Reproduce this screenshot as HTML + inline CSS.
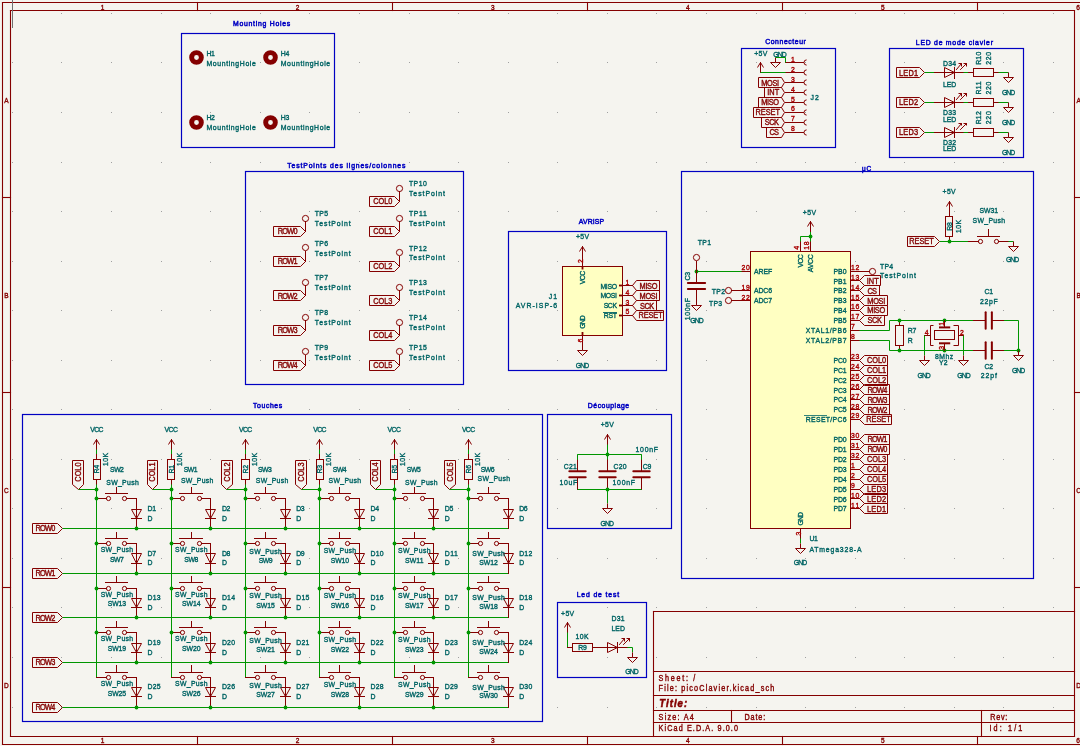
<!DOCTYPE html>
<html><head><meta charset="utf-8"><style>
html,body{margin:0;padding:0;background:#f5f4ef;overflow:hidden;}
svg{display:block;will-change:transform;}
text{font-family:"Liberation Sans", sans-serif;}
</style></head><body>
<svg width="1080" height="746" viewBox="0 0 1080 746">
<rect x="0" y="0" width="1080" height="746" fill="#f5f4ef"/>
<rect x="12" y="13" width="1" height="1" fill="#a0a0a0"/>
<rect x="12" y="62" width="1" height="1" fill="#a0a0a0"/>
<rect x="12" y="112" width="1" height="1" fill="#a0a0a0"/>
<rect x="12" y="162" width="1" height="1" fill="#a0a0a0"/>
<rect x="12" y="211" width="1" height="1" fill="#a0a0a0"/>
<rect x="12" y="261" width="1" height="1" fill="#a0a0a0"/>
<rect x="12" y="310" width="1" height="1" fill="#a0a0a0"/>
<rect x="12" y="360" width="1" height="1" fill="#a0a0a0"/>
<rect x="12" y="409" width="1" height="1" fill="#a0a0a0"/>
<rect x="12" y="459" width="1" height="1" fill="#a0a0a0"/>
<rect x="12" y="508" width="1" height="1" fill="#a0a0a0"/>
<rect x="12" y="558" width="1" height="1" fill="#a0a0a0"/>
<rect x="12" y="607" width="1" height="1" fill="#a0a0a0"/>
<rect x="12" y="657" width="1" height="1" fill="#a0a0a0"/>
<rect x="12" y="707" width="1" height="1" fill="#a0a0a0"/>
<rect x="61" y="13" width="1" height="1" fill="#a0a0a0"/>
<rect x="61" y="62" width="1" height="1" fill="#a0a0a0"/>
<rect x="61" y="112" width="1" height="1" fill="#a0a0a0"/>
<rect x="61" y="162" width="1" height="1" fill="#a0a0a0"/>
<rect x="61" y="211" width="1" height="1" fill="#a0a0a0"/>
<rect x="61" y="261" width="1" height="1" fill="#a0a0a0"/>
<rect x="61" y="310" width="1" height="1" fill="#a0a0a0"/>
<rect x="61" y="360" width="1" height="1" fill="#a0a0a0"/>
<rect x="61" y="409" width="1" height="1" fill="#a0a0a0"/>
<rect x="61" y="459" width="1" height="1" fill="#a0a0a0"/>
<rect x="61" y="508" width="1" height="1" fill="#a0a0a0"/>
<rect x="61" y="558" width="1" height="1" fill="#a0a0a0"/>
<rect x="61" y="607" width="1" height="1" fill="#a0a0a0"/>
<rect x="61" y="657" width="1" height="1" fill="#a0a0a0"/>
<rect x="61" y="707" width="1" height="1" fill="#a0a0a0"/>
<rect x="111" y="13" width="1" height="1" fill="#a0a0a0"/>
<rect x="111" y="62" width="1" height="1" fill="#a0a0a0"/>
<rect x="111" y="112" width="1" height="1" fill="#a0a0a0"/>
<rect x="111" y="162" width="1" height="1" fill="#a0a0a0"/>
<rect x="111" y="211" width="1" height="1" fill="#a0a0a0"/>
<rect x="111" y="261" width="1" height="1" fill="#a0a0a0"/>
<rect x="111" y="310" width="1" height="1" fill="#a0a0a0"/>
<rect x="111" y="360" width="1" height="1" fill="#a0a0a0"/>
<rect x="111" y="409" width="1" height="1" fill="#a0a0a0"/>
<rect x="111" y="459" width="1" height="1" fill="#a0a0a0"/>
<rect x="111" y="508" width="1" height="1" fill="#a0a0a0"/>
<rect x="111" y="558" width="1" height="1" fill="#a0a0a0"/>
<rect x="111" y="607" width="1" height="1" fill="#a0a0a0"/>
<rect x="111" y="657" width="1" height="1" fill="#a0a0a0"/>
<rect x="111" y="707" width="1" height="1" fill="#a0a0a0"/>
<rect x="161" y="13" width="1" height="1" fill="#a0a0a0"/>
<rect x="161" y="62" width="1" height="1" fill="#a0a0a0"/>
<rect x="161" y="112" width="1" height="1" fill="#a0a0a0"/>
<rect x="161" y="162" width="1" height="1" fill="#a0a0a0"/>
<rect x="161" y="211" width="1" height="1" fill="#a0a0a0"/>
<rect x="161" y="261" width="1" height="1" fill="#a0a0a0"/>
<rect x="161" y="310" width="1" height="1" fill="#a0a0a0"/>
<rect x="161" y="360" width="1" height="1" fill="#a0a0a0"/>
<rect x="161" y="409" width="1" height="1" fill="#a0a0a0"/>
<rect x="161" y="459" width="1" height="1" fill="#a0a0a0"/>
<rect x="161" y="508" width="1" height="1" fill="#a0a0a0"/>
<rect x="161" y="558" width="1" height="1" fill="#a0a0a0"/>
<rect x="161" y="607" width="1" height="1" fill="#a0a0a0"/>
<rect x="161" y="657" width="1" height="1" fill="#a0a0a0"/>
<rect x="161" y="707" width="1" height="1" fill="#a0a0a0"/>
<rect x="210" y="13" width="1" height="1" fill="#a0a0a0"/>
<rect x="210" y="62" width="1" height="1" fill="#a0a0a0"/>
<rect x="210" y="112" width="1" height="1" fill="#a0a0a0"/>
<rect x="210" y="162" width="1" height="1" fill="#a0a0a0"/>
<rect x="210" y="211" width="1" height="1" fill="#a0a0a0"/>
<rect x="210" y="261" width="1" height="1" fill="#a0a0a0"/>
<rect x="210" y="310" width="1" height="1" fill="#a0a0a0"/>
<rect x="210" y="360" width="1" height="1" fill="#a0a0a0"/>
<rect x="210" y="409" width="1" height="1" fill="#a0a0a0"/>
<rect x="210" y="459" width="1" height="1" fill="#a0a0a0"/>
<rect x="210" y="508" width="1" height="1" fill="#a0a0a0"/>
<rect x="210" y="558" width="1" height="1" fill="#a0a0a0"/>
<rect x="210" y="607" width="1" height="1" fill="#a0a0a0"/>
<rect x="210" y="657" width="1" height="1" fill="#a0a0a0"/>
<rect x="210" y="707" width="1" height="1" fill="#a0a0a0"/>
<rect x="260" y="13" width="1" height="1" fill="#a0a0a0"/>
<rect x="260" y="62" width="1" height="1" fill="#a0a0a0"/>
<rect x="260" y="112" width="1" height="1" fill="#a0a0a0"/>
<rect x="260" y="162" width="1" height="1" fill="#a0a0a0"/>
<rect x="260" y="211" width="1" height="1" fill="#a0a0a0"/>
<rect x="260" y="261" width="1" height="1" fill="#a0a0a0"/>
<rect x="260" y="310" width="1" height="1" fill="#a0a0a0"/>
<rect x="260" y="360" width="1" height="1" fill="#a0a0a0"/>
<rect x="260" y="409" width="1" height="1" fill="#a0a0a0"/>
<rect x="260" y="459" width="1" height="1" fill="#a0a0a0"/>
<rect x="260" y="508" width="1" height="1" fill="#a0a0a0"/>
<rect x="260" y="558" width="1" height="1" fill="#a0a0a0"/>
<rect x="260" y="607" width="1" height="1" fill="#a0a0a0"/>
<rect x="260" y="657" width="1" height="1" fill="#a0a0a0"/>
<rect x="260" y="707" width="1" height="1" fill="#a0a0a0"/>
<rect x="309" y="13" width="1" height="1" fill="#a0a0a0"/>
<rect x="309" y="62" width="1" height="1" fill="#a0a0a0"/>
<rect x="309" y="112" width="1" height="1" fill="#a0a0a0"/>
<rect x="309" y="162" width="1" height="1" fill="#a0a0a0"/>
<rect x="309" y="211" width="1" height="1" fill="#a0a0a0"/>
<rect x="309" y="261" width="1" height="1" fill="#a0a0a0"/>
<rect x="309" y="310" width="1" height="1" fill="#a0a0a0"/>
<rect x="309" y="360" width="1" height="1" fill="#a0a0a0"/>
<rect x="309" y="409" width="1" height="1" fill="#a0a0a0"/>
<rect x="309" y="459" width="1" height="1" fill="#a0a0a0"/>
<rect x="309" y="508" width="1" height="1" fill="#a0a0a0"/>
<rect x="309" y="558" width="1" height="1" fill="#a0a0a0"/>
<rect x="309" y="607" width="1" height="1" fill="#a0a0a0"/>
<rect x="309" y="657" width="1" height="1" fill="#a0a0a0"/>
<rect x="309" y="707" width="1" height="1" fill="#a0a0a0"/>
<rect x="359" y="13" width="1" height="1" fill="#a0a0a0"/>
<rect x="359" y="62" width="1" height="1" fill="#a0a0a0"/>
<rect x="359" y="112" width="1" height="1" fill="#a0a0a0"/>
<rect x="359" y="162" width="1" height="1" fill="#a0a0a0"/>
<rect x="359" y="211" width="1" height="1" fill="#a0a0a0"/>
<rect x="359" y="261" width="1" height="1" fill="#a0a0a0"/>
<rect x="359" y="310" width="1" height="1" fill="#a0a0a0"/>
<rect x="359" y="360" width="1" height="1" fill="#a0a0a0"/>
<rect x="359" y="409" width="1" height="1" fill="#a0a0a0"/>
<rect x="359" y="459" width="1" height="1" fill="#a0a0a0"/>
<rect x="359" y="508" width="1" height="1" fill="#a0a0a0"/>
<rect x="359" y="558" width="1" height="1" fill="#a0a0a0"/>
<rect x="359" y="607" width="1" height="1" fill="#a0a0a0"/>
<rect x="359" y="657" width="1" height="1" fill="#a0a0a0"/>
<rect x="359" y="707" width="1" height="1" fill="#a0a0a0"/>
<rect x="409" y="13" width="1" height="1" fill="#a0a0a0"/>
<rect x="409" y="62" width="1" height="1" fill="#a0a0a0"/>
<rect x="409" y="112" width="1" height="1" fill="#a0a0a0"/>
<rect x="409" y="162" width="1" height="1" fill="#a0a0a0"/>
<rect x="409" y="211" width="1" height="1" fill="#a0a0a0"/>
<rect x="409" y="261" width="1" height="1" fill="#a0a0a0"/>
<rect x="409" y="310" width="1" height="1" fill="#a0a0a0"/>
<rect x="409" y="360" width="1" height="1" fill="#a0a0a0"/>
<rect x="409" y="409" width="1" height="1" fill="#a0a0a0"/>
<rect x="409" y="459" width="1" height="1" fill="#a0a0a0"/>
<rect x="409" y="508" width="1" height="1" fill="#a0a0a0"/>
<rect x="409" y="558" width="1" height="1" fill="#a0a0a0"/>
<rect x="409" y="607" width="1" height="1" fill="#a0a0a0"/>
<rect x="409" y="657" width="1" height="1" fill="#a0a0a0"/>
<rect x="409" y="707" width="1" height="1" fill="#a0a0a0"/>
<rect x="458" y="13" width="1" height="1" fill="#a0a0a0"/>
<rect x="458" y="62" width="1" height="1" fill="#a0a0a0"/>
<rect x="458" y="112" width="1" height="1" fill="#a0a0a0"/>
<rect x="458" y="162" width="1" height="1" fill="#a0a0a0"/>
<rect x="458" y="211" width="1" height="1" fill="#a0a0a0"/>
<rect x="458" y="261" width="1" height="1" fill="#a0a0a0"/>
<rect x="458" y="310" width="1" height="1" fill="#a0a0a0"/>
<rect x="458" y="360" width="1" height="1" fill="#a0a0a0"/>
<rect x="458" y="409" width="1" height="1" fill="#a0a0a0"/>
<rect x="458" y="459" width="1" height="1" fill="#a0a0a0"/>
<rect x="458" y="508" width="1" height="1" fill="#a0a0a0"/>
<rect x="458" y="558" width="1" height="1" fill="#a0a0a0"/>
<rect x="458" y="607" width="1" height="1" fill="#a0a0a0"/>
<rect x="458" y="657" width="1" height="1" fill="#a0a0a0"/>
<rect x="458" y="707" width="1" height="1" fill="#a0a0a0"/>
<rect x="508" y="13" width="1" height="1" fill="#a0a0a0"/>
<rect x="508" y="62" width="1" height="1" fill="#a0a0a0"/>
<rect x="508" y="112" width="1" height="1" fill="#a0a0a0"/>
<rect x="508" y="162" width="1" height="1" fill="#a0a0a0"/>
<rect x="508" y="211" width="1" height="1" fill="#a0a0a0"/>
<rect x="508" y="261" width="1" height="1" fill="#a0a0a0"/>
<rect x="508" y="310" width="1" height="1" fill="#a0a0a0"/>
<rect x="508" y="360" width="1" height="1" fill="#a0a0a0"/>
<rect x="508" y="409" width="1" height="1" fill="#a0a0a0"/>
<rect x="508" y="459" width="1" height="1" fill="#a0a0a0"/>
<rect x="508" y="508" width="1" height="1" fill="#a0a0a0"/>
<rect x="508" y="558" width="1" height="1" fill="#a0a0a0"/>
<rect x="508" y="607" width="1" height="1" fill="#a0a0a0"/>
<rect x="508" y="657" width="1" height="1" fill="#a0a0a0"/>
<rect x="508" y="707" width="1" height="1" fill="#a0a0a0"/>
<rect x="557" y="13" width="1" height="1" fill="#a0a0a0"/>
<rect x="557" y="62" width="1" height="1" fill="#a0a0a0"/>
<rect x="557" y="112" width="1" height="1" fill="#a0a0a0"/>
<rect x="557" y="162" width="1" height="1" fill="#a0a0a0"/>
<rect x="557" y="211" width="1" height="1" fill="#a0a0a0"/>
<rect x="557" y="261" width="1" height="1" fill="#a0a0a0"/>
<rect x="557" y="310" width="1" height="1" fill="#a0a0a0"/>
<rect x="557" y="360" width="1" height="1" fill="#a0a0a0"/>
<rect x="557" y="409" width="1" height="1" fill="#a0a0a0"/>
<rect x="557" y="459" width="1" height="1" fill="#a0a0a0"/>
<rect x="557" y="508" width="1" height="1" fill="#a0a0a0"/>
<rect x="557" y="558" width="1" height="1" fill="#a0a0a0"/>
<rect x="557" y="607" width="1" height="1" fill="#a0a0a0"/>
<rect x="557" y="657" width="1" height="1" fill="#a0a0a0"/>
<rect x="557" y="707" width="1" height="1" fill="#a0a0a0"/>
<rect x="607" y="13" width="1" height="1" fill="#a0a0a0"/>
<rect x="607" y="62" width="1" height="1" fill="#a0a0a0"/>
<rect x="607" y="112" width="1" height="1" fill="#a0a0a0"/>
<rect x="607" y="162" width="1" height="1" fill="#a0a0a0"/>
<rect x="607" y="211" width="1" height="1" fill="#a0a0a0"/>
<rect x="607" y="261" width="1" height="1" fill="#a0a0a0"/>
<rect x="607" y="310" width="1" height="1" fill="#a0a0a0"/>
<rect x="607" y="360" width="1" height="1" fill="#a0a0a0"/>
<rect x="607" y="409" width="1" height="1" fill="#a0a0a0"/>
<rect x="607" y="459" width="1" height="1" fill="#a0a0a0"/>
<rect x="607" y="508" width="1" height="1" fill="#a0a0a0"/>
<rect x="607" y="558" width="1" height="1" fill="#a0a0a0"/>
<rect x="607" y="607" width="1" height="1" fill="#a0a0a0"/>
<rect x="607" y="657" width="1" height="1" fill="#a0a0a0"/>
<rect x="607" y="707" width="1" height="1" fill="#a0a0a0"/>
<rect x="656" y="13" width="1" height="1" fill="#a0a0a0"/>
<rect x="656" y="62" width="1" height="1" fill="#a0a0a0"/>
<rect x="656" y="112" width="1" height="1" fill="#a0a0a0"/>
<rect x="656" y="162" width="1" height="1" fill="#a0a0a0"/>
<rect x="656" y="211" width="1" height="1" fill="#a0a0a0"/>
<rect x="656" y="261" width="1" height="1" fill="#a0a0a0"/>
<rect x="656" y="310" width="1" height="1" fill="#a0a0a0"/>
<rect x="656" y="360" width="1" height="1" fill="#a0a0a0"/>
<rect x="656" y="409" width="1" height="1" fill="#a0a0a0"/>
<rect x="656" y="459" width="1" height="1" fill="#a0a0a0"/>
<rect x="656" y="508" width="1" height="1" fill="#a0a0a0"/>
<rect x="656" y="558" width="1" height="1" fill="#a0a0a0"/>
<rect x="656" y="607" width="1" height="1" fill="#a0a0a0"/>
<rect x="656" y="657" width="1" height="1" fill="#a0a0a0"/>
<rect x="656" y="707" width="1" height="1" fill="#a0a0a0"/>
<rect x="706" y="13" width="1" height="1" fill="#a0a0a0"/>
<rect x="706" y="62" width="1" height="1" fill="#a0a0a0"/>
<rect x="706" y="112" width="1" height="1" fill="#a0a0a0"/>
<rect x="706" y="162" width="1" height="1" fill="#a0a0a0"/>
<rect x="706" y="211" width="1" height="1" fill="#a0a0a0"/>
<rect x="706" y="261" width="1" height="1" fill="#a0a0a0"/>
<rect x="706" y="310" width="1" height="1" fill="#a0a0a0"/>
<rect x="706" y="360" width="1" height="1" fill="#a0a0a0"/>
<rect x="706" y="409" width="1" height="1" fill="#a0a0a0"/>
<rect x="706" y="459" width="1" height="1" fill="#a0a0a0"/>
<rect x="706" y="508" width="1" height="1" fill="#a0a0a0"/>
<rect x="706" y="558" width="1" height="1" fill="#a0a0a0"/>
<rect x="706" y="607" width="1" height="1" fill="#a0a0a0"/>
<rect x="706" y="657" width="1" height="1" fill="#a0a0a0"/>
<rect x="706" y="707" width="1" height="1" fill="#a0a0a0"/>
<rect x="756" y="13" width="1" height="1" fill="#a0a0a0"/>
<rect x="756" y="62" width="1" height="1" fill="#a0a0a0"/>
<rect x="756" y="112" width="1" height="1" fill="#a0a0a0"/>
<rect x="756" y="162" width="1" height="1" fill="#a0a0a0"/>
<rect x="756" y="211" width="1" height="1" fill="#a0a0a0"/>
<rect x="756" y="261" width="1" height="1" fill="#a0a0a0"/>
<rect x="756" y="310" width="1" height="1" fill="#a0a0a0"/>
<rect x="756" y="360" width="1" height="1" fill="#a0a0a0"/>
<rect x="756" y="409" width="1" height="1" fill="#a0a0a0"/>
<rect x="756" y="459" width="1" height="1" fill="#a0a0a0"/>
<rect x="756" y="508" width="1" height="1" fill="#a0a0a0"/>
<rect x="756" y="558" width="1" height="1" fill="#a0a0a0"/>
<rect x="756" y="607" width="1" height="1" fill="#a0a0a0"/>
<rect x="756" y="657" width="1" height="1" fill="#a0a0a0"/>
<rect x="756" y="707" width="1" height="1" fill="#a0a0a0"/>
<rect x="805" y="13" width="1" height="1" fill="#a0a0a0"/>
<rect x="805" y="62" width="1" height="1" fill="#a0a0a0"/>
<rect x="805" y="112" width="1" height="1" fill="#a0a0a0"/>
<rect x="805" y="162" width="1" height="1" fill="#a0a0a0"/>
<rect x="805" y="211" width="1" height="1" fill="#a0a0a0"/>
<rect x="805" y="261" width="1" height="1" fill="#a0a0a0"/>
<rect x="805" y="310" width="1" height="1" fill="#a0a0a0"/>
<rect x="805" y="360" width="1" height="1" fill="#a0a0a0"/>
<rect x="805" y="409" width="1" height="1" fill="#a0a0a0"/>
<rect x="805" y="459" width="1" height="1" fill="#a0a0a0"/>
<rect x="805" y="508" width="1" height="1" fill="#a0a0a0"/>
<rect x="805" y="558" width="1" height="1" fill="#a0a0a0"/>
<rect x="805" y="607" width="1" height="1" fill="#a0a0a0"/>
<rect x="805" y="657" width="1" height="1" fill="#a0a0a0"/>
<rect x="805" y="707" width="1" height="1" fill="#a0a0a0"/>
<rect x="855" y="13" width="1" height="1" fill="#a0a0a0"/>
<rect x="855" y="62" width="1" height="1" fill="#a0a0a0"/>
<rect x="855" y="112" width="1" height="1" fill="#a0a0a0"/>
<rect x="855" y="162" width="1" height="1" fill="#a0a0a0"/>
<rect x="855" y="211" width="1" height="1" fill="#a0a0a0"/>
<rect x="855" y="261" width="1" height="1" fill="#a0a0a0"/>
<rect x="855" y="310" width="1" height="1" fill="#a0a0a0"/>
<rect x="855" y="360" width="1" height="1" fill="#a0a0a0"/>
<rect x="855" y="409" width="1" height="1" fill="#a0a0a0"/>
<rect x="855" y="459" width="1" height="1" fill="#a0a0a0"/>
<rect x="855" y="508" width="1" height="1" fill="#a0a0a0"/>
<rect x="855" y="558" width="1" height="1" fill="#a0a0a0"/>
<rect x="855" y="607" width="1" height="1" fill="#a0a0a0"/>
<rect x="855" y="657" width="1" height="1" fill="#a0a0a0"/>
<rect x="855" y="707" width="1" height="1" fill="#a0a0a0"/>
<rect x="904" y="13" width="1" height="1" fill="#a0a0a0"/>
<rect x="904" y="62" width="1" height="1" fill="#a0a0a0"/>
<rect x="904" y="112" width="1" height="1" fill="#a0a0a0"/>
<rect x="904" y="162" width="1" height="1" fill="#a0a0a0"/>
<rect x="904" y="211" width="1" height="1" fill="#a0a0a0"/>
<rect x="904" y="261" width="1" height="1" fill="#a0a0a0"/>
<rect x="904" y="310" width="1" height="1" fill="#a0a0a0"/>
<rect x="904" y="360" width="1" height="1" fill="#a0a0a0"/>
<rect x="904" y="409" width="1" height="1" fill="#a0a0a0"/>
<rect x="904" y="459" width="1" height="1" fill="#a0a0a0"/>
<rect x="904" y="508" width="1" height="1" fill="#a0a0a0"/>
<rect x="904" y="558" width="1" height="1" fill="#a0a0a0"/>
<rect x="904" y="607" width="1" height="1" fill="#a0a0a0"/>
<rect x="904" y="657" width="1" height="1" fill="#a0a0a0"/>
<rect x="904" y="707" width="1" height="1" fill="#a0a0a0"/>
<rect x="954" y="13" width="1" height="1" fill="#a0a0a0"/>
<rect x="954" y="62" width="1" height="1" fill="#a0a0a0"/>
<rect x="954" y="112" width="1" height="1" fill="#a0a0a0"/>
<rect x="954" y="162" width="1" height="1" fill="#a0a0a0"/>
<rect x="954" y="211" width="1" height="1" fill="#a0a0a0"/>
<rect x="954" y="261" width="1" height="1" fill="#a0a0a0"/>
<rect x="954" y="310" width="1" height="1" fill="#a0a0a0"/>
<rect x="954" y="360" width="1" height="1" fill="#a0a0a0"/>
<rect x="954" y="409" width="1" height="1" fill="#a0a0a0"/>
<rect x="954" y="459" width="1" height="1" fill="#a0a0a0"/>
<rect x="954" y="508" width="1" height="1" fill="#a0a0a0"/>
<rect x="954" y="558" width="1" height="1" fill="#a0a0a0"/>
<rect x="954" y="607" width="1" height="1" fill="#a0a0a0"/>
<rect x="954" y="657" width="1" height="1" fill="#a0a0a0"/>
<rect x="954" y="707" width="1" height="1" fill="#a0a0a0"/>
<rect x="1003" y="13" width="1" height="1" fill="#a0a0a0"/>
<rect x="1003" y="62" width="1" height="1" fill="#a0a0a0"/>
<rect x="1003" y="112" width="1" height="1" fill="#a0a0a0"/>
<rect x="1003" y="162" width="1" height="1" fill="#a0a0a0"/>
<rect x="1003" y="211" width="1" height="1" fill="#a0a0a0"/>
<rect x="1003" y="261" width="1" height="1" fill="#a0a0a0"/>
<rect x="1003" y="310" width="1" height="1" fill="#a0a0a0"/>
<rect x="1003" y="360" width="1" height="1" fill="#a0a0a0"/>
<rect x="1003" y="409" width="1" height="1" fill="#a0a0a0"/>
<rect x="1003" y="459" width="1" height="1" fill="#a0a0a0"/>
<rect x="1003" y="508" width="1" height="1" fill="#a0a0a0"/>
<rect x="1003" y="558" width="1" height="1" fill="#a0a0a0"/>
<rect x="1003" y="607" width="1" height="1" fill="#a0a0a0"/>
<rect x="1003" y="657" width="1" height="1" fill="#a0a0a0"/>
<rect x="1003" y="707" width="1" height="1" fill="#a0a0a0"/>
<rect x="1053" y="13" width="1" height="1" fill="#a0a0a0"/>
<rect x="1053" y="62" width="1" height="1" fill="#a0a0a0"/>
<rect x="1053" y="112" width="1" height="1" fill="#a0a0a0"/>
<rect x="1053" y="162" width="1" height="1" fill="#a0a0a0"/>
<rect x="1053" y="211" width="1" height="1" fill="#a0a0a0"/>
<rect x="1053" y="261" width="1" height="1" fill="#a0a0a0"/>
<rect x="1053" y="310" width="1" height="1" fill="#a0a0a0"/>
<rect x="1053" y="360" width="1" height="1" fill="#a0a0a0"/>
<rect x="1053" y="409" width="1" height="1" fill="#a0a0a0"/>
<rect x="1053" y="459" width="1" height="1" fill="#a0a0a0"/>
<rect x="1053" y="508" width="1" height="1" fill="#a0a0a0"/>
<rect x="1053" y="558" width="1" height="1" fill="#a0a0a0"/>
<rect x="1053" y="607" width="1" height="1" fill="#a0a0a0"/>
<rect x="1053" y="657" width="1" height="1" fill="#a0a0a0"/>
<rect x="1053" y="707" width="1" height="1" fill="#a0a0a0"/>
<line x1="2.5" y1="2.5" x2="1090.5" y2="2.5" stroke="#840000" stroke-width="1.1" stroke-linecap="square"/>
<line x1="2.5" y1="2.5" x2="2.5" y2="744.5" stroke="#840000" stroke-width="1.1" stroke-linecap="square"/>
<line x1="2.5" y1="744.5" x2="1090.5" y2="744.5" stroke="#840000" stroke-width="1.1" stroke-linecap="square"/>
<line x1="10.5" y1="10.5" x2="1074.5" y2="10.5" stroke="#840000" stroke-width="1.1" stroke-linecap="square"/>
<line x1="10.5" y1="10.5" x2="10.5" y2="736.5" stroke="#840000" stroke-width="1.1" stroke-linecap="square"/>
<line x1="10.5" y1="736.5" x2="1074.5" y2="736.5" stroke="#840000" stroke-width="1.1" stroke-linecap="square"/>
<line x1="1074.5" y1="10.5" x2="1074.5" y2="736.5" stroke="#840000" stroke-width="1.1" stroke-linecap="square"/>
<line x1="197.5" y1="2.5" x2="197.5" y2="10.5" stroke="#840000" stroke-width="1.1" stroke-linecap="square"/>
<line x1="197.5" y1="736.5" x2="197.5" y2="744.5" stroke="#840000" stroke-width="1.1" stroke-linecap="square"/>
<line x1="392.5" y1="2.5" x2="392.5" y2="10.5" stroke="#840000" stroke-width="1.1" stroke-linecap="square"/>
<line x1="392.5" y1="736.5" x2="392.5" y2="744.5" stroke="#840000" stroke-width="1.1" stroke-linecap="square"/>
<line x1="587.5" y1="2.5" x2="587.5" y2="10.5" stroke="#840000" stroke-width="1.1" stroke-linecap="square"/>
<line x1="587.5" y1="736.5" x2="587.5" y2="744.5" stroke="#840000" stroke-width="1.1" stroke-linecap="square"/>
<line x1="782.5" y1="2.5" x2="782.5" y2="10.5" stroke="#840000" stroke-width="1.1" stroke-linecap="square"/>
<line x1="782.5" y1="736.5" x2="782.5" y2="744.5" stroke="#840000" stroke-width="1.1" stroke-linecap="square"/>
<line x1="977.5" y1="2.5" x2="977.5" y2="10.5" stroke="#840000" stroke-width="1.1" stroke-linecap="square"/>
<line x1="977.5" y1="736.5" x2="977.5" y2="744.5" stroke="#840000" stroke-width="1.1" stroke-linecap="square"/>
<line x1="2.5" y1="197.5" x2="10.5" y2="197.5" stroke="#840000" stroke-width="1.1" stroke-linecap="square"/>
<line x1="2.5" y1="392.5" x2="10.5" y2="392.5" stroke="#840000" stroke-width="1.1" stroke-linecap="square"/>
<line x1="2.5" y1="587.5" x2="10.5" y2="587.5" stroke="#840000" stroke-width="1.1" stroke-linecap="square"/>
<line x1="1074.5" y1="197.5" x2="1082.5" y2="197.5" stroke="#840000" stroke-width="1.1" stroke-linecap="square"/>
<line x1="1074.5" y1="392.5" x2="1082.5" y2="392.5" stroke="#840000" stroke-width="1.1" stroke-linecap="square"/>
<line x1="1074.5" y1="587.5" x2="1082.5" y2="587.5" stroke="#840000" stroke-width="1.1" stroke-linecap="square"/>
<text x="0" y="0" transform="translate(102.5 10.2) scale(0.86 1)" fill="#840000" stroke="#840000" stroke-width="0.4" font-size="7.6" text-anchor="middle">1</text>
<text x="0" y="0" transform="translate(102.5 742.6) scale(0.86 1)" fill="#840000" stroke="#840000" stroke-width="0.4" font-size="7.6" text-anchor="middle">1</text>
<text x="0" y="0" transform="translate(297.6 10.2) scale(0.86 1)" fill="#840000" stroke="#840000" stroke-width="0.4" font-size="7.6" text-anchor="middle">2</text>
<text x="0" y="0" transform="translate(297.6 742.6) scale(0.86 1)" fill="#840000" stroke="#840000" stroke-width="0.4" font-size="7.6" text-anchor="middle">2</text>
<text x="0" y="0" transform="translate(492.7 10.2) scale(0.86 1)" fill="#840000" stroke="#840000" stroke-width="0.4" font-size="7.6" text-anchor="middle">3</text>
<text x="0" y="0" transform="translate(492.7 742.6) scale(0.86 1)" fill="#840000" stroke="#840000" stroke-width="0.4" font-size="7.6" text-anchor="middle">3</text>
<text x="0" y="0" transform="translate(687.8 10.2) scale(0.86 1)" fill="#840000" stroke="#840000" stroke-width="0.4" font-size="7.6" text-anchor="middle">4</text>
<text x="0" y="0" transform="translate(687.8 742.6) scale(0.86 1)" fill="#840000" stroke="#840000" stroke-width="0.4" font-size="7.6" text-anchor="middle">4</text>
<text x="0" y="0" transform="translate(882.9 10.2) scale(0.86 1)" fill="#840000" stroke="#840000" stroke-width="0.4" font-size="7.6" text-anchor="middle">5</text>
<text x="0" y="0" transform="translate(882.9 742.6) scale(0.86 1)" fill="#840000" stroke="#840000" stroke-width="0.4" font-size="7.6" text-anchor="middle">5</text>
<text x="0" y="0" transform="translate(1078 10.2) scale(0.86 1)" fill="#840000" stroke="#840000" stroke-width="0.4" font-size="7.6" text-anchor="middle">6</text>
<text x="0" y="0" transform="translate(1078 742.6) scale(0.86 1)" fill="#840000" stroke="#840000" stroke-width="0.4" font-size="7.6" text-anchor="middle">6</text>
<text x="0" y="0" transform="translate(6.4 102.7) scale(0.86 1)" fill="#840000" stroke="#840000" stroke-width="0.4" font-size="7.6" text-anchor="middle">A</text>
<text x="0" y="0" transform="translate(1078.6 102.7) scale(0.86 1)" fill="#840000" stroke="#840000" stroke-width="0.4" font-size="7.6" text-anchor="middle">A</text>
<text x="0" y="0" transform="translate(6.4 297.8) scale(0.86 1)" fill="#840000" stroke="#840000" stroke-width="0.4" font-size="7.6" text-anchor="middle">B</text>
<text x="0" y="0" transform="translate(1078.6 297.8) scale(0.86 1)" fill="#840000" stroke="#840000" stroke-width="0.4" font-size="7.6" text-anchor="middle">B</text>
<text x="0" y="0" transform="translate(6.4 492.9) scale(0.86 1)" fill="#840000" stroke="#840000" stroke-width="0.4" font-size="7.6" text-anchor="middle">C</text>
<text x="0" y="0" transform="translate(1078.6 492.9) scale(0.86 1)" fill="#840000" stroke="#840000" stroke-width="0.4" font-size="7.6" text-anchor="middle">C</text>
<text x="0" y="0" transform="translate(6.4 688) scale(0.86 1)" fill="#840000" stroke="#840000" stroke-width="0.4" font-size="7.6" text-anchor="middle">D</text>
<text x="0" y="0" transform="translate(1078.6 688) scale(0.86 1)" fill="#840000" stroke="#840000" stroke-width="0.4" font-size="7.6" text-anchor="middle">D</text>
<line x1="653.5" y1="611.5" x2="1074.5" y2="611.5" stroke="#840000" stroke-width="1.1" stroke-linecap="square"/>
<line x1="653.5" y1="611.5" x2="653.5" y2="736.5" stroke="#840000" stroke-width="1.1" stroke-linecap="square"/>
<line x1="653.5" y1="671.5" x2="1074.5" y2="671.5" stroke="#840000" stroke-width="1.1" stroke-linecap="square"/>
<line x1="653.5" y1="695.5" x2="1074.5" y2="695.5" stroke="#840000" stroke-width="1.1" stroke-linecap="square"/>
<line x1="653.5" y1="710.5" x2="1074.5" y2="710.5" stroke="#840000" stroke-width="1.1" stroke-linecap="square"/>
<line x1="653.5" y1="722.5" x2="1074.5" y2="722.5" stroke="#840000" stroke-width="1.1" stroke-linecap="square"/>
<line x1="731.5" y1="710.5" x2="731.5" y2="722.5" stroke="#840000" stroke-width="1.1" stroke-linecap="square"/>
<line x1="981.5" y1="710.5" x2="981.5" y2="736.5" stroke="#840000" stroke-width="1.1" stroke-linecap="square"/>
<text x="0" y="0" transform="translate(658.6 681) scale(0.86 1)" fill="#840000" stroke="#840000" stroke-width="0.4" font-size="8.4" text-anchor="start" textLength="42.67" lengthAdjust="spacing">Sheet: /</text>
<text x="0" y="0" transform="translate(658.6 691.2) scale(0.86 1)" fill="#840000" stroke="#840000" stroke-width="0.4" font-size="8.4" text-anchor="start" textLength="134.53" lengthAdjust="spacing">File: picoClavier.kicad_sch</text>
<text x="0" y="0" transform="translate(659.2 706.6) scale(0.86 1)" fill="#840000" stroke="#840000" font-size="11.2" text-anchor="start" textLength="32.56" lengthAdjust="spacing" font-weight="bold" font-style="italic" stroke-width="0.6">Title:</text>
<text x="0" y="0" transform="translate(658.6 720.4) scale(0.86 1)" fill="#840000" stroke="#840000" stroke-width="0.4" font-size="8.4" text-anchor="start" textLength="40.93" lengthAdjust="spacing">Size: A4</text>
<text x="0" y="0" transform="translate(744.4 720.4) scale(0.86 1)" fill="#840000" stroke="#840000" stroke-width="0.4" font-size="8.4" text-anchor="start" textLength="24.19" lengthAdjust="spacing">Date:</text>
<text x="0" y="0" transform="translate(658.6 731.2) scale(0.86 1)" fill="#840000" stroke="#840000" stroke-width="0.4" font-size="8.4" text-anchor="start" textLength="92.33" lengthAdjust="spacing">KiCad E.D.A. 9.0.0</text>
<text x="0" y="0" transform="translate(990.2 720.4) scale(0.86 1)" fill="#840000" stroke="#840000" stroke-width="0.4" font-size="8.4" text-anchor="start" textLength="19.88" lengthAdjust="spacing">Rev:</text>
<text x="0" y="0" transform="translate(989.4 731.2) scale(0.86 1)" fill="#840000" stroke="#840000" stroke-width="0.4" font-size="8.4" text-anchor="start" textLength="38.37" lengthAdjust="spacing">Id: 1/1</text>
<line x1="12.5" y1="0.5" x2="12.5" y2="27.5" stroke="#707070" stroke-width="1" stroke-linecap="square"/>
<rect x="181.5" y="33.5" width="153" height="114" stroke="#0000c2" stroke-width="1.2" fill="none"/>
<text x="0" y="0" transform="translate(261.6 26.1) scale(0.86 1)" fill="#0000c2" stroke="#0000c2" font-size="8.0" text-anchor="middle" textLength="66.63" lengthAdjust="spacing" stroke-width="0.55">Mounting Holes</text>
<circle cx="196.5" cy="57.5" r="4.85" stroke="#840000" stroke-width="4.9" fill="none"/>
<text x="0" y="0" transform="translate(206.44 55.56) scale(0.86 1)" fill="#006464" stroke="#006464" stroke-width="0.4" font-size="8.0" text-anchor="start" textLength="9.88" lengthAdjust="spacing">H1</text>
<text x="0" y="0" transform="translate(206.44 65.66) scale(0.86 1)" fill="#006464" stroke="#006464" stroke-width="0.4" font-size="8.0" text-anchor="start" textLength="57.44" lengthAdjust="spacing">MountingHole</text>
<circle cx="270.5" cy="57.5" r="4.85" stroke="#840000" stroke-width="4.9" fill="none"/>
<text x="0" y="0" transform="translate(280.75 55.56) scale(0.86 1)" fill="#006464" stroke="#006464" stroke-width="0.4" font-size="8.0" text-anchor="start" textLength="9.88" lengthAdjust="spacing">H4</text>
<text x="0" y="0" transform="translate(280.75 65.66) scale(0.86 1)" fill="#006464" stroke="#006464" stroke-width="0.4" font-size="8.0" text-anchor="start" textLength="57.44" lengthAdjust="spacing">MountingHole</text>
<circle cx="196.5" cy="122.5" r="4.85" stroke="#840000" stroke-width="4.9" fill="none"/>
<text x="0" y="0" transform="translate(206.44 119.98) scale(0.86 1)" fill="#006464" stroke="#006464" stroke-width="0.4" font-size="8.0" text-anchor="start" textLength="9.88" lengthAdjust="spacing">H2</text>
<text x="0" y="0" transform="translate(206.44 130.08) scale(0.86 1)" fill="#006464" stroke="#006464" stroke-width="0.4" font-size="8.0" text-anchor="start" textLength="57.44" lengthAdjust="spacing">MountingHole</text>
<circle cx="270.5" cy="122.5" r="4.85" stroke="#840000" stroke-width="4.9" fill="none"/>
<text x="0" y="0" transform="translate(280.75 119.98) scale(0.86 1)" fill="#006464" stroke="#006464" stroke-width="0.4" font-size="8.0" text-anchor="start" textLength="9.88" lengthAdjust="spacing">H3</text>
<text x="0" y="0" transform="translate(280.75 130.08) scale(0.86 1)" fill="#006464" stroke="#006464" stroke-width="0.4" font-size="8.0" text-anchor="start" textLength="57.44" lengthAdjust="spacing">MountingHole</text>
<rect x="245.5" y="171.5" width="218" height="213" stroke="#0000c2" stroke-width="1.2" fill="none"/>
<text x="0" y="0" transform="translate(346.4 167.6) scale(0.86 1)" fill="#0000c2" stroke="#0000c2" font-size="8.0" text-anchor="middle" textLength="137.33" lengthAdjust="spacing" stroke-width="0.55">TestPoints des lignes/colonnes</text>
<line x1="305.5" y1="231.5" x2="305.5" y2="221.5" stroke="#840000" stroke-width="1.0" stroke-linecap="square"/>
<circle cx="305.5" cy="218.5" r="3.1" stroke="#840000" stroke-width="1.0" fill="none"/>
<polygon points="305.5,231.5 300.5,226.5 273.5,226.5 273.5,236.5 300.5,236.5" stroke="#840000" stroke-width="1.0" fill="none" stroke-linejoin="miter"/>
<text x="0" y="0" transform="translate(287.69 234.19) scale(0.86 1)" fill="#840000" stroke="#840000" stroke-width="0.4" font-size="8.6" text-anchor="middle" textLength="23.25" lengthAdjust="spacing">ROW0</text>
<text x="0" y="0" transform="translate(314.84 215.89) scale(0.86 1)" fill="#006464" stroke="#006464" stroke-width="0.4" font-size="8.0" text-anchor="start" textLength="15.35" lengthAdjust="spacing">TP5</text>
<text x="0" y="0" transform="translate(314.84 225.79) scale(0.86 1)" fill="#006464" stroke="#006464" stroke-width="0.4" font-size="8.0" text-anchor="start" textLength="41.74" lengthAdjust="spacing">TestPoint</text>
<line x1="305.5" y1="261.5" x2="305.5" y2="251.5" stroke="#840000" stroke-width="1.0" stroke-linecap="square"/>
<circle cx="305.5" cy="247.5" r="3.1" stroke="#840000" stroke-width="1.0" fill="none"/>
<polygon points="305.5,261.5 300.5,256.5 273.5,256.5 273.5,266.5 300.5,266.5" stroke="#840000" stroke-width="1.0" fill="none" stroke-linejoin="miter"/>
<text x="0" y="0" transform="translate(287.69 263.92) scale(0.86 1)" fill="#840000" stroke="#840000" stroke-width="0.4" font-size="8.6" text-anchor="middle" textLength="23.25" lengthAdjust="spacing">ROW1</text>
<text x="0" y="0" transform="translate(314.84 245.62) scale(0.86 1)" fill="#006464" stroke="#006464" stroke-width="0.4" font-size="8.0" text-anchor="start" textLength="15.35" lengthAdjust="spacing">TP6</text>
<text x="0" y="0" transform="translate(314.84 255.52) scale(0.86 1)" fill="#006464" stroke="#006464" stroke-width="0.4" font-size="8.0" text-anchor="start" textLength="41.74" lengthAdjust="spacing">TestPoint</text>
<line x1="305.5" y1="295.5" x2="305.5" y2="285.5" stroke="#840000" stroke-width="1.0" stroke-linecap="square"/>
<circle cx="305.5" cy="282.5" r="3.1" stroke="#840000" stroke-width="1.0" fill="none"/>
<polygon points="305.5,295.5 300.5,290.5 273.5,290.5 273.5,300.5 300.5,300.5" stroke="#840000" stroke-width="1.0" fill="none" stroke-linejoin="miter"/>
<text x="0" y="0" transform="translate(287.69 298.61) scale(0.86 1)" fill="#840000" stroke="#840000" stroke-width="0.4" font-size="8.6" text-anchor="middle" textLength="23.25" lengthAdjust="spacing">ROW2</text>
<text x="0" y="0" transform="translate(314.84 280.31) scale(0.86 1)" fill="#006464" stroke="#006464" stroke-width="0.4" font-size="8.0" text-anchor="start" textLength="15.35" lengthAdjust="spacing">TP7</text>
<text x="0" y="0" transform="translate(314.84 290.2) scale(0.86 1)" fill="#006464" stroke="#006464" stroke-width="0.4" font-size="8.0" text-anchor="start" textLength="41.74" lengthAdjust="spacing">TestPoint</text>
<line x1="305.5" y1="330.5" x2="305.5" y2="320.5" stroke="#840000" stroke-width="1.0" stroke-linecap="square"/>
<circle cx="305.5" cy="317.5" r="3.1" stroke="#840000" stroke-width="1.0" fill="none"/>
<polygon points="305.5,330.5 300.5,325.5 273.5,325.5 273.5,335.5 300.5,335.5" stroke="#840000" stroke-width="1.0" fill="none" stroke-linejoin="miter"/>
<text x="0" y="0" transform="translate(287.69 333.29) scale(0.86 1)" fill="#840000" stroke="#840000" stroke-width="0.4" font-size="8.6" text-anchor="middle" textLength="23.25" lengthAdjust="spacing">ROW3</text>
<text x="0" y="0" transform="translate(314.84 314.99) scale(0.86 1)" fill="#006464" stroke="#006464" stroke-width="0.4" font-size="8.0" text-anchor="start" textLength="15.35" lengthAdjust="spacing">TP8</text>
<text x="0" y="0" transform="translate(314.84 324.89) scale(0.86 1)" fill="#006464" stroke="#006464" stroke-width="0.4" font-size="8.0" text-anchor="start" textLength="41.74" lengthAdjust="spacing">TestPoint</text>
<line x1="305.5" y1="365.5" x2="305.5" y2="355.5" stroke="#840000" stroke-width="1.0" stroke-linecap="square"/>
<circle cx="305.5" cy="351.5" r="3.1" stroke="#840000" stroke-width="1.0" fill="none"/>
<polygon points="305.5,365.5 300.5,360.5 273.5,360.5 273.5,370.5 300.5,370.5" stroke="#840000" stroke-width="1.0" fill="none" stroke-linejoin="miter"/>
<text x="0" y="0" transform="translate(287.69 367.98) scale(0.86 1)" fill="#840000" stroke="#840000" stroke-width="0.4" font-size="8.6" text-anchor="middle" textLength="23.25" lengthAdjust="spacing">ROW4</text>
<text x="0" y="0" transform="translate(314.84 349.68) scale(0.86 1)" fill="#006464" stroke="#006464" stroke-width="0.4" font-size="8.0" text-anchor="start" textLength="15.35" lengthAdjust="spacing">TP9</text>
<text x="0" y="0" transform="translate(314.84 359.57) scale(0.86 1)" fill="#006464" stroke="#006464" stroke-width="0.4" font-size="8.0" text-anchor="start" textLength="41.74" lengthAdjust="spacing">TestPoint</text>
<line x1="399.5" y1="201.5" x2="399.5" y2="191.5" stroke="#840000" stroke-width="1.0" stroke-linecap="square"/>
<circle cx="399.5" cy="188.5" r="3.1" stroke="#840000" stroke-width="1.0" fill="none"/>
<polygon points="399.5,201.5 394.5,196.5 369.5,196.5 369.5,206.5 394.5,206.5" stroke="#840000" stroke-width="1.0" fill="none" stroke-linejoin="miter"/>
<text x="0" y="0" transform="translate(382.77 204.46) scale(0.86 1)" fill="#840000" stroke="#840000" stroke-width="0.4" font-size="8.6" text-anchor="middle" textLength="22.38" lengthAdjust="spacing">COL0</text>
<text x="0" y="0" transform="translate(408.97 186.16) scale(0.86 1)" fill="#006464" stroke="#006464" stroke-width="0.4" font-size="8.0" text-anchor="start" textLength="20.7" lengthAdjust="spacing">TP10</text>
<text x="0" y="0" transform="translate(408.97 196.06) scale(0.86 1)" fill="#006464" stroke="#006464" stroke-width="0.4" font-size="8.0" text-anchor="start" textLength="41.74" lengthAdjust="spacing">TestPoint</text>
<line x1="399.5" y1="231.5" x2="399.5" y2="221.5" stroke="#840000" stroke-width="1.0" stroke-linecap="square"/>
<circle cx="399.5" cy="218.5" r="3.1" stroke="#840000" stroke-width="1.0" fill="none"/>
<polygon points="399.5,231.5 394.5,226.5 369.5,226.5 369.5,236.5 394.5,236.5" stroke="#840000" stroke-width="1.0" fill="none" stroke-linejoin="miter"/>
<text x="0" y="0" transform="translate(382.77 234.19) scale(0.86 1)" fill="#840000" stroke="#840000" stroke-width="0.4" font-size="8.6" text-anchor="middle" textLength="22.38" lengthAdjust="spacing">COL1</text>
<text x="0" y="0" transform="translate(408.97 215.89) scale(0.86 1)" fill="#006464" stroke="#006464" stroke-width="0.4" font-size="8.0" text-anchor="start" textLength="20.7" lengthAdjust="spacing">TP11</text>
<text x="0" y="0" transform="translate(408.97 225.79) scale(0.86 1)" fill="#006464" stroke="#006464" stroke-width="0.4" font-size="8.0" text-anchor="start" textLength="41.74" lengthAdjust="spacing">TestPoint</text>
<line x1="399.5" y1="266.5" x2="399.5" y2="256.5" stroke="#840000" stroke-width="1.0" stroke-linecap="square"/>
<circle cx="399.5" cy="252.5" r="3.1" stroke="#840000" stroke-width="1.0" fill="none"/>
<polygon points="399.5,266.5 394.5,261.5 369.5,261.5 369.5,271.5 394.5,271.5" stroke="#840000" stroke-width="1.0" fill="none" stroke-linejoin="miter"/>
<text x="0" y="0" transform="translate(382.77 268.88) scale(0.86 1)" fill="#840000" stroke="#840000" stroke-width="0.4" font-size="8.6" text-anchor="middle" textLength="22.38" lengthAdjust="spacing">COL2</text>
<text x="0" y="0" transform="translate(408.97 250.57) scale(0.86 1)" fill="#006464" stroke="#006464" stroke-width="0.4" font-size="8.0" text-anchor="start" textLength="20.7" lengthAdjust="spacing">TP12</text>
<text x="0" y="0" transform="translate(408.97 260.47) scale(0.86 1)" fill="#006464" stroke="#006464" stroke-width="0.4" font-size="8.0" text-anchor="start" textLength="41.74" lengthAdjust="spacing">TestPoint</text>
<line x1="399.5" y1="300.5" x2="399.5" y2="290.5" stroke="#840000" stroke-width="1.0" stroke-linecap="square"/>
<circle cx="399.5" cy="287.5" r="3.1" stroke="#840000" stroke-width="1.0" fill="none"/>
<polygon points="399.5,300.5 394.5,295.5 369.5,295.5 369.5,305.5 394.5,305.5" stroke="#840000" stroke-width="1.0" fill="none" stroke-linejoin="miter"/>
<text x="0" y="0" transform="translate(382.77 303.56) scale(0.86 1)" fill="#840000" stroke="#840000" stroke-width="0.4" font-size="8.6" text-anchor="middle" textLength="22.38" lengthAdjust="spacing">COL3</text>
<text x="0" y="0" transform="translate(408.97 285.26) scale(0.86 1)" fill="#006464" stroke="#006464" stroke-width="0.4" font-size="8.0" text-anchor="start" textLength="20.7" lengthAdjust="spacing">TP13</text>
<text x="0" y="0" transform="translate(408.97 295.16) scale(0.86 1)" fill="#006464" stroke="#006464" stroke-width="0.4" font-size="8.0" text-anchor="start" textLength="41.74" lengthAdjust="spacing">TestPoint</text>
<line x1="399.5" y1="335.5" x2="399.5" y2="325.5" stroke="#840000" stroke-width="1.0" stroke-linecap="square"/>
<circle cx="399.5" cy="322.5" r="3.1" stroke="#840000" stroke-width="1.0" fill="none"/>
<polygon points="399.5,335.5 394.5,330.5 369.5,330.5 369.5,340.5 394.5,340.5" stroke="#840000" stroke-width="1.0" fill="none" stroke-linejoin="miter"/>
<text x="0" y="0" transform="translate(382.77 338.25) scale(0.86 1)" fill="#840000" stroke="#840000" stroke-width="0.4" font-size="8.6" text-anchor="middle" textLength="22.38" lengthAdjust="spacing">COL4</text>
<text x="0" y="0" transform="translate(408.97 319.94) scale(0.86 1)" fill="#006464" stroke="#006464" stroke-width="0.4" font-size="8.0" text-anchor="start" textLength="20.7" lengthAdjust="spacing">TP14</text>
<text x="0" y="0" transform="translate(408.97 329.84) scale(0.86 1)" fill="#006464" stroke="#006464" stroke-width="0.4" font-size="8.0" text-anchor="start" textLength="41.74" lengthAdjust="spacing">TestPoint</text>
<line x1="399.5" y1="365.5" x2="399.5" y2="355.5" stroke="#840000" stroke-width="1.0" stroke-linecap="square"/>
<circle cx="399.5" cy="351.5" r="3.1" stroke="#840000" stroke-width="1.0" fill="none"/>
<polygon points="399.5,365.5 394.5,360.5 369.5,360.5 369.5,370.5 394.5,370.5" stroke="#840000" stroke-width="1.0" fill="none" stroke-linejoin="miter"/>
<text x="0" y="0" transform="translate(382.77 367.98) scale(0.86 1)" fill="#840000" stroke="#840000" stroke-width="0.4" font-size="8.6" text-anchor="middle" textLength="22.38" lengthAdjust="spacing">COL5</text>
<text x="0" y="0" transform="translate(408.97 349.68) scale(0.86 1)" fill="#006464" stroke="#006464" stroke-width="0.4" font-size="8.0" text-anchor="start" textLength="20.7" lengthAdjust="spacing">TP15</text>
<text x="0" y="0" transform="translate(408.97 359.57) scale(0.86 1)" fill="#006464" stroke="#006464" stroke-width="0.4" font-size="8.0" text-anchor="start" textLength="41.74" lengthAdjust="spacing">TestPoint</text>
<rect x="22.5" y="414.5" width="520" height="307" stroke="#0000c2" stroke-width="1.2" fill="none"/>
<text x="0" y="0" transform="translate(267.6 407.8) scale(0.86 1)" fill="#0000c2" stroke="#0000c2" font-size="8.0" text-anchor="middle" textLength="33.84" lengthAdjust="spacing" stroke-width="0.55">Touches</text>
<polygon points="62.5,528.5 57.5,523.5 32.5,523.5 32.5,533.5 57.5,533.5" stroke="#840000" stroke-width="1.0" fill="none" stroke-linejoin="miter"/>
<text x="0" y="0" transform="translate(45.47 531.49) scale(0.86 1)" fill="#840000" stroke="#840000" stroke-width="0.4" font-size="8.6" text-anchor="middle" textLength="23.25" lengthAdjust="spacing">ROW0</text>
<polyline points="62.5,528.5 508.5,528.5" stroke="#009600" stroke-width="1.0" fill="none" stroke-linejoin="miter"/>
<polygon points="62.5,573.5 57.5,568.5 32.5,568.5 32.5,578.5 57.5,578.5" stroke="#840000" stroke-width="1.0" fill="none" stroke-linejoin="miter"/>
<text x="0" y="0" transform="translate(45.47 576.08) scale(0.86 1)" fill="#840000" stroke="#840000" stroke-width="0.4" font-size="8.6" text-anchor="middle" textLength="23.25" lengthAdjust="spacing">ROW1</text>
<polyline points="62.5,573.5 508.5,573.5" stroke="#009600" stroke-width="1.0" fill="none" stroke-linejoin="miter"/>
<polygon points="62.5,617.5 57.5,612.5 32.5,612.5 32.5,622.5 57.5,622.5" stroke="#840000" stroke-width="1.0" fill="none" stroke-linejoin="miter"/>
<text x="0" y="0" transform="translate(45.47 620.68) scale(0.86 1)" fill="#840000" stroke="#840000" stroke-width="0.4" font-size="8.6" text-anchor="middle" textLength="23.25" lengthAdjust="spacing">ROW2</text>
<polyline points="62.5,617.5 508.5,617.5" stroke="#009600" stroke-width="1.0" fill="none" stroke-linejoin="miter"/>
<polygon points="62.5,662.5 57.5,657.5 32.5,657.5 32.5,667.5 57.5,667.5" stroke="#840000" stroke-width="1.0" fill="none" stroke-linejoin="miter"/>
<text x="0" y="0" transform="translate(45.47 665.27) scale(0.86 1)" fill="#840000" stroke="#840000" stroke-width="0.4" font-size="8.6" text-anchor="middle" textLength="23.25" lengthAdjust="spacing">ROW3</text>
<polyline points="62.5,662.5 508.5,662.5" stroke="#009600" stroke-width="1.0" fill="none" stroke-linejoin="miter"/>
<polygon points="62.5,707.5 57.5,702.5 32.5,702.5 32.5,712.5 57.5,712.5" stroke="#840000" stroke-width="1.0" fill="none" stroke-linejoin="miter"/>
<text x="0" y="0" transform="translate(45.47 709.87) scale(0.86 1)" fill="#840000" stroke="#840000" stroke-width="0.4" font-size="8.6" text-anchor="middle" textLength="23.25" lengthAdjust="spacing">ROW4</text>
<polyline points="62.5,707.5 508.5,707.5" stroke="#009600" stroke-width="1.0" fill="none" stroke-linejoin="miter"/>
<line x1="96.5" y1="449.5" x2="96.5" y2="439.5" stroke="#840000" stroke-width="1.0" stroke-linecap="square"/>
<polyline points="93.5,444.5 96.5,439.5 99.5,444.5" stroke="#840000" stroke-width="1.0" fill="none" stroke-linejoin="miter"/>
<text x="0" y="0" transform="translate(96.95 431.61) scale(0.86 1)" fill="#006464" stroke="#006464" stroke-width="0.4" font-size="8.0" text-anchor="middle" textLength="15.47" lengthAdjust="spacing">VCC</text>
<polyline points="96.5,449.5 96.5,454.5" stroke="#009600" stroke-width="1.0" fill="none" stroke-linejoin="miter"/>
<rect x="93.5" y="459.5" width="7" height="20" stroke="#840000" stroke-width="1.0" fill="none"/>
<line x1="96.5" y1="454.5" x2="96.5" y2="459.5" stroke="#840000" stroke-width="1.0" stroke-linecap="square"/>
<line x1="96.5" y1="479.5" x2="96.5" y2="484.5" stroke="#840000" stroke-width="1.0" stroke-linecap="square"/>
<text x="0" y="0" transform="translate(99.45 469.23) rotate(-90) scale(0.86 1)" fill="#006464" stroke="#006464" stroke-width="0.4" font-size="8.0" text-anchor="middle" textLength="9.88" lengthAdjust="spacing">R4</text>
<text x="0" y="0" transform="translate(108.15 459.43) rotate(-90) scale(0.86 1)" fill="#006464" stroke="#006464" stroke-width="0.4" font-size="8.0" text-anchor="middle" textLength="15.23" lengthAdjust="spacing">10K</text>
<polyline points="96.5,484.5 96.5,489.5" stroke="#009600" stroke-width="1.0" fill="none" stroke-linejoin="miter"/>
<polygon points="78.5,489.5 72.5,484.5 72.5,460.5 83.5,460.5 83.5,484.5" stroke="#840000" stroke-width="1.0" fill="none" stroke-linejoin="miter"/>
<text x="0" y="0" transform="translate(80.93 472.05) rotate(-90) scale(0.86 1)" fill="#840000" stroke="#840000" stroke-width="0.4" font-size="8.6" text-anchor="middle" textLength="22.38" lengthAdjust="spacing">COL0</text>
<polyline points="78.5,489.5 96.5,489.5" stroke="#009600" stroke-width="1.0" fill="none" stroke-linejoin="miter"/>
<circle cx="96.5" cy="489.5" r="1.9" fill="#009600"/>
<polyline points="96.5,489.5 96.5,677.5 96.5,677.5" stroke="#009600" stroke-width="1.0" fill="none" stroke-linejoin="miter"/>
<circle cx="108.5" cy="498.5" r="2.1" stroke="#840000" stroke-width="1.0" fill="none"/>
<circle cx="124.5" cy="498.5" r="2.1" stroke="#840000" stroke-width="1.0" fill="none"/>
<line x1="96.5" y1="498.5" x2="106.5" y2="498.5" stroke="#840000" stroke-width="1.0" stroke-linecap="square"/>
<line x1="126.5" y1="498.5" x2="136.5" y2="498.5" stroke="#840000" stroke-width="1.0" stroke-linecap="square"/>
<line x1="105.5" y1="493.5" x2="127.5" y2="493.5" stroke="#840000" stroke-width="1.0" stroke-linecap="square"/>
<line x1="116.5" y1="493.5" x2="116.5" y2="487.5" stroke="#840000" stroke-width="1.0" stroke-linecap="square"/>
<polygon points="131.5,509.5 141.5,509.5 136.5,518.5" stroke="#840000" stroke-width="1.0" fill="none" stroke-linejoin="miter"/>
<line x1="131.5" y1="518.5" x2="141.5" y2="518.5" stroke="#840000" stroke-width="1.0" stroke-linecap="square"/>
<line x1="136.5" y1="498.5" x2="136.5" y2="528.5" stroke="#840000" stroke-width="1.0" stroke-linecap="square"/>
<circle cx="96.5" cy="498.5" r="1.9" fill="#009600"/>
<circle cx="136.5" cy="528.5" r="1.9" fill="#009600"/>
<text x="0" y="0" transform="translate(110.05 471.76) scale(0.86 1)" fill="#006464" stroke="#006464" stroke-width="0.4" font-size="8.0" text-anchor="start" textLength="16.16" lengthAdjust="spacing">SW2</text>
<text x="0" y="0" transform="translate(106.25 485.26) scale(0.86 1)" fill="#006464" stroke="#006464" stroke-width="0.4" font-size="8.0" text-anchor="start" textLength="37.79" lengthAdjust="spacing">SW_Push</text>
<text x="0" y="0" transform="translate(147.58 511.02) scale(0.86 1)" fill="#006464" stroke="#006464" stroke-width="0.4" font-size="8.0" text-anchor="start" textLength="9.88" lengthAdjust="spacing">D1</text>
<text x="0" y="0" transform="translate(147.58 520.82) scale(0.86 1)" fill="#006464" stroke="#006464" stroke-width="0.4" font-size="8.0" text-anchor="start">D</text>
<circle cx="108.5" cy="543.5" r="2.1" stroke="#840000" stroke-width="1.0" fill="none"/>
<circle cx="124.5" cy="543.5" r="2.1" stroke="#840000" stroke-width="1.0" fill="none"/>
<line x1="96.5" y1="543.5" x2="106.5" y2="543.5" stroke="#840000" stroke-width="1.0" stroke-linecap="square"/>
<line x1="126.5" y1="543.5" x2="136.5" y2="543.5" stroke="#840000" stroke-width="1.0" stroke-linecap="square"/>
<line x1="105.5" y1="538.5" x2="127.5" y2="538.5" stroke="#840000" stroke-width="1.0" stroke-linecap="square"/>
<line x1="116.5" y1="538.5" x2="116.5" y2="532.5" stroke="#840000" stroke-width="1.0" stroke-linecap="square"/>
<polygon points="131.5,553.5 141.5,553.5 136.5,563.5" stroke="#840000" stroke-width="1.0" fill="none" stroke-linejoin="miter"/>
<line x1="131.5" y1="563.5" x2="141.5" y2="563.5" stroke="#840000" stroke-width="1.0" stroke-linecap="square"/>
<line x1="136.5" y1="543.5" x2="136.5" y2="573.5" stroke="#840000" stroke-width="1.0" stroke-linecap="square"/>
<circle cx="96.5" cy="543.5" r="1.9" fill="#009600"/>
<circle cx="136.5" cy="573.5" r="1.9" fill="#009600"/>
<text x="0" y="0" transform="translate(116.96 552.06) scale(0.86 1)" fill="#006464" stroke="#006464" stroke-width="0.4" font-size="8.0" text-anchor="middle" textLength="37.79" lengthAdjust="spacing">SW_Push</text>
<text x="0" y="0" transform="translate(116.96 561.86) scale(0.86 1)" fill="#006464" stroke="#006464" stroke-width="0.4" font-size="8.0" text-anchor="middle" textLength="16.16" lengthAdjust="spacing">SW7</text>
<text x="0" y="0" transform="translate(147.58 555.62) scale(0.86 1)" fill="#006464" stroke="#006464" stroke-width="0.4" font-size="8.0" text-anchor="start" textLength="9.88" lengthAdjust="spacing">D7</text>
<text x="0" y="0" transform="translate(147.58 565.42) scale(0.86 1)" fill="#006464" stroke="#006464" stroke-width="0.4" font-size="8.0" text-anchor="start">D</text>
<circle cx="108.5" cy="588.5" r="2.1" stroke="#840000" stroke-width="1.0" fill="none"/>
<circle cx="124.5" cy="588.5" r="2.1" stroke="#840000" stroke-width="1.0" fill="none"/>
<line x1="96.5" y1="588.5" x2="106.5" y2="588.5" stroke="#840000" stroke-width="1.0" stroke-linecap="square"/>
<line x1="126.5" y1="588.5" x2="136.5" y2="588.5" stroke="#840000" stroke-width="1.0" stroke-linecap="square"/>
<line x1="105.5" y1="582.5" x2="127.5" y2="582.5" stroke="#840000" stroke-width="1.0" stroke-linecap="square"/>
<line x1="116.5" y1="582.5" x2="116.5" y2="576.5" stroke="#840000" stroke-width="1.0" stroke-linecap="square"/>
<polygon points="131.5,598.5 141.5,598.5 136.5,607.5" stroke="#840000" stroke-width="1.0" fill="none" stroke-linejoin="miter"/>
<line x1="131.5" y1="607.5" x2="141.5" y2="607.5" stroke="#840000" stroke-width="1.0" stroke-linecap="square"/>
<line x1="136.5" y1="588.5" x2="136.5" y2="617.5" stroke="#840000" stroke-width="1.0" stroke-linecap="square"/>
<circle cx="96.5" cy="588.5" r="1.9" fill="#009600"/>
<circle cx="136.5" cy="617.5" r="1.9" fill="#009600"/>
<text x="0" y="0" transform="translate(116.96 596.65) scale(0.86 1)" fill="#006464" stroke="#006464" stroke-width="0.4" font-size="8.0" text-anchor="middle" textLength="37.79" lengthAdjust="spacing">SW_Push</text>
<text x="0" y="0" transform="translate(116.96 606.45) scale(0.86 1)" fill="#006464" stroke="#006464" stroke-width="0.4" font-size="8.0" text-anchor="middle" textLength="21.51" lengthAdjust="spacing">SW13</text>
<text x="0" y="0" transform="translate(147.58 600.22) scale(0.86 1)" fill="#006464" stroke="#006464" stroke-width="0.4" font-size="8.0" text-anchor="start" textLength="15.23" lengthAdjust="spacing">D13</text>
<text x="0" y="0" transform="translate(147.58 610.01) scale(0.86 1)" fill="#006464" stroke="#006464" stroke-width="0.4" font-size="8.0" text-anchor="start">D</text>
<circle cx="108.5" cy="632.5" r="2.1" stroke="#840000" stroke-width="1.0" fill="none"/>
<circle cx="124.5" cy="632.5" r="2.1" stroke="#840000" stroke-width="1.0" fill="none"/>
<line x1="96.5" y1="632.5" x2="106.5" y2="632.5" stroke="#840000" stroke-width="1.0" stroke-linecap="square"/>
<line x1="126.5" y1="632.5" x2="136.5" y2="632.5" stroke="#840000" stroke-width="1.0" stroke-linecap="square"/>
<line x1="105.5" y1="627.5" x2="127.5" y2="627.5" stroke="#840000" stroke-width="1.0" stroke-linecap="square"/>
<line x1="116.5" y1="627.5" x2="116.5" y2="621.5" stroke="#840000" stroke-width="1.0" stroke-linecap="square"/>
<polygon points="131.5,643.5 141.5,643.5 136.5,652.5" stroke="#840000" stroke-width="1.0" fill="none" stroke-linejoin="miter"/>
<line x1="131.5" y1="652.5" x2="141.5" y2="652.5" stroke="#840000" stroke-width="1.0" stroke-linecap="square"/>
<line x1="136.5" y1="632.5" x2="136.5" y2="662.5" stroke="#840000" stroke-width="1.0" stroke-linecap="square"/>
<circle cx="96.5" cy="632.5" r="1.9" fill="#009600"/>
<circle cx="136.5" cy="662.5" r="1.9" fill="#009600"/>
<text x="0" y="0" transform="translate(116.96 641.25) scale(0.86 1)" fill="#006464" stroke="#006464" stroke-width="0.4" font-size="8.0" text-anchor="middle" textLength="37.79" lengthAdjust="spacing">SW_Push</text>
<text x="0" y="0" transform="translate(116.96 651.04) scale(0.86 1)" fill="#006464" stroke="#006464" stroke-width="0.4" font-size="8.0" text-anchor="middle" textLength="21.51" lengthAdjust="spacing">SW19</text>
<text x="0" y="0" transform="translate(147.58 644.81) scale(0.86 1)" fill="#006464" stroke="#006464" stroke-width="0.4" font-size="8.0" text-anchor="start" textLength="15.23" lengthAdjust="spacing">D19</text>
<text x="0" y="0" transform="translate(147.58 654.61) scale(0.86 1)" fill="#006464" stroke="#006464" stroke-width="0.4" font-size="8.0" text-anchor="start">D</text>
<circle cx="108.5" cy="677.5" r="2.1" stroke="#840000" stroke-width="1.0" fill="none"/>
<circle cx="124.5" cy="677.5" r="2.1" stroke="#840000" stroke-width="1.0" fill="none"/>
<line x1="96.5" y1="677.5" x2="106.5" y2="677.5" stroke="#840000" stroke-width="1.0" stroke-linecap="square"/>
<line x1="126.5" y1="677.5" x2="136.5" y2="677.5" stroke="#840000" stroke-width="1.0" stroke-linecap="square"/>
<line x1="105.5" y1="672.5" x2="127.5" y2="672.5" stroke="#840000" stroke-width="1.0" stroke-linecap="square"/>
<line x1="116.5" y1="672.5" x2="116.5" y2="665.5" stroke="#840000" stroke-width="1.0" stroke-linecap="square"/>
<polygon points="131.5,687.5 141.5,687.5 136.5,696.5" stroke="#840000" stroke-width="1.0" fill="none" stroke-linejoin="miter"/>
<line x1="131.5" y1="696.5" x2="141.5" y2="696.5" stroke="#840000" stroke-width="1.0" stroke-linecap="square"/>
<line x1="136.5" y1="677.5" x2="136.5" y2="707.5" stroke="#840000" stroke-width="1.0" stroke-linecap="square"/>
<circle cx="136.5" cy="707.5" r="1.9" fill="#009600"/>
<text x="0" y="0" transform="translate(116.96 685.84) scale(0.86 1)" fill="#006464" stroke="#006464" stroke-width="0.4" font-size="8.0" text-anchor="middle" textLength="37.79" lengthAdjust="spacing">SW_Push</text>
<text x="0" y="0" transform="translate(116.96 695.64) scale(0.86 1)" fill="#006464" stroke="#006464" stroke-width="0.4" font-size="8.0" text-anchor="middle" textLength="21.51" lengthAdjust="spacing">SW25</text>
<text x="0" y="0" transform="translate(147.58 689.41) scale(0.86 1)" fill="#006464" stroke="#006464" stroke-width="0.4" font-size="8.0" text-anchor="start" textLength="15.23" lengthAdjust="spacing">D25</text>
<text x="0" y="0" transform="translate(147.58 699.21) scale(0.86 1)" fill="#006464" stroke="#006464" stroke-width="0.4" font-size="8.0" text-anchor="start">D</text>
<line x1="171.5" y1="449.5" x2="171.5" y2="439.5" stroke="#840000" stroke-width="1.0" stroke-linecap="square"/>
<polyline points="168.5,444.5 171.5,439.5 174.5,444.5" stroke="#840000" stroke-width="1.0" fill="none" stroke-linejoin="miter"/>
<text x="0" y="0" transform="translate(171.26 431.61) scale(0.86 1)" fill="#006464" stroke="#006464" stroke-width="0.4" font-size="8.0" text-anchor="middle" textLength="15.47" lengthAdjust="spacing">VCC</text>
<polyline points="171.5,449.5 171.5,454.5" stroke="#009600" stroke-width="1.0" fill="none" stroke-linejoin="miter"/>
<rect x="167.5" y="459.5" width="7" height="20" stroke="#840000" stroke-width="1.0" fill="none"/>
<line x1="171.5" y1="454.5" x2="171.5" y2="459.5" stroke="#840000" stroke-width="1.0" stroke-linecap="square"/>
<line x1="171.5" y1="479.5" x2="171.5" y2="484.5" stroke="#840000" stroke-width="1.0" stroke-linecap="square"/>
<text x="0" y="0" transform="translate(173.76 469.23) rotate(-90) scale(0.86 1)" fill="#006464" stroke="#006464" stroke-width="0.4" font-size="8.0" text-anchor="middle" textLength="9.88" lengthAdjust="spacing">R1</text>
<text x="0" y="0" transform="translate(182.46 459.43) rotate(-90) scale(0.86 1)" fill="#006464" stroke="#006464" stroke-width="0.4" font-size="8.0" text-anchor="middle" textLength="15.23" lengthAdjust="spacing">10K</text>
<polyline points="171.5,484.5 171.5,489.5" stroke="#009600" stroke-width="1.0" fill="none" stroke-linejoin="miter"/>
<polygon points="152.5,489.5 147.5,484.5 147.5,460.5 157.5,460.5 157.5,484.5" stroke="#840000" stroke-width="1.0" fill="none" stroke-linejoin="miter"/>
<text x="0" y="0" transform="translate(155.25 472.05) rotate(-90) scale(0.86 1)" fill="#840000" stroke="#840000" stroke-width="0.4" font-size="8.6" text-anchor="middle" textLength="22.38" lengthAdjust="spacing">COL1</text>
<polyline points="152.5,489.5 171.5,489.5" stroke="#009600" stroke-width="1.0" fill="none" stroke-linejoin="miter"/>
<circle cx="171.5" cy="489.5" r="1.9" fill="#009600"/>
<polyline points="171.5,489.5 171.5,677.5 171.5,677.5" stroke="#009600" stroke-width="1.0" fill="none" stroke-linejoin="miter"/>
<circle cx="182.5" cy="498.5" r="2.1" stroke="#840000" stroke-width="1.0" fill="none"/>
<circle cx="199.5" cy="498.5" r="2.1" stroke="#840000" stroke-width="1.0" fill="none"/>
<line x1="171.5" y1="498.5" x2="180.5" y2="498.5" stroke="#840000" stroke-width="1.0" stroke-linecap="square"/>
<line x1="201.5" y1="498.5" x2="210.5" y2="498.5" stroke="#840000" stroke-width="1.0" stroke-linecap="square"/>
<line x1="179.5" y1="493.5" x2="202.5" y2="493.5" stroke="#840000" stroke-width="1.0" stroke-linecap="square"/>
<line x1="191.5" y1="493.5" x2="191.5" y2="487.5" stroke="#840000" stroke-width="1.0" stroke-linecap="square"/>
<polygon points="205.5,509.5 215.5,509.5 210.5,518.5" stroke="#840000" stroke-width="1.0" fill="none" stroke-linejoin="miter"/>
<line x1="205.5" y1="518.5" x2="215.5" y2="518.5" stroke="#840000" stroke-width="1.0" stroke-linecap="square"/>
<line x1="210.5" y1="498.5" x2="210.5" y2="528.5" stroke="#840000" stroke-width="1.0" stroke-linecap="square"/>
<circle cx="171.5" cy="498.5" r="1.9" fill="#009600"/>
<circle cx="210.5" cy="528.5" r="1.9" fill="#009600"/>
<text x="0" y="0" transform="translate(183.76 471.76) scale(0.86 1)" fill="#006464" stroke="#006464" stroke-width="0.4" font-size="8.0" text-anchor="start" textLength="16.16" lengthAdjust="spacing">SW1</text>
<text x="0" y="0" transform="translate(180.96 483.16) scale(0.86 1)" fill="#006464" stroke="#006464" stroke-width="0.4" font-size="8.0" text-anchor="start" textLength="37.79" lengthAdjust="spacing">SW_Push</text>
<text x="0" y="0" transform="translate(221.9 511.02) scale(0.86 1)" fill="#006464" stroke="#006464" stroke-width="0.4" font-size="8.0" text-anchor="start" textLength="9.88" lengthAdjust="spacing">D2</text>
<text x="0" y="0" transform="translate(221.9 520.82) scale(0.86 1)" fill="#006464" stroke="#006464" stroke-width="0.4" font-size="8.0" text-anchor="start">D</text>
<circle cx="182.5" cy="543.5" r="2.1" stroke="#840000" stroke-width="1.0" fill="none"/>
<circle cx="199.5" cy="543.5" r="2.1" stroke="#840000" stroke-width="1.0" fill="none"/>
<line x1="171.5" y1="543.5" x2="180.5" y2="543.5" stroke="#840000" stroke-width="1.0" stroke-linecap="square"/>
<line x1="201.5" y1="543.5" x2="210.5" y2="543.5" stroke="#840000" stroke-width="1.0" stroke-linecap="square"/>
<line x1="179.5" y1="538.5" x2="202.5" y2="538.5" stroke="#840000" stroke-width="1.0" stroke-linecap="square"/>
<line x1="191.5" y1="538.5" x2="191.5" y2="532.5" stroke="#840000" stroke-width="1.0" stroke-linecap="square"/>
<polygon points="205.5,553.5 215.5,553.5 210.5,563.5" stroke="#840000" stroke-width="1.0" fill="none" stroke-linejoin="miter"/>
<line x1="205.5" y1="563.5" x2="215.5" y2="563.5" stroke="#840000" stroke-width="1.0" stroke-linecap="square"/>
<line x1="210.5" y1="543.5" x2="210.5" y2="573.5" stroke="#840000" stroke-width="1.0" stroke-linecap="square"/>
<circle cx="171.5" cy="543.5" r="1.9" fill="#009600"/>
<circle cx="210.5" cy="573.5" r="1.9" fill="#009600"/>
<text x="0" y="0" transform="translate(191.28 552.06) scale(0.86 1)" fill="#006464" stroke="#006464" stroke-width="0.4" font-size="8.0" text-anchor="middle" textLength="37.79" lengthAdjust="spacing">SW_Push</text>
<text x="0" y="0" transform="translate(191.28 561.86) scale(0.86 1)" fill="#006464" stroke="#006464" stroke-width="0.4" font-size="8.0" text-anchor="middle" textLength="16.16" lengthAdjust="spacing">SW8</text>
<text x="0" y="0" transform="translate(221.9 555.62) scale(0.86 1)" fill="#006464" stroke="#006464" stroke-width="0.4" font-size="8.0" text-anchor="start" textLength="9.88" lengthAdjust="spacing">D8</text>
<text x="0" y="0" transform="translate(221.9 565.42) scale(0.86 1)" fill="#006464" stroke="#006464" stroke-width="0.4" font-size="8.0" text-anchor="start">D</text>
<circle cx="182.5" cy="588.5" r="2.1" stroke="#840000" stroke-width="1.0" fill="none"/>
<circle cx="199.5" cy="588.5" r="2.1" stroke="#840000" stroke-width="1.0" fill="none"/>
<line x1="171.5" y1="588.5" x2="180.5" y2="588.5" stroke="#840000" stroke-width="1.0" stroke-linecap="square"/>
<line x1="201.5" y1="588.5" x2="210.5" y2="588.5" stroke="#840000" stroke-width="1.0" stroke-linecap="square"/>
<line x1="179.5" y1="582.5" x2="202.5" y2="582.5" stroke="#840000" stroke-width="1.0" stroke-linecap="square"/>
<line x1="191.5" y1="582.5" x2="191.5" y2="576.5" stroke="#840000" stroke-width="1.0" stroke-linecap="square"/>
<polygon points="205.5,598.5 215.5,598.5 210.5,607.5" stroke="#840000" stroke-width="1.0" fill="none" stroke-linejoin="miter"/>
<line x1="205.5" y1="607.5" x2="215.5" y2="607.5" stroke="#840000" stroke-width="1.0" stroke-linecap="square"/>
<line x1="210.5" y1="588.5" x2="210.5" y2="617.5" stroke="#840000" stroke-width="1.0" stroke-linecap="square"/>
<circle cx="171.5" cy="588.5" r="1.9" fill="#009600"/>
<circle cx="210.5" cy="617.5" r="1.9" fill="#009600"/>
<text x="0" y="0" transform="translate(191.28 596.65) scale(0.86 1)" fill="#006464" stroke="#006464" stroke-width="0.4" font-size="8.0" text-anchor="middle" textLength="37.79" lengthAdjust="spacing">SW_Push</text>
<text x="0" y="0" transform="translate(191.28 606.45) scale(0.86 1)" fill="#006464" stroke="#006464" stroke-width="0.4" font-size="8.0" text-anchor="middle" textLength="21.51" lengthAdjust="spacing">SW14</text>
<text x="0" y="0" transform="translate(221.9 600.22) scale(0.86 1)" fill="#006464" stroke="#006464" stroke-width="0.4" font-size="8.0" text-anchor="start" textLength="15.23" lengthAdjust="spacing">D14</text>
<text x="0" y="0" transform="translate(221.9 610.01) scale(0.86 1)" fill="#006464" stroke="#006464" stroke-width="0.4" font-size="8.0" text-anchor="start">D</text>
<circle cx="182.5" cy="632.5" r="2.1" stroke="#840000" stroke-width="1.0" fill="none"/>
<circle cx="199.5" cy="632.5" r="2.1" stroke="#840000" stroke-width="1.0" fill="none"/>
<line x1="171.5" y1="632.5" x2="180.5" y2="632.5" stroke="#840000" stroke-width="1.0" stroke-linecap="square"/>
<line x1="201.5" y1="632.5" x2="210.5" y2="632.5" stroke="#840000" stroke-width="1.0" stroke-linecap="square"/>
<line x1="179.5" y1="627.5" x2="202.5" y2="627.5" stroke="#840000" stroke-width="1.0" stroke-linecap="square"/>
<line x1="191.5" y1="627.5" x2="191.5" y2="621.5" stroke="#840000" stroke-width="1.0" stroke-linecap="square"/>
<polygon points="205.5,643.5 215.5,643.5 210.5,652.5" stroke="#840000" stroke-width="1.0" fill="none" stroke-linejoin="miter"/>
<line x1="205.5" y1="652.5" x2="215.5" y2="652.5" stroke="#840000" stroke-width="1.0" stroke-linecap="square"/>
<line x1="210.5" y1="632.5" x2="210.5" y2="662.5" stroke="#840000" stroke-width="1.0" stroke-linecap="square"/>
<circle cx="171.5" cy="632.5" r="1.9" fill="#009600"/>
<circle cx="210.5" cy="662.5" r="1.9" fill="#009600"/>
<text x="0" y="0" transform="translate(191.28 641.25) scale(0.86 1)" fill="#006464" stroke="#006464" stroke-width="0.4" font-size="8.0" text-anchor="middle" textLength="37.79" lengthAdjust="spacing">SW_Push</text>
<text x="0" y="0" transform="translate(191.28 651.04) scale(0.86 1)" fill="#006464" stroke="#006464" stroke-width="0.4" font-size="8.0" text-anchor="middle" textLength="21.51" lengthAdjust="spacing">SW20</text>
<text x="0" y="0" transform="translate(221.9 644.81) scale(0.86 1)" fill="#006464" stroke="#006464" stroke-width="0.4" font-size="8.0" text-anchor="start" textLength="15.23" lengthAdjust="spacing">D20</text>
<text x="0" y="0" transform="translate(221.9 654.61) scale(0.86 1)" fill="#006464" stroke="#006464" stroke-width="0.4" font-size="8.0" text-anchor="start">D</text>
<circle cx="182.5" cy="677.5" r="2.1" stroke="#840000" stroke-width="1.0" fill="none"/>
<circle cx="199.5" cy="677.5" r="2.1" stroke="#840000" stroke-width="1.0" fill="none"/>
<line x1="171.5" y1="677.5" x2="180.5" y2="677.5" stroke="#840000" stroke-width="1.0" stroke-linecap="square"/>
<line x1="201.5" y1="677.5" x2="210.5" y2="677.5" stroke="#840000" stroke-width="1.0" stroke-linecap="square"/>
<line x1="179.5" y1="672.5" x2="202.5" y2="672.5" stroke="#840000" stroke-width="1.0" stroke-linecap="square"/>
<line x1="191.5" y1="672.5" x2="191.5" y2="665.5" stroke="#840000" stroke-width="1.0" stroke-linecap="square"/>
<polygon points="205.5,687.5 215.5,687.5 210.5,696.5" stroke="#840000" stroke-width="1.0" fill="none" stroke-linejoin="miter"/>
<line x1="205.5" y1="696.5" x2="215.5" y2="696.5" stroke="#840000" stroke-width="1.0" stroke-linecap="square"/>
<line x1="210.5" y1="677.5" x2="210.5" y2="707.5" stroke="#840000" stroke-width="1.0" stroke-linecap="square"/>
<circle cx="210.5" cy="707.5" r="1.9" fill="#009600"/>
<text x="0" y="0" transform="translate(191.28 685.84) scale(0.86 1)" fill="#006464" stroke="#006464" stroke-width="0.4" font-size="8.0" text-anchor="middle" textLength="37.79" lengthAdjust="spacing">SW_Push</text>
<text x="0" y="0" transform="translate(191.28 695.64) scale(0.86 1)" fill="#006464" stroke="#006464" stroke-width="0.4" font-size="8.0" text-anchor="middle" textLength="21.51" lengthAdjust="spacing">SW26</text>
<text x="0" y="0" transform="translate(221.9 689.41) scale(0.86 1)" fill="#006464" stroke="#006464" stroke-width="0.4" font-size="8.0" text-anchor="start" textLength="15.23" lengthAdjust="spacing">D26</text>
<text x="0" y="0" transform="translate(221.9 699.21) scale(0.86 1)" fill="#006464" stroke="#006464" stroke-width="0.4" font-size="8.0" text-anchor="start">D</text>
<line x1="245.5" y1="449.5" x2="245.5" y2="439.5" stroke="#840000" stroke-width="1.0" stroke-linecap="square"/>
<polyline points="242.5,444.5 245.5,439.5 248.5,444.5" stroke="#840000" stroke-width="1.0" fill="none" stroke-linejoin="miter"/>
<text x="0" y="0" transform="translate(245.58 431.61) scale(0.86 1)" fill="#006464" stroke="#006464" stroke-width="0.4" font-size="8.0" text-anchor="middle" textLength="15.47" lengthAdjust="spacing">VCC</text>
<polyline points="245.5,449.5 245.5,454.5" stroke="#009600" stroke-width="1.0" fill="none" stroke-linejoin="miter"/>
<rect x="241.5" y="459.5" width="8" height="20" stroke="#840000" stroke-width="1.0" fill="none"/>
<line x1="245.5" y1="454.5" x2="245.5" y2="459.5" stroke="#840000" stroke-width="1.0" stroke-linecap="square"/>
<line x1="245.5" y1="479.5" x2="245.5" y2="484.5" stroke="#840000" stroke-width="1.0" stroke-linecap="square"/>
<text x="0" y="0" transform="translate(248.08 469.23) rotate(-90) scale(0.86 1)" fill="#006464" stroke="#006464" stroke-width="0.4" font-size="8.0" text-anchor="middle" textLength="9.88" lengthAdjust="spacing">R2</text>
<text x="0" y="0" transform="translate(256.78 459.43) rotate(-90) scale(0.86 1)" fill="#006464" stroke="#006464" stroke-width="0.4" font-size="8.0" text-anchor="middle" textLength="15.23" lengthAdjust="spacing">10K</text>
<polyline points="245.5,484.5 245.5,489.5" stroke="#009600" stroke-width="1.0" fill="none" stroke-linejoin="miter"/>
<polygon points="226.5,489.5 221.5,484.5 221.5,460.5 232.5,460.5 232.5,484.5" stroke="#840000" stroke-width="1.0" fill="none" stroke-linejoin="miter"/>
<text x="0" y="0" transform="translate(229.56 472.05) rotate(-90) scale(0.86 1)" fill="#840000" stroke="#840000" stroke-width="0.4" font-size="8.6" text-anchor="middle" textLength="22.38" lengthAdjust="spacing">COL2</text>
<polyline points="226.5,489.5 245.5,489.5" stroke="#009600" stroke-width="1.0" fill="none" stroke-linejoin="miter"/>
<circle cx="245.5" cy="489.5" r="1.9" fill="#009600"/>
<polyline points="245.5,489.5 245.5,677.5 245.5,677.5" stroke="#009600" stroke-width="1.0" fill="none" stroke-linejoin="miter"/>
<circle cx="257.5" cy="498.5" r="2.1" stroke="#840000" stroke-width="1.0" fill="none"/>
<circle cx="273.5" cy="498.5" r="2.1" stroke="#840000" stroke-width="1.0" fill="none"/>
<line x1="245.5" y1="498.5" x2="255.5" y2="498.5" stroke="#840000" stroke-width="1.0" stroke-linecap="square"/>
<line x1="275.5" y1="498.5" x2="285.5" y2="498.5" stroke="#840000" stroke-width="1.0" stroke-linecap="square"/>
<line x1="254.5" y1="493.5" x2="276.5" y2="493.5" stroke="#840000" stroke-width="1.0" stroke-linecap="square"/>
<line x1="265.5" y1="493.5" x2="265.5" y2="487.5" stroke="#840000" stroke-width="1.0" stroke-linecap="square"/>
<polygon points="280.5,509.5 290.5,509.5 285.5,518.5" stroke="#840000" stroke-width="1.0" fill="none" stroke-linejoin="miter"/>
<line x1="280.5" y1="518.5" x2="290.5" y2="518.5" stroke="#840000" stroke-width="1.0" stroke-linecap="square"/>
<line x1="285.5" y1="498.5" x2="285.5" y2="528.5" stroke="#840000" stroke-width="1.0" stroke-linecap="square"/>
<circle cx="245.5" cy="498.5" r="1.9" fill="#009600"/>
<circle cx="285.5" cy="528.5" r="1.9" fill="#009600"/>
<text x="0" y="0" transform="translate(257.88 471.76) scale(0.86 1)" fill="#006464" stroke="#006464" stroke-width="0.4" font-size="8.0" text-anchor="start" textLength="16.16" lengthAdjust="spacing">SW3</text>
<text x="0" y="0" transform="translate(255.78 483.16) scale(0.86 1)" fill="#006464" stroke="#006464" stroke-width="0.4" font-size="8.0" text-anchor="start" textLength="37.79" lengthAdjust="spacing">SW_Push</text>
<text x="0" y="0" transform="translate(296.22 511.02) scale(0.86 1)" fill="#006464" stroke="#006464" stroke-width="0.4" font-size="8.0" text-anchor="start" textLength="9.88" lengthAdjust="spacing">D3</text>
<text x="0" y="0" transform="translate(296.22 520.82) scale(0.86 1)" fill="#006464" stroke="#006464" stroke-width="0.4" font-size="8.0" text-anchor="start">D</text>
<circle cx="257.5" cy="543.5" r="2.1" stroke="#840000" stroke-width="1.0" fill="none"/>
<circle cx="273.5" cy="543.5" r="2.1" stroke="#840000" stroke-width="1.0" fill="none"/>
<line x1="245.5" y1="543.5" x2="255.5" y2="543.5" stroke="#840000" stroke-width="1.0" stroke-linecap="square"/>
<line x1="275.5" y1="543.5" x2="285.5" y2="543.5" stroke="#840000" stroke-width="1.0" stroke-linecap="square"/>
<line x1="254.5" y1="538.5" x2="276.5" y2="538.5" stroke="#840000" stroke-width="1.0" stroke-linecap="square"/>
<line x1="265.5" y1="538.5" x2="265.5" y2="532.5" stroke="#840000" stroke-width="1.0" stroke-linecap="square"/>
<polygon points="280.5,553.5 290.5,553.5 285.5,563.5" stroke="#840000" stroke-width="1.0" fill="none" stroke-linejoin="miter"/>
<line x1="280.5" y1="563.5" x2="290.5" y2="563.5" stroke="#840000" stroke-width="1.0" stroke-linecap="square"/>
<line x1="285.5" y1="543.5" x2="285.5" y2="573.5" stroke="#840000" stroke-width="1.0" stroke-linecap="square"/>
<circle cx="245.5" cy="543.5" r="1.9" fill="#009600"/>
<circle cx="285.5" cy="573.5" r="1.9" fill="#009600"/>
<text x="0" y="0" transform="translate(265.6 553.76) scale(0.86 1)" fill="#006464" stroke="#006464" stroke-width="0.4" font-size="8.0" text-anchor="middle" textLength="37.79" lengthAdjust="spacing">SW_Push</text>
<text x="0" y="0" transform="translate(265.6 562.96) scale(0.86 1)" fill="#006464" stroke="#006464" stroke-width="0.4" font-size="8.0" text-anchor="middle" textLength="16.16" lengthAdjust="spacing">SW9</text>
<text x="0" y="0" transform="translate(296.22 555.62) scale(0.86 1)" fill="#006464" stroke="#006464" stroke-width="0.4" font-size="8.0" text-anchor="start" textLength="9.88" lengthAdjust="spacing">D9</text>
<text x="0" y="0" transform="translate(296.22 565.42) scale(0.86 1)" fill="#006464" stroke="#006464" stroke-width="0.4" font-size="8.0" text-anchor="start">D</text>
<circle cx="257.5" cy="588.5" r="2.1" stroke="#840000" stroke-width="1.0" fill="none"/>
<circle cx="273.5" cy="588.5" r="2.1" stroke="#840000" stroke-width="1.0" fill="none"/>
<line x1="245.5" y1="588.5" x2="255.5" y2="588.5" stroke="#840000" stroke-width="1.0" stroke-linecap="square"/>
<line x1="275.5" y1="588.5" x2="285.5" y2="588.5" stroke="#840000" stroke-width="1.0" stroke-linecap="square"/>
<line x1="254.5" y1="582.5" x2="276.5" y2="582.5" stroke="#840000" stroke-width="1.0" stroke-linecap="square"/>
<line x1="265.5" y1="582.5" x2="265.5" y2="576.5" stroke="#840000" stroke-width="1.0" stroke-linecap="square"/>
<polygon points="280.5,598.5 290.5,598.5 285.5,607.5" stroke="#840000" stroke-width="1.0" fill="none" stroke-linejoin="miter"/>
<line x1="280.5" y1="607.5" x2="290.5" y2="607.5" stroke="#840000" stroke-width="1.0" stroke-linecap="square"/>
<line x1="285.5" y1="588.5" x2="285.5" y2="617.5" stroke="#840000" stroke-width="1.0" stroke-linecap="square"/>
<circle cx="245.5" cy="588.5" r="1.9" fill="#009600"/>
<circle cx="285.5" cy="617.5" r="1.9" fill="#009600"/>
<text x="0" y="0" transform="translate(265.6 598.35) scale(0.86 1)" fill="#006464" stroke="#006464" stroke-width="0.4" font-size="8.0" text-anchor="middle" textLength="37.79" lengthAdjust="spacing">SW_Push</text>
<text x="0" y="0" transform="translate(265.6 607.55) scale(0.86 1)" fill="#006464" stroke="#006464" stroke-width="0.4" font-size="8.0" text-anchor="middle" textLength="21.51" lengthAdjust="spacing">SW15</text>
<text x="0" y="0" transform="translate(296.22 600.22) scale(0.86 1)" fill="#006464" stroke="#006464" stroke-width="0.4" font-size="8.0" text-anchor="start" textLength="15.23" lengthAdjust="spacing">D15</text>
<text x="0" y="0" transform="translate(296.22 610.01) scale(0.86 1)" fill="#006464" stroke="#006464" stroke-width="0.4" font-size="8.0" text-anchor="start">D</text>
<circle cx="257.5" cy="632.5" r="2.1" stroke="#840000" stroke-width="1.0" fill="none"/>
<circle cx="273.5" cy="632.5" r="2.1" stroke="#840000" stroke-width="1.0" fill="none"/>
<line x1="245.5" y1="632.5" x2="255.5" y2="632.5" stroke="#840000" stroke-width="1.0" stroke-linecap="square"/>
<line x1="275.5" y1="632.5" x2="285.5" y2="632.5" stroke="#840000" stroke-width="1.0" stroke-linecap="square"/>
<line x1="254.5" y1="627.5" x2="276.5" y2="627.5" stroke="#840000" stroke-width="1.0" stroke-linecap="square"/>
<line x1="265.5" y1="627.5" x2="265.5" y2="621.5" stroke="#840000" stroke-width="1.0" stroke-linecap="square"/>
<polygon points="280.5,643.5 290.5,643.5 285.5,652.5" stroke="#840000" stroke-width="1.0" fill="none" stroke-linejoin="miter"/>
<line x1="280.5" y1="652.5" x2="290.5" y2="652.5" stroke="#840000" stroke-width="1.0" stroke-linecap="square"/>
<line x1="285.5" y1="632.5" x2="285.5" y2="662.5" stroke="#840000" stroke-width="1.0" stroke-linecap="square"/>
<circle cx="245.5" cy="632.5" r="1.9" fill="#009600"/>
<circle cx="285.5" cy="662.5" r="1.9" fill="#009600"/>
<text x="0" y="0" transform="translate(265.6 642.95) scale(0.86 1)" fill="#006464" stroke="#006464" stroke-width="0.4" font-size="8.0" text-anchor="middle" textLength="37.79" lengthAdjust="spacing">SW_Push</text>
<text x="0" y="0" transform="translate(265.6 652.14) scale(0.86 1)" fill="#006464" stroke="#006464" stroke-width="0.4" font-size="8.0" text-anchor="middle" textLength="21.51" lengthAdjust="spacing">SW21</text>
<text x="0" y="0" transform="translate(296.22 644.81) scale(0.86 1)" fill="#006464" stroke="#006464" stroke-width="0.4" font-size="8.0" text-anchor="start" textLength="15.23" lengthAdjust="spacing">D21</text>
<text x="0" y="0" transform="translate(296.22 654.61) scale(0.86 1)" fill="#006464" stroke="#006464" stroke-width="0.4" font-size="8.0" text-anchor="start">D</text>
<circle cx="257.5" cy="677.5" r="2.1" stroke="#840000" stroke-width="1.0" fill="none"/>
<circle cx="273.5" cy="677.5" r="2.1" stroke="#840000" stroke-width="1.0" fill="none"/>
<line x1="245.5" y1="677.5" x2="255.5" y2="677.5" stroke="#840000" stroke-width="1.0" stroke-linecap="square"/>
<line x1="275.5" y1="677.5" x2="285.5" y2="677.5" stroke="#840000" stroke-width="1.0" stroke-linecap="square"/>
<line x1="254.5" y1="672.5" x2="276.5" y2="672.5" stroke="#840000" stroke-width="1.0" stroke-linecap="square"/>
<line x1="265.5" y1="672.5" x2="265.5" y2="665.5" stroke="#840000" stroke-width="1.0" stroke-linecap="square"/>
<polygon points="280.5,687.5 290.5,687.5 285.5,696.5" stroke="#840000" stroke-width="1.0" fill="none" stroke-linejoin="miter"/>
<line x1="280.5" y1="696.5" x2="290.5" y2="696.5" stroke="#840000" stroke-width="1.0" stroke-linecap="square"/>
<line x1="285.5" y1="677.5" x2="285.5" y2="707.5" stroke="#840000" stroke-width="1.0" stroke-linecap="square"/>
<circle cx="285.5" cy="707.5" r="1.9" fill="#009600"/>
<text x="0" y="0" transform="translate(265.6 687.54) scale(0.86 1)" fill="#006464" stroke="#006464" stroke-width="0.4" font-size="8.0" text-anchor="middle" textLength="37.79" lengthAdjust="spacing">SW_Push</text>
<text x="0" y="0" transform="translate(265.6 696.74) scale(0.86 1)" fill="#006464" stroke="#006464" stroke-width="0.4" font-size="8.0" text-anchor="middle" textLength="21.51" lengthAdjust="spacing">SW27</text>
<text x="0" y="0" transform="translate(296.22 689.41) scale(0.86 1)" fill="#006464" stroke="#006464" stroke-width="0.4" font-size="8.0" text-anchor="start" textLength="15.23" lengthAdjust="spacing">D27</text>
<text x="0" y="0" transform="translate(296.22 699.21) scale(0.86 1)" fill="#006464" stroke="#006464" stroke-width="0.4" font-size="8.0" text-anchor="start">D</text>
<line x1="319.5" y1="449.5" x2="319.5" y2="439.5" stroke="#840000" stroke-width="1.0" stroke-linecap="square"/>
<polyline points="316.5,444.5 319.5,439.5 322.5,444.5" stroke="#840000" stroke-width="1.0" fill="none" stroke-linejoin="miter"/>
<text x="0" y="0" transform="translate(319.9 431.61) scale(0.86 1)" fill="#006464" stroke="#006464" stroke-width="0.4" font-size="8.0" text-anchor="middle" textLength="15.47" lengthAdjust="spacing">VCC</text>
<polyline points="319.5,449.5 319.5,454.5" stroke="#009600" stroke-width="1.0" fill="none" stroke-linejoin="miter"/>
<rect x="316.5" y="459.5" width="7" height="20" stroke="#840000" stroke-width="1.0" fill="none"/>
<line x1="319.5" y1="454.5" x2="319.5" y2="459.5" stroke="#840000" stroke-width="1.0" stroke-linecap="square"/>
<line x1="319.5" y1="479.5" x2="319.5" y2="484.5" stroke="#840000" stroke-width="1.0" stroke-linecap="square"/>
<text x="0" y="0" transform="translate(322.4 469.23) rotate(-90) scale(0.86 1)" fill="#006464" stroke="#006464" stroke-width="0.4" font-size="8.0" text-anchor="middle" textLength="9.88" lengthAdjust="spacing">R3</text>
<text x="0" y="0" transform="translate(331.1 459.43) rotate(-90) scale(0.86 1)" fill="#006464" stroke="#006464" stroke-width="0.4" font-size="8.0" text-anchor="middle" textLength="15.23" lengthAdjust="spacing">10K</text>
<polyline points="319.5,484.5 319.5,489.5" stroke="#009600" stroke-width="1.0" fill="none" stroke-linejoin="miter"/>
<polygon points="301.5,489.5 295.5,484.5 295.5,460.5 306.5,460.5 306.5,484.5" stroke="#840000" stroke-width="1.0" fill="none" stroke-linejoin="miter"/>
<text x="0" y="0" transform="translate(303.88 472.05) rotate(-90) scale(0.86 1)" fill="#840000" stroke="#840000" stroke-width="0.4" font-size="8.6" text-anchor="middle" textLength="22.38" lengthAdjust="spacing">COL3</text>
<polyline points="301.5,489.5 319.5,489.5" stroke="#009600" stroke-width="1.0" fill="none" stroke-linejoin="miter"/>
<circle cx="319.5" cy="489.5" r="1.9" fill="#009600"/>
<polyline points="319.5,489.5 319.5,677.5 319.5,677.5" stroke="#009600" stroke-width="1.0" fill="none" stroke-linejoin="miter"/>
<circle cx="331.5" cy="498.5" r="2.1" stroke="#840000" stroke-width="1.0" fill="none"/>
<circle cx="347.5" cy="498.5" r="2.1" stroke="#840000" stroke-width="1.0" fill="none"/>
<line x1="319.5" y1="498.5" x2="329.5" y2="498.5" stroke="#840000" stroke-width="1.0" stroke-linecap="square"/>
<line x1="349.5" y1="498.5" x2="359.5" y2="498.5" stroke="#840000" stroke-width="1.0" stroke-linecap="square"/>
<line x1="328.5" y1="493.5" x2="350.5" y2="493.5" stroke="#840000" stroke-width="1.0" stroke-linecap="square"/>
<line x1="339.5" y1="493.5" x2="339.5" y2="487.5" stroke="#840000" stroke-width="1.0" stroke-linecap="square"/>
<polygon points="354.5,509.5 364.5,509.5 359.5,518.5" stroke="#840000" stroke-width="1.0" fill="none" stroke-linejoin="miter"/>
<line x1="354.5" y1="518.5" x2="364.5" y2="518.5" stroke="#840000" stroke-width="1.0" stroke-linecap="square"/>
<line x1="359.5" y1="498.5" x2="359.5" y2="528.5" stroke="#840000" stroke-width="1.0" stroke-linecap="square"/>
<circle cx="319.5" cy="498.5" r="1.9" fill="#009600"/>
<circle cx="359.5" cy="528.5" r="1.9" fill="#009600"/>
<text x="0" y="0" transform="translate(332.8 471.76) scale(0.86 1)" fill="#006464" stroke="#006464" stroke-width="0.4" font-size="8.0" text-anchor="start" textLength="16.16" lengthAdjust="spacing">SW4</text>
<text x="0" y="0" transform="translate(328.6 483.16) scale(0.86 1)" fill="#006464" stroke="#006464" stroke-width="0.4" font-size="8.0" text-anchor="start" textLength="37.79" lengthAdjust="spacing">SW_Push</text>
<text x="0" y="0" transform="translate(370.54 511.02) scale(0.86 1)" fill="#006464" stroke="#006464" stroke-width="0.4" font-size="8.0" text-anchor="start" textLength="9.88" lengthAdjust="spacing">D4</text>
<text x="0" y="0" transform="translate(370.54 520.82) scale(0.86 1)" fill="#006464" stroke="#006464" stroke-width="0.4" font-size="8.0" text-anchor="start">D</text>
<circle cx="331.5" cy="543.5" r="2.1" stroke="#840000" stroke-width="1.0" fill="none"/>
<circle cx="347.5" cy="543.5" r="2.1" stroke="#840000" stroke-width="1.0" fill="none"/>
<line x1="319.5" y1="543.5" x2="329.5" y2="543.5" stroke="#840000" stroke-width="1.0" stroke-linecap="square"/>
<line x1="349.5" y1="543.5" x2="359.5" y2="543.5" stroke="#840000" stroke-width="1.0" stroke-linecap="square"/>
<line x1="328.5" y1="538.5" x2="350.5" y2="538.5" stroke="#840000" stroke-width="1.0" stroke-linecap="square"/>
<line x1="339.5" y1="538.5" x2="339.5" y2="532.5" stroke="#840000" stroke-width="1.0" stroke-linecap="square"/>
<polygon points="354.5,553.5 364.5,553.5 359.5,563.5" stroke="#840000" stroke-width="1.0" fill="none" stroke-linejoin="miter"/>
<line x1="354.5" y1="563.5" x2="364.5" y2="563.5" stroke="#840000" stroke-width="1.0" stroke-linecap="square"/>
<line x1="359.5" y1="543.5" x2="359.5" y2="573.5" stroke="#840000" stroke-width="1.0" stroke-linecap="square"/>
<circle cx="319.5" cy="543.5" r="1.9" fill="#009600"/>
<circle cx="359.5" cy="573.5" r="1.9" fill="#009600"/>
<text x="0" y="0" transform="translate(339.92 552.96) scale(0.86 1)" fill="#006464" stroke="#006464" stroke-width="0.4" font-size="8.0" text-anchor="middle" textLength="37.79" lengthAdjust="spacing">SW_Push</text>
<text x="0" y="0" transform="translate(339.92 562.96) scale(0.86 1)" fill="#006464" stroke="#006464" stroke-width="0.4" font-size="8.0" text-anchor="middle" textLength="21.51" lengthAdjust="spacing">SW10</text>
<text x="0" y="0" transform="translate(370.54 555.62) scale(0.86 1)" fill="#006464" stroke="#006464" stroke-width="0.4" font-size="8.0" text-anchor="start" textLength="15.23" lengthAdjust="spacing">D10</text>
<text x="0" y="0" transform="translate(370.54 565.42) scale(0.86 1)" fill="#006464" stroke="#006464" stroke-width="0.4" font-size="8.0" text-anchor="start">D</text>
<circle cx="331.5" cy="588.5" r="2.1" stroke="#840000" stroke-width="1.0" fill="none"/>
<circle cx="347.5" cy="588.5" r="2.1" stroke="#840000" stroke-width="1.0" fill="none"/>
<line x1="319.5" y1="588.5" x2="329.5" y2="588.5" stroke="#840000" stroke-width="1.0" stroke-linecap="square"/>
<line x1="349.5" y1="588.5" x2="359.5" y2="588.5" stroke="#840000" stroke-width="1.0" stroke-linecap="square"/>
<line x1="328.5" y1="582.5" x2="350.5" y2="582.5" stroke="#840000" stroke-width="1.0" stroke-linecap="square"/>
<line x1="339.5" y1="582.5" x2="339.5" y2="576.5" stroke="#840000" stroke-width="1.0" stroke-linecap="square"/>
<polygon points="354.5,598.5 364.5,598.5 359.5,607.5" stroke="#840000" stroke-width="1.0" fill="none" stroke-linejoin="miter"/>
<line x1="354.5" y1="607.5" x2="364.5" y2="607.5" stroke="#840000" stroke-width="1.0" stroke-linecap="square"/>
<line x1="359.5" y1="588.5" x2="359.5" y2="617.5" stroke="#840000" stroke-width="1.0" stroke-linecap="square"/>
<circle cx="319.5" cy="588.5" r="1.9" fill="#009600"/>
<circle cx="359.5" cy="617.5" r="1.9" fill="#009600"/>
<text x="0" y="0" transform="translate(339.92 597.55) scale(0.86 1)" fill="#006464" stroke="#006464" stroke-width="0.4" font-size="8.0" text-anchor="middle" textLength="37.79" lengthAdjust="spacing">SW_Push</text>
<text x="0" y="0" transform="translate(339.92 607.55) scale(0.86 1)" fill="#006464" stroke="#006464" stroke-width="0.4" font-size="8.0" text-anchor="middle" textLength="21.51" lengthAdjust="spacing">SW16</text>
<text x="0" y="0" transform="translate(370.54 600.22) scale(0.86 1)" fill="#006464" stroke="#006464" stroke-width="0.4" font-size="8.0" text-anchor="start" textLength="15.23" lengthAdjust="spacing">D16</text>
<text x="0" y="0" transform="translate(370.54 610.01) scale(0.86 1)" fill="#006464" stroke="#006464" stroke-width="0.4" font-size="8.0" text-anchor="start">D</text>
<circle cx="331.5" cy="632.5" r="2.1" stroke="#840000" stroke-width="1.0" fill="none"/>
<circle cx="347.5" cy="632.5" r="2.1" stroke="#840000" stroke-width="1.0" fill="none"/>
<line x1="319.5" y1="632.5" x2="329.5" y2="632.5" stroke="#840000" stroke-width="1.0" stroke-linecap="square"/>
<line x1="349.5" y1="632.5" x2="359.5" y2="632.5" stroke="#840000" stroke-width="1.0" stroke-linecap="square"/>
<line x1="328.5" y1="627.5" x2="350.5" y2="627.5" stroke="#840000" stroke-width="1.0" stroke-linecap="square"/>
<line x1="339.5" y1="627.5" x2="339.5" y2="621.5" stroke="#840000" stroke-width="1.0" stroke-linecap="square"/>
<polygon points="354.5,643.5 364.5,643.5 359.5,652.5" stroke="#840000" stroke-width="1.0" fill="none" stroke-linejoin="miter"/>
<line x1="354.5" y1="652.5" x2="364.5" y2="652.5" stroke="#840000" stroke-width="1.0" stroke-linecap="square"/>
<line x1="359.5" y1="632.5" x2="359.5" y2="662.5" stroke="#840000" stroke-width="1.0" stroke-linecap="square"/>
<circle cx="319.5" cy="632.5" r="1.9" fill="#009600"/>
<circle cx="359.5" cy="662.5" r="1.9" fill="#009600"/>
<text x="0" y="0" transform="translate(339.92 642.14) scale(0.86 1)" fill="#006464" stroke="#006464" stroke-width="0.4" font-size="8.0" text-anchor="middle" textLength="37.79" lengthAdjust="spacing">SW_Push</text>
<text x="0" y="0" transform="translate(339.92 652.14) scale(0.86 1)" fill="#006464" stroke="#006464" stroke-width="0.4" font-size="8.0" text-anchor="middle" textLength="21.51" lengthAdjust="spacing">SW22</text>
<text x="0" y="0" transform="translate(370.54 644.81) scale(0.86 1)" fill="#006464" stroke="#006464" stroke-width="0.4" font-size="8.0" text-anchor="start" textLength="15.23" lengthAdjust="spacing">D22</text>
<text x="0" y="0" transform="translate(370.54 654.61) scale(0.86 1)" fill="#006464" stroke="#006464" stroke-width="0.4" font-size="8.0" text-anchor="start">D</text>
<circle cx="331.5" cy="677.5" r="2.1" stroke="#840000" stroke-width="1.0" fill="none"/>
<circle cx="347.5" cy="677.5" r="2.1" stroke="#840000" stroke-width="1.0" fill="none"/>
<line x1="319.5" y1="677.5" x2="329.5" y2="677.5" stroke="#840000" stroke-width="1.0" stroke-linecap="square"/>
<line x1="349.5" y1="677.5" x2="359.5" y2="677.5" stroke="#840000" stroke-width="1.0" stroke-linecap="square"/>
<line x1="328.5" y1="672.5" x2="350.5" y2="672.5" stroke="#840000" stroke-width="1.0" stroke-linecap="square"/>
<line x1="339.5" y1="672.5" x2="339.5" y2="665.5" stroke="#840000" stroke-width="1.0" stroke-linecap="square"/>
<polygon points="354.5,687.5 364.5,687.5 359.5,696.5" stroke="#840000" stroke-width="1.0" fill="none" stroke-linejoin="miter"/>
<line x1="354.5" y1="696.5" x2="364.5" y2="696.5" stroke="#840000" stroke-width="1.0" stroke-linecap="square"/>
<line x1="359.5" y1="677.5" x2="359.5" y2="707.5" stroke="#840000" stroke-width="1.0" stroke-linecap="square"/>
<circle cx="359.5" cy="707.5" r="1.9" fill="#009600"/>
<text x="0" y="0" transform="translate(339.92 686.74) scale(0.86 1)" fill="#006464" stroke="#006464" stroke-width="0.4" font-size="8.0" text-anchor="middle" textLength="37.79" lengthAdjust="spacing">SW_Push</text>
<text x="0" y="0" transform="translate(339.92 696.74) scale(0.86 1)" fill="#006464" stroke="#006464" stroke-width="0.4" font-size="8.0" text-anchor="middle" textLength="21.51" lengthAdjust="spacing">SW28</text>
<text x="0" y="0" transform="translate(370.54 689.41) scale(0.86 1)" fill="#006464" stroke="#006464" stroke-width="0.4" font-size="8.0" text-anchor="start" textLength="15.23" lengthAdjust="spacing">D28</text>
<text x="0" y="0" transform="translate(370.54 699.21) scale(0.86 1)" fill="#006464" stroke="#006464" stroke-width="0.4" font-size="8.0" text-anchor="start">D</text>
<line x1="394.5" y1="449.5" x2="394.5" y2="439.5" stroke="#840000" stroke-width="1.0" stroke-linecap="square"/>
<polyline points="391.5,444.5 394.5,439.5 397.5,444.5" stroke="#840000" stroke-width="1.0" fill="none" stroke-linejoin="miter"/>
<text x="0" y="0" transform="translate(394.22 431.61) scale(0.86 1)" fill="#006464" stroke="#006464" stroke-width="0.4" font-size="8.0" text-anchor="middle" textLength="15.47" lengthAdjust="spacing">VCC</text>
<polyline points="394.5,449.5 394.5,454.5" stroke="#009600" stroke-width="1.0" fill="none" stroke-linejoin="miter"/>
<rect x="390.5" y="459.5" width="7" height="20" stroke="#840000" stroke-width="1.0" fill="none"/>
<line x1="394.5" y1="454.5" x2="394.5" y2="459.5" stroke="#840000" stroke-width="1.0" stroke-linecap="square"/>
<line x1="394.5" y1="479.5" x2="394.5" y2="484.5" stroke="#840000" stroke-width="1.0" stroke-linecap="square"/>
<text x="0" y="0" transform="translate(396.72 469.23) rotate(-90) scale(0.86 1)" fill="#006464" stroke="#006464" stroke-width="0.4" font-size="8.0" text-anchor="middle" textLength="9.88" lengthAdjust="spacing">R5</text>
<text x="0" y="0" transform="translate(405.42 459.43) rotate(-90) scale(0.86 1)" fill="#006464" stroke="#006464" stroke-width="0.4" font-size="8.0" text-anchor="middle" textLength="15.23" lengthAdjust="spacing">10K</text>
<polyline points="394.5,484.5 394.5,489.5" stroke="#009600" stroke-width="1.0" fill="none" stroke-linejoin="miter"/>
<polygon points="375.5,489.5 370.5,484.5 370.5,460.5 380.5,460.5 380.5,484.5" stroke="#840000" stroke-width="1.0" fill="none" stroke-linejoin="miter"/>
<text x="0" y="0" transform="translate(378.2 472.05) rotate(-90) scale(0.86 1)" fill="#840000" stroke="#840000" stroke-width="0.4" font-size="8.6" text-anchor="middle" textLength="22.38" lengthAdjust="spacing">COL4</text>
<polyline points="375.5,489.5 394.5,489.5" stroke="#009600" stroke-width="1.0" fill="none" stroke-linejoin="miter"/>
<circle cx="394.5" cy="489.5" r="1.9" fill="#009600"/>
<polyline points="394.5,489.5 394.5,677.5 394.5,677.5" stroke="#009600" stroke-width="1.0" fill="none" stroke-linejoin="miter"/>
<circle cx="405.5" cy="498.5" r="2.1" stroke="#840000" stroke-width="1.0" fill="none"/>
<circle cx="422.5" cy="498.5" r="2.1" stroke="#840000" stroke-width="1.0" fill="none"/>
<line x1="394.5" y1="498.5" x2="403.5" y2="498.5" stroke="#840000" stroke-width="1.0" stroke-linecap="square"/>
<line x1="424.5" y1="498.5" x2="433.5" y2="498.5" stroke="#840000" stroke-width="1.0" stroke-linecap="square"/>
<line x1="402.5" y1="493.5" x2="425.5" y2="493.5" stroke="#840000" stroke-width="1.0" stroke-linecap="square"/>
<line x1="414.5" y1="493.5" x2="414.5" y2="487.5" stroke="#840000" stroke-width="1.0" stroke-linecap="square"/>
<polygon points="428.5,509.5 438.5,509.5 433.5,518.5" stroke="#840000" stroke-width="1.0" fill="none" stroke-linejoin="miter"/>
<line x1="428.5" y1="518.5" x2="438.5" y2="518.5" stroke="#840000" stroke-width="1.0" stroke-linecap="square"/>
<line x1="433.5" y1="498.5" x2="433.5" y2="528.5" stroke="#840000" stroke-width="1.0" stroke-linecap="square"/>
<circle cx="394.5" cy="498.5" r="1.9" fill="#009600"/>
<circle cx="433.5" cy="528.5" r="1.9" fill="#009600"/>
<text x="0" y="0" transform="translate(406.82 471.76) scale(0.86 1)" fill="#006464" stroke="#006464" stroke-width="0.4" font-size="8.0" text-anchor="start" textLength="16.16" lengthAdjust="spacing">SW5</text>
<text x="0" y="0" transform="translate(405.12 485.26) scale(0.86 1)" fill="#006464" stroke="#006464" stroke-width="0.4" font-size="8.0" text-anchor="start" textLength="37.79" lengthAdjust="spacing">SW_Push</text>
<text x="0" y="0" transform="translate(444.85 511.02) scale(0.86 1)" fill="#006464" stroke="#006464" stroke-width="0.4" font-size="8.0" text-anchor="start" textLength="9.88" lengthAdjust="spacing">D5</text>
<text x="0" y="0" transform="translate(444.85 520.82) scale(0.86 1)" fill="#006464" stroke="#006464" stroke-width="0.4" font-size="8.0" text-anchor="start">D</text>
<circle cx="405.5" cy="543.5" r="2.1" stroke="#840000" stroke-width="1.0" fill="none"/>
<circle cx="422.5" cy="543.5" r="2.1" stroke="#840000" stroke-width="1.0" fill="none"/>
<line x1="394.5" y1="543.5" x2="403.5" y2="543.5" stroke="#840000" stroke-width="1.0" stroke-linecap="square"/>
<line x1="424.5" y1="543.5" x2="433.5" y2="543.5" stroke="#840000" stroke-width="1.0" stroke-linecap="square"/>
<line x1="402.5" y1="538.5" x2="425.5" y2="538.5" stroke="#840000" stroke-width="1.0" stroke-linecap="square"/>
<line x1="414.5" y1="538.5" x2="414.5" y2="532.5" stroke="#840000" stroke-width="1.0" stroke-linecap="square"/>
<polygon points="428.5,553.5 438.5,553.5 433.5,563.5" stroke="#840000" stroke-width="1.0" fill="none" stroke-linejoin="miter"/>
<line x1="428.5" y1="563.5" x2="438.5" y2="563.5" stroke="#840000" stroke-width="1.0" stroke-linecap="square"/>
<line x1="433.5" y1="543.5" x2="433.5" y2="573.5" stroke="#840000" stroke-width="1.0" stroke-linecap="square"/>
<circle cx="394.5" cy="543.5" r="1.9" fill="#009600"/>
<circle cx="433.5" cy="573.5" r="1.9" fill="#009600"/>
<text x="0" y="0" transform="translate(414.23 552.96) scale(0.86 1)" fill="#006464" stroke="#006464" stroke-width="0.4" font-size="8.0" text-anchor="middle" textLength="37.79" lengthAdjust="spacing">SW_Push</text>
<text x="0" y="0" transform="translate(414.23 562.96) scale(0.86 1)" fill="#006464" stroke="#006464" stroke-width="0.4" font-size="8.0" text-anchor="middle" textLength="21.51" lengthAdjust="spacing">SW11</text>
<text x="0" y="0" transform="translate(444.85 555.62) scale(0.86 1)" fill="#006464" stroke="#006464" stroke-width="0.4" font-size="8.0" text-anchor="start" textLength="15.23" lengthAdjust="spacing">D11</text>
<text x="0" y="0" transform="translate(444.85 565.42) scale(0.86 1)" fill="#006464" stroke="#006464" stroke-width="0.4" font-size="8.0" text-anchor="start">D</text>
<circle cx="405.5" cy="588.5" r="2.1" stroke="#840000" stroke-width="1.0" fill="none"/>
<circle cx="422.5" cy="588.5" r="2.1" stroke="#840000" stroke-width="1.0" fill="none"/>
<line x1="394.5" y1="588.5" x2="403.5" y2="588.5" stroke="#840000" stroke-width="1.0" stroke-linecap="square"/>
<line x1="424.5" y1="588.5" x2="433.5" y2="588.5" stroke="#840000" stroke-width="1.0" stroke-linecap="square"/>
<line x1="402.5" y1="582.5" x2="425.5" y2="582.5" stroke="#840000" stroke-width="1.0" stroke-linecap="square"/>
<line x1="414.5" y1="582.5" x2="414.5" y2="576.5" stroke="#840000" stroke-width="1.0" stroke-linecap="square"/>
<polygon points="428.5,598.5 438.5,598.5 433.5,607.5" stroke="#840000" stroke-width="1.0" fill="none" stroke-linejoin="miter"/>
<line x1="428.5" y1="607.5" x2="438.5" y2="607.5" stroke="#840000" stroke-width="1.0" stroke-linecap="square"/>
<line x1="433.5" y1="588.5" x2="433.5" y2="617.5" stroke="#840000" stroke-width="1.0" stroke-linecap="square"/>
<circle cx="394.5" cy="588.5" r="1.9" fill="#009600"/>
<circle cx="433.5" cy="617.5" r="1.9" fill="#009600"/>
<text x="0" y="0" transform="translate(414.23 597.55) scale(0.86 1)" fill="#006464" stroke="#006464" stroke-width="0.4" font-size="8.0" text-anchor="middle" textLength="37.79" lengthAdjust="spacing">SW_Push</text>
<text x="0" y="0" transform="translate(414.23 607.55) scale(0.86 1)" fill="#006464" stroke="#006464" stroke-width="0.4" font-size="8.0" text-anchor="middle" textLength="21.51" lengthAdjust="spacing">SW17</text>
<text x="0" y="0" transform="translate(444.85 600.22) scale(0.86 1)" fill="#006464" stroke="#006464" stroke-width="0.4" font-size="8.0" text-anchor="start" textLength="15.23" lengthAdjust="spacing">D17</text>
<text x="0" y="0" transform="translate(444.85 610.01) scale(0.86 1)" fill="#006464" stroke="#006464" stroke-width="0.4" font-size="8.0" text-anchor="start">D</text>
<circle cx="405.5" cy="632.5" r="2.1" stroke="#840000" stroke-width="1.0" fill="none"/>
<circle cx="422.5" cy="632.5" r="2.1" stroke="#840000" stroke-width="1.0" fill="none"/>
<line x1="394.5" y1="632.5" x2="403.5" y2="632.5" stroke="#840000" stroke-width="1.0" stroke-linecap="square"/>
<line x1="424.5" y1="632.5" x2="433.5" y2="632.5" stroke="#840000" stroke-width="1.0" stroke-linecap="square"/>
<line x1="402.5" y1="627.5" x2="425.5" y2="627.5" stroke="#840000" stroke-width="1.0" stroke-linecap="square"/>
<line x1="414.5" y1="627.5" x2="414.5" y2="621.5" stroke="#840000" stroke-width="1.0" stroke-linecap="square"/>
<polygon points="428.5,643.5 438.5,643.5 433.5,652.5" stroke="#840000" stroke-width="1.0" fill="none" stroke-linejoin="miter"/>
<line x1="428.5" y1="652.5" x2="438.5" y2="652.5" stroke="#840000" stroke-width="1.0" stroke-linecap="square"/>
<line x1="433.5" y1="632.5" x2="433.5" y2="662.5" stroke="#840000" stroke-width="1.0" stroke-linecap="square"/>
<circle cx="394.5" cy="632.5" r="1.9" fill="#009600"/>
<circle cx="433.5" cy="662.5" r="1.9" fill="#009600"/>
<text x="0" y="0" transform="translate(414.23 642.14) scale(0.86 1)" fill="#006464" stroke="#006464" stroke-width="0.4" font-size="8.0" text-anchor="middle" textLength="37.79" lengthAdjust="spacing">SW_Push</text>
<text x="0" y="0" transform="translate(414.23 652.14) scale(0.86 1)" fill="#006464" stroke="#006464" stroke-width="0.4" font-size="8.0" text-anchor="middle" textLength="21.51" lengthAdjust="spacing">SW23</text>
<text x="0" y="0" transform="translate(444.85 644.81) scale(0.86 1)" fill="#006464" stroke="#006464" stroke-width="0.4" font-size="8.0" text-anchor="start" textLength="15.23" lengthAdjust="spacing">D23</text>
<text x="0" y="0" transform="translate(444.85 654.61) scale(0.86 1)" fill="#006464" stroke="#006464" stroke-width="0.4" font-size="8.0" text-anchor="start">D</text>
<circle cx="405.5" cy="677.5" r="2.1" stroke="#840000" stroke-width="1.0" fill="none"/>
<circle cx="422.5" cy="677.5" r="2.1" stroke="#840000" stroke-width="1.0" fill="none"/>
<line x1="394.5" y1="677.5" x2="403.5" y2="677.5" stroke="#840000" stroke-width="1.0" stroke-linecap="square"/>
<line x1="424.5" y1="677.5" x2="433.5" y2="677.5" stroke="#840000" stroke-width="1.0" stroke-linecap="square"/>
<line x1="402.5" y1="672.5" x2="425.5" y2="672.5" stroke="#840000" stroke-width="1.0" stroke-linecap="square"/>
<line x1="414.5" y1="672.5" x2="414.5" y2="665.5" stroke="#840000" stroke-width="1.0" stroke-linecap="square"/>
<polygon points="428.5,687.5 438.5,687.5 433.5,696.5" stroke="#840000" stroke-width="1.0" fill="none" stroke-linejoin="miter"/>
<line x1="428.5" y1="696.5" x2="438.5" y2="696.5" stroke="#840000" stroke-width="1.0" stroke-linecap="square"/>
<line x1="433.5" y1="677.5" x2="433.5" y2="707.5" stroke="#840000" stroke-width="1.0" stroke-linecap="square"/>
<circle cx="433.5" cy="707.5" r="1.9" fill="#009600"/>
<text x="0" y="0" transform="translate(414.23 686.74) scale(0.86 1)" fill="#006464" stroke="#006464" stroke-width="0.4" font-size="8.0" text-anchor="middle" textLength="37.79" lengthAdjust="spacing">SW_Push</text>
<text x="0" y="0" transform="translate(414.23 696.74) scale(0.86 1)" fill="#006464" stroke="#006464" stroke-width="0.4" font-size="8.0" text-anchor="middle" textLength="21.51" lengthAdjust="spacing">SW29</text>
<text x="0" y="0" transform="translate(444.85 689.41) scale(0.86 1)" fill="#006464" stroke="#006464" stroke-width="0.4" font-size="8.0" text-anchor="start" textLength="15.23" lengthAdjust="spacing">D29</text>
<text x="0" y="0" transform="translate(444.85 699.21) scale(0.86 1)" fill="#006464" stroke="#006464" stroke-width="0.4" font-size="8.0" text-anchor="start">D</text>
<line x1="468.5" y1="449.5" x2="468.5" y2="439.5" stroke="#840000" stroke-width="1.0" stroke-linecap="square"/>
<polyline points="465.5,444.5 468.5,439.5 471.5,444.5" stroke="#840000" stroke-width="1.0" fill="none" stroke-linejoin="miter"/>
<text x="0" y="0" transform="translate(468.53 431.61) scale(0.86 1)" fill="#006464" stroke="#006464" stroke-width="0.4" font-size="8.0" text-anchor="middle" textLength="15.47" lengthAdjust="spacing">VCC</text>
<polyline points="468.5,449.5 468.5,454.5" stroke="#009600" stroke-width="1.0" fill="none" stroke-linejoin="miter"/>
<rect x="464.5" y="459.5" width="8" height="20" stroke="#840000" stroke-width="1.0" fill="none"/>
<line x1="468.5" y1="454.5" x2="468.5" y2="459.5" stroke="#840000" stroke-width="1.0" stroke-linecap="square"/>
<line x1="468.5" y1="479.5" x2="468.5" y2="484.5" stroke="#840000" stroke-width="1.0" stroke-linecap="square"/>
<text x="0" y="0" transform="translate(471.03 469.23) rotate(-90) scale(0.86 1)" fill="#006464" stroke="#006464" stroke-width="0.4" font-size="8.0" text-anchor="middle" textLength="9.88" lengthAdjust="spacing">R6</text>
<text x="0" y="0" transform="translate(479.73 459.43) rotate(-90) scale(0.86 1)" fill="#006464" stroke="#006464" stroke-width="0.4" font-size="8.0" text-anchor="middle" textLength="15.23" lengthAdjust="spacing">10K</text>
<polyline points="468.5,484.5 468.5,489.5" stroke="#009600" stroke-width="1.0" fill="none" stroke-linejoin="miter"/>
<polygon points="449.5,489.5 444.5,484.5 444.5,460.5 455.5,460.5 455.5,484.5" stroke="#840000" stroke-width="1.0" fill="none" stroke-linejoin="miter"/>
<text x="0" y="0" transform="translate(452.52 472.05) rotate(-90) scale(0.86 1)" fill="#840000" stroke="#840000" stroke-width="0.4" font-size="8.6" text-anchor="middle" textLength="22.38" lengthAdjust="spacing">COL5</text>
<polyline points="449.5,489.5 468.5,489.5" stroke="#009600" stroke-width="1.0" fill="none" stroke-linejoin="miter"/>
<circle cx="468.5" cy="489.5" r="1.9" fill="#009600"/>
<polyline points="468.5,489.5 468.5,677.5 468.5,677.5" stroke="#009600" stroke-width="1.0" fill="none" stroke-linejoin="miter"/>
<circle cx="480.5" cy="498.5" r="2.1" stroke="#840000" stroke-width="1.0" fill="none"/>
<circle cx="496.5" cy="498.5" r="2.1" stroke="#840000" stroke-width="1.0" fill="none"/>
<line x1="468.5" y1="498.5" x2="478.5" y2="498.5" stroke="#840000" stroke-width="1.0" stroke-linecap="square"/>
<line x1="498.5" y1="498.5" x2="508.5" y2="498.5" stroke="#840000" stroke-width="1.0" stroke-linecap="square"/>
<line x1="477.5" y1="493.5" x2="499.5" y2="493.5" stroke="#840000" stroke-width="1.0" stroke-linecap="square"/>
<line x1="488.5" y1="493.5" x2="488.5" y2="487.5" stroke="#840000" stroke-width="1.0" stroke-linecap="square"/>
<polygon points="503.5,509.5 513.5,509.5 508.5,518.5" stroke="#840000" stroke-width="1.0" fill="none" stroke-linejoin="miter"/>
<line x1="503.5" y1="518.5" x2="513.5" y2="518.5" stroke="#840000" stroke-width="1.0" stroke-linecap="square"/>
<line x1="508.5" y1="498.5" x2="508.5" y2="528.5" stroke="#840000" stroke-width="1.0" stroke-linecap="square"/>
<circle cx="468.5" cy="498.5" r="1.9" fill="#009600"/>
<text x="0" y="0" transform="translate(480.63 471.76) scale(0.86 1)" fill="#006464" stroke="#006464" stroke-width="0.4" font-size="8.0" text-anchor="start" textLength="16.16" lengthAdjust="spacing">SW6</text>
<text x="0" y="0" transform="translate(477.53 481.06) scale(0.86 1)" fill="#006464" stroke="#006464" stroke-width="0.4" font-size="8.0" text-anchor="start" textLength="37.79" lengthAdjust="spacing">SW_Push</text>
<text x="0" y="0" transform="translate(519.17 511.02) scale(0.86 1)" fill="#006464" stroke="#006464" stroke-width="0.4" font-size="8.0" text-anchor="start" textLength="9.88" lengthAdjust="spacing">D6</text>
<text x="0" y="0" transform="translate(519.17 520.82) scale(0.86 1)" fill="#006464" stroke="#006464" stroke-width="0.4" font-size="8.0" text-anchor="start">D</text>
<circle cx="480.5" cy="543.5" r="2.1" stroke="#840000" stroke-width="1.0" fill="none"/>
<circle cx="496.5" cy="543.5" r="2.1" stroke="#840000" stroke-width="1.0" fill="none"/>
<line x1="468.5" y1="543.5" x2="478.5" y2="543.5" stroke="#840000" stroke-width="1.0" stroke-linecap="square"/>
<line x1="498.5" y1="543.5" x2="508.5" y2="543.5" stroke="#840000" stroke-width="1.0" stroke-linecap="square"/>
<line x1="477.5" y1="538.5" x2="499.5" y2="538.5" stroke="#840000" stroke-width="1.0" stroke-linecap="square"/>
<line x1="488.5" y1="538.5" x2="488.5" y2="532.5" stroke="#840000" stroke-width="1.0" stroke-linecap="square"/>
<polygon points="503.5,553.5 513.5,553.5 508.5,563.5" stroke="#840000" stroke-width="1.0" fill="none" stroke-linejoin="miter"/>
<line x1="503.5" y1="563.5" x2="513.5" y2="563.5" stroke="#840000" stroke-width="1.0" stroke-linecap="square"/>
<line x1="508.5" y1="543.5" x2="508.5" y2="573.5" stroke="#840000" stroke-width="1.0" stroke-linecap="square"/>
<circle cx="468.5" cy="543.5" r="1.9" fill="#009600"/>
<text x="0" y="0" transform="translate(488.55 555.76) scale(0.86 1)" fill="#006464" stroke="#006464" stroke-width="0.4" font-size="8.0" text-anchor="middle" textLength="37.79" lengthAdjust="spacing">SW_Push</text>
<text x="0" y="0" transform="translate(488.55 564.56) scale(0.86 1)" fill="#006464" stroke="#006464" stroke-width="0.4" font-size="8.0" text-anchor="middle" textLength="21.51" lengthAdjust="spacing">SW12</text>
<text x="0" y="0" transform="translate(519.17 555.62) scale(0.86 1)" fill="#006464" stroke="#006464" stroke-width="0.4" font-size="8.0" text-anchor="start" textLength="15.23" lengthAdjust="spacing">D12</text>
<text x="0" y="0" transform="translate(519.17 565.42) scale(0.86 1)" fill="#006464" stroke="#006464" stroke-width="0.4" font-size="8.0" text-anchor="start">D</text>
<circle cx="480.5" cy="588.5" r="2.1" stroke="#840000" stroke-width="1.0" fill="none"/>
<circle cx="496.5" cy="588.5" r="2.1" stroke="#840000" stroke-width="1.0" fill="none"/>
<line x1="468.5" y1="588.5" x2="478.5" y2="588.5" stroke="#840000" stroke-width="1.0" stroke-linecap="square"/>
<line x1="498.5" y1="588.5" x2="508.5" y2="588.5" stroke="#840000" stroke-width="1.0" stroke-linecap="square"/>
<line x1="477.5" y1="582.5" x2="499.5" y2="582.5" stroke="#840000" stroke-width="1.0" stroke-linecap="square"/>
<line x1="488.5" y1="582.5" x2="488.5" y2="576.5" stroke="#840000" stroke-width="1.0" stroke-linecap="square"/>
<polygon points="503.5,598.5 513.5,598.5 508.5,607.5" stroke="#840000" stroke-width="1.0" fill="none" stroke-linejoin="miter"/>
<line x1="503.5" y1="607.5" x2="513.5" y2="607.5" stroke="#840000" stroke-width="1.0" stroke-linecap="square"/>
<line x1="508.5" y1="588.5" x2="508.5" y2="617.5" stroke="#840000" stroke-width="1.0" stroke-linecap="square"/>
<circle cx="468.5" cy="588.5" r="1.9" fill="#009600"/>
<text x="0" y="0" transform="translate(488.55 600.35) scale(0.86 1)" fill="#006464" stroke="#006464" stroke-width="0.4" font-size="8.0" text-anchor="middle" textLength="37.79" lengthAdjust="spacing">SW_Push</text>
<text x="0" y="0" transform="translate(488.55 609.15) scale(0.86 1)" fill="#006464" stroke="#006464" stroke-width="0.4" font-size="8.0" text-anchor="middle" textLength="21.51" lengthAdjust="spacing">SW18</text>
<text x="0" y="0" transform="translate(519.17 600.22) scale(0.86 1)" fill="#006464" stroke="#006464" stroke-width="0.4" font-size="8.0" text-anchor="start" textLength="15.23" lengthAdjust="spacing">D18</text>
<text x="0" y="0" transform="translate(519.17 610.01) scale(0.86 1)" fill="#006464" stroke="#006464" stroke-width="0.4" font-size="8.0" text-anchor="start">D</text>
<circle cx="480.5" cy="632.5" r="2.1" stroke="#840000" stroke-width="1.0" fill="none"/>
<circle cx="496.5" cy="632.5" r="2.1" stroke="#840000" stroke-width="1.0" fill="none"/>
<line x1="468.5" y1="632.5" x2="478.5" y2="632.5" stroke="#840000" stroke-width="1.0" stroke-linecap="square"/>
<line x1="498.5" y1="632.5" x2="508.5" y2="632.5" stroke="#840000" stroke-width="1.0" stroke-linecap="square"/>
<line x1="477.5" y1="627.5" x2="499.5" y2="627.5" stroke="#840000" stroke-width="1.0" stroke-linecap="square"/>
<line x1="488.5" y1="627.5" x2="488.5" y2="621.5" stroke="#840000" stroke-width="1.0" stroke-linecap="square"/>
<polygon points="503.5,643.5 513.5,643.5 508.5,652.5" stroke="#840000" stroke-width="1.0" fill="none" stroke-linejoin="miter"/>
<line x1="503.5" y1="652.5" x2="513.5" y2="652.5" stroke="#840000" stroke-width="1.0" stroke-linecap="square"/>
<line x1="508.5" y1="632.5" x2="508.5" y2="662.5" stroke="#840000" stroke-width="1.0" stroke-linecap="square"/>
<circle cx="468.5" cy="632.5" r="1.9" fill="#009600"/>
<text x="0" y="0" transform="translate(488.55 644.95) scale(0.86 1)" fill="#006464" stroke="#006464" stroke-width="0.4" font-size="8.0" text-anchor="middle" textLength="37.79" lengthAdjust="spacing">SW_Push</text>
<text x="0" y="0" transform="translate(488.55 653.75) scale(0.86 1)" fill="#006464" stroke="#006464" stroke-width="0.4" font-size="8.0" text-anchor="middle" textLength="21.51" lengthAdjust="spacing">SW24</text>
<text x="0" y="0" transform="translate(519.17 644.81) scale(0.86 1)" fill="#006464" stroke="#006464" stroke-width="0.4" font-size="8.0" text-anchor="start" textLength="15.23" lengthAdjust="spacing">D24</text>
<text x="0" y="0" transform="translate(519.17 654.61) scale(0.86 1)" fill="#006464" stroke="#006464" stroke-width="0.4" font-size="8.0" text-anchor="start">D</text>
<circle cx="480.5" cy="677.5" r="2.1" stroke="#840000" stroke-width="1.0" fill="none"/>
<circle cx="496.5" cy="677.5" r="2.1" stroke="#840000" stroke-width="1.0" fill="none"/>
<line x1="468.5" y1="677.5" x2="478.5" y2="677.5" stroke="#840000" stroke-width="1.0" stroke-linecap="square"/>
<line x1="498.5" y1="677.5" x2="508.5" y2="677.5" stroke="#840000" stroke-width="1.0" stroke-linecap="square"/>
<line x1="477.5" y1="672.5" x2="499.5" y2="672.5" stroke="#840000" stroke-width="1.0" stroke-linecap="square"/>
<line x1="488.5" y1="672.5" x2="488.5" y2="665.5" stroke="#840000" stroke-width="1.0" stroke-linecap="square"/>
<polygon points="503.5,687.5 513.5,687.5 508.5,696.5" stroke="#840000" stroke-width="1.0" fill="none" stroke-linejoin="miter"/>
<line x1="503.5" y1="696.5" x2="513.5" y2="696.5" stroke="#840000" stroke-width="1.0" stroke-linecap="square"/>
<line x1="508.5" y1="677.5" x2="508.5" y2="707.5" stroke="#840000" stroke-width="1.0" stroke-linecap="square"/>
<text x="0" y="0" transform="translate(488.55 689.54) scale(0.86 1)" fill="#006464" stroke="#006464" stroke-width="0.4" font-size="8.0" text-anchor="middle" textLength="37.79" lengthAdjust="spacing">SW_Push</text>
<text x="0" y="0" transform="translate(488.55 698.34) scale(0.86 1)" fill="#006464" stroke="#006464" stroke-width="0.4" font-size="8.0" text-anchor="middle" textLength="21.51" lengthAdjust="spacing">SW30</text>
<text x="0" y="0" transform="translate(519.17 689.41) scale(0.86 1)" fill="#006464" stroke="#006464" stroke-width="0.4" font-size="8.0" text-anchor="start" textLength="15.23" lengthAdjust="spacing">D30</text>
<text x="0" y="0" transform="translate(519.17 699.21) scale(0.86 1)" fill="#006464" stroke="#006464" stroke-width="0.4" font-size="8.0" text-anchor="start">D</text>
<rect x="741.5" y="48.5" width="94" height="99" stroke="#0000c2" stroke-width="1.2" fill="none"/>
<text x="0" y="0" transform="translate(785.5 43.6) scale(0.86 1)" fill="#0000c2" stroke="#0000c2" font-size="8.0" text-anchor="middle" textLength="47.33" lengthAdjust="spacing" stroke-width="0.55">Connecteur</text>
<line x1="785.5" y1="62.5" x2="803.5" y2="62.5" stroke="#840000" stroke-width="1.0" stroke-linecap="square"/>
<path d="M 806.6 59.9 A 2.6 2.6 0 0 0 806.6 65.1" stroke="#840000" stroke-width="1" fill="none"/>
<text x="0" y="0" transform="translate(793 61.92) scale(0.86 1)" fill="#a90000" stroke="#a90000" stroke-width="0.4" font-size="8.0" text-anchor="middle">1</text>
<line x1="785.5" y1="72.5" x2="803.5" y2="72.5" stroke="#840000" stroke-width="1.0" stroke-linecap="square"/>
<path d="M 806.6 69.9 A 2.6 2.6 0 0 0 806.6 75.1" stroke="#840000" stroke-width="1" fill="none"/>
<text x="0" y="0" transform="translate(793 71.83) scale(0.86 1)" fill="#a90000" stroke="#a90000" stroke-width="0.4" font-size="8.0" text-anchor="middle">2</text>
<line x1="785.5" y1="82.5" x2="803.5" y2="82.5" stroke="#840000" stroke-width="1.0" stroke-linecap="square"/>
<path d="M 806.6 79.9 A 2.6 2.6 0 0 0 806.6 85.1" stroke="#840000" stroke-width="1" fill="none"/>
<text x="0" y="0" transform="translate(793 81.74) scale(0.86 1)" fill="#a90000" stroke="#a90000" stroke-width="0.4" font-size="8.0" text-anchor="middle">3</text>
<polygon points="784.5,82.5 781.5,77.5 758.5,77.5 758.5,87.5 781.5,87.5" stroke="#840000" stroke-width="1.0" fill="none" stroke-linejoin="miter"/>
<text x="0" y="0" transform="translate(770.21 85.54) scale(0.86 1)" fill="#840000" stroke="#840000" stroke-width="0.4" font-size="8.6" text-anchor="middle" textLength="20.75" lengthAdjust="spacing">MOSI</text>
<line x1="785.5" y1="92.5" x2="803.5" y2="92.5" stroke="#840000" stroke-width="1.0" stroke-linecap="square"/>
<path d="M 806.6 89.9 A 2.6 2.6 0 0 0 806.6 95.1" stroke="#840000" stroke-width="1" fill="none"/>
<text x="0" y="0" transform="translate(793 91.65) scale(0.86 1)" fill="#a90000" stroke="#a90000" stroke-width="0.4" font-size="8.0" text-anchor="middle">4</text>
<polygon points="784.5,92.5 781.5,87.5 764.5,87.5 764.5,97.5 781.5,97.5" stroke="#840000" stroke-width="1.0" fill="none" stroke-linejoin="miter"/>
<text x="0" y="0" transform="translate(773.26 95.45) scale(0.86 1)" fill="#840000" stroke="#840000" stroke-width="0.4" font-size="8.6" text-anchor="middle" textLength="14" lengthAdjust="spacing">INT</text>
<line x1="785.5" y1="102.5" x2="803.5" y2="102.5" stroke="#840000" stroke-width="1.0" stroke-linecap="square"/>
<path d="M 806.6 99.9 A 2.6 2.6 0 0 0 806.6 105.1" stroke="#840000" stroke-width="1" fill="none"/>
<text x="0" y="0" transform="translate(793 101.56) scale(0.86 1)" fill="#a90000" stroke="#a90000" stroke-width="0.4" font-size="8.0" text-anchor="middle">5</text>
<polygon points="784.5,102.5 781.5,97.5 758.5,97.5 758.5,107.5 781.5,107.5" stroke="#840000" stroke-width="1.0" fill="none" stroke-linejoin="miter"/>
<text x="0" y="0" transform="translate(770.21 105.36) scale(0.86 1)" fill="#840000" stroke="#840000" stroke-width="0.4" font-size="8.6" text-anchor="middle" textLength="20.75" lengthAdjust="spacing">MISO</text>
<line x1="785.5" y1="112.5" x2="803.5" y2="112.5" stroke="#840000" stroke-width="1.0" stroke-linecap="square"/>
<path d="M 806.6 109.9 A 2.6 2.6 0 0 0 806.6 115.1" stroke="#840000" stroke-width="1" fill="none"/>
<text x="0" y="0" transform="translate(793 111.47) scale(0.86 1)" fill="#a90000" stroke="#a90000" stroke-width="0.4" font-size="8.0" text-anchor="middle">6</text>
<polygon points="784.5,112.5 781.5,107.5 753.5,107.5 753.5,117.5 781.5,117.5" stroke="#840000" stroke-width="1.0" fill="none" stroke-linejoin="miter"/>
<text x="0" y="0" transform="translate(767.76 115.27) scale(0.86 1)" fill="#840000" stroke="#840000" stroke-width="0.4" font-size="8.6" text-anchor="middle" textLength="28.38" lengthAdjust="spacing">RESET</text>
<line x1="785.5" y1="122.5" x2="803.5" y2="122.5" stroke="#840000" stroke-width="1.0" stroke-linecap="square"/>
<path d="M 806.6 119.9 A 2.6 2.6 0 0 0 806.6 125.1" stroke="#840000" stroke-width="1" fill="none"/>
<text x="0" y="0" transform="translate(793 121.38) scale(0.86 1)" fill="#a90000" stroke="#a90000" stroke-width="0.4" font-size="8.0" text-anchor="middle">7</text>
<polygon points="784.5,122.5 781.5,117.5 761.5,117.5 761.5,127.5 781.5,127.5" stroke="#840000" stroke-width="1.0" fill="none" stroke-linejoin="miter"/>
<text x="0" y="0" transform="translate(771.81 125.18) scale(0.86 1)" fill="#840000" stroke="#840000" stroke-width="0.4" font-size="8.6" text-anchor="middle" textLength="16.62" lengthAdjust="spacing">SCK</text>
<line x1="785.5" y1="132.5" x2="803.5" y2="132.5" stroke="#840000" stroke-width="1.0" stroke-linecap="square"/>
<path d="M 806.6 129.9 A 2.6 2.6 0 0 0 806.6 135.1" stroke="#840000" stroke-width="1" fill="none"/>
<text x="0" y="0" transform="translate(793 131.29) scale(0.86 1)" fill="#a90000" stroke="#a90000" stroke-width="0.4" font-size="8.0" text-anchor="middle">8</text>
<polygon points="784.5,132.5 781.5,127.5 766.5,127.5 766.5,137.5 781.5,137.5" stroke="#840000" stroke-width="1.0" fill="none" stroke-linejoin="miter"/>
<text x="0" y="0" transform="translate(774.21 135.09) scale(0.86 1)" fill="#840000" stroke="#840000" stroke-width="0.4" font-size="8.6" text-anchor="middle" textLength="10.75" lengthAdjust="spacing">CS</text>
<line x1="760.5" y1="72.5" x2="760.5" y2="62.5" stroke="#840000" stroke-width="1.0" stroke-linecap="square"/>
<polyline points="757.5,67.5 760.5,62.5 763.5,67.5" stroke="#840000" stroke-width="1.0" fill="none" stroke-linejoin="miter"/>
<text x="0" y="0" transform="translate(754.2 55.8) scale(0.86 1)" fill="#006464" stroke="#006464" stroke-width="0.4" font-size="8.0" text-anchor="start" textLength="15.35" lengthAdjust="spacing">+5V</text>
<polyline points="760.5,72.5 785.5,72.5" stroke="#009600" stroke-width="1.0" fill="none" stroke-linejoin="miter"/>
<polyline points="775.5,57.5 775.5,62.5 780.5,62.5 775.5,67.5 770.5,62.5 775.5,62.5" stroke="#840000" stroke-width="1.0" fill="none" stroke-linejoin="miter"/>
<text x="0" y="0" transform="translate(780 56.8) scale(0.86 1)" fill="#006464" stroke="#006464" stroke-width="0.4" font-size="8.0" text-anchor="middle" textLength="15.47" lengthAdjust="spacing">GND</text>
<polyline points="775.5,57.5 785.5,57.5 785.5,62.5" stroke="#009600" stroke-width="1.0" fill="none" stroke-linejoin="miter"/>
<text x="0" y="0" transform="translate(810.4 100.2) scale(0.86 1)" fill="#006464" stroke="#006464" stroke-width="0.4" font-size="8.0" text-anchor="start" textLength="9.88" lengthAdjust="spacing">J2</text>
<rect x="889.5" y="48.5" width="134" height="109" stroke="#0000c2" stroke-width="1.2" fill="none"/>
<text x="0" y="0" transform="translate(954.4 44.8) scale(0.86 1)" fill="#0000c2" stroke="#0000c2" font-size="8.0" text-anchor="middle" textLength="89.65" lengthAdjust="spacing" stroke-width="0.55">LED de mode clavier</text>
<polygon points="924.5,72.5 919.5,67.5 896.5,67.5 896.5,77.5 919.5,77.5" stroke="#840000" stroke-width="1.0" fill="none" stroke-linejoin="miter"/>
<text x="0" y="0" transform="translate(908.57 75.63) scale(0.86 1)" fill="#840000" stroke="#840000" stroke-width="0.4" font-size="8.6" text-anchor="middle" textLength="22.38" lengthAdjust="spacing">LED1</text>
<polyline points="924.5,72.5 934.5,72.5" stroke="#009600" stroke-width="1.0" fill="none" stroke-linejoin="miter"/>
<polygon points="944.5,67.5 944.5,77.5 954.5,72.5" stroke="#840000" stroke-width="1.0" fill="none" stroke-linejoin="miter"/>
<line x1="954.5" y1="67.5" x2="954.5" y2="78.5" stroke="#840000" stroke-width="1.0" stroke-linecap="square"/>
<line x1="934.5" y1="72.5" x2="963.5" y2="72.5" stroke="#840000" stroke-width="1.0" stroke-linecap="square"/>
<line x1="956.5" y1="69.5" x2="961.5" y2="63.5" stroke="#840000" stroke-width="1.0" stroke-linecap="square"/>
<polyline points="958.5,63.5 961.5,63.5 961.5,66.5" stroke="#840000" stroke-width="1.0" fill="none" stroke-linejoin="miter"/>
<line x1="960.5" y1="69.5" x2="966.5" y2="63.5" stroke="#840000" stroke-width="1.0" stroke-linecap="square"/>
<polyline points="963.5,63.5 966.5,63.5 966.5,66.5" stroke="#840000" stroke-width="1.0" fill="none" stroke-linejoin="miter"/>
<polyline points="963.5,72.5 968.5,72.5" stroke="#009600" stroke-width="1.0" fill="none" stroke-linejoin="miter"/>
<rect x="973.5" y="68.5" width="20" height="8" stroke="#840000" stroke-width="1.0" fill="none"/>
<line x1="968.5" y1="72.5" x2="973.5" y2="72.5" stroke="#840000" stroke-width="1.0" stroke-linecap="square"/>
<line x1="993.5" y1="72.5" x2="998.5" y2="72.5" stroke="#840000" stroke-width="1.0" stroke-linecap="square"/>
<polyline points="998.5,72.5 1008.5,72.5" stroke="#009600" stroke-width="1.0" fill="none" stroke-linejoin="miter"/>
<polyline points="1008.5,72.5 1008.5,77.5 1013.5,77.5 1008.5,82.5 1003.5,77.5 1008.5,77.5" stroke="#840000" stroke-width="1.0" fill="none" stroke-linejoin="miter"/>
<text x="0" y="0" transform="translate(1008.57 95.43) scale(0.86 1)" fill="#006464" stroke="#006464" stroke-width="0.4" font-size="8.0" text-anchor="middle" textLength="15.47" lengthAdjust="spacing">GND</text>
<text x="0" y="0" transform="translate(943 65.93) scale(0.86 1)" fill="#006464" stroke="#006464" stroke-width="0.4" font-size="8.0" text-anchor="start" textLength="15.23" lengthAdjust="spacing">D34</text>
<text x="0" y="0" transform="translate(943 86.83) scale(0.86 1)" fill="#006464" stroke="#006464" stroke-width="0.4" font-size="8.0" text-anchor="start" textLength="15.47" lengthAdjust="spacing">LED</text>
<text x="0" y="0" transform="translate(981.4 58.33) rotate(-90) scale(0.86 1)" fill="#006464" stroke="#006464" stroke-width="0.4" font-size="8.0" text-anchor="middle" textLength="15.23" lengthAdjust="spacing">R10</text>
<text x="0" y="0" transform="translate(990.8 58.33) rotate(-90) scale(0.86 1)" fill="#006464" stroke="#006464" stroke-width="0.4" font-size="8.0" text-anchor="middle" textLength="15.12" lengthAdjust="spacing">220</text>
<polygon points="924.5,102.5 919.5,97.5 896.5,97.5 896.5,107.5 919.5,107.5" stroke="#840000" stroke-width="1.0" fill="none" stroke-linejoin="miter"/>
<text x="0" y="0" transform="translate(908.57 105.36) scale(0.86 1)" fill="#840000" stroke="#840000" stroke-width="0.4" font-size="8.6" text-anchor="middle" textLength="22.38" lengthAdjust="spacing">LED2</text>
<polyline points="924.5,102.5 934.5,102.5" stroke="#009600" stroke-width="1.0" fill="none" stroke-linejoin="miter"/>
<polygon points="944.5,97.5 944.5,107.5 954.5,102.5" stroke="#840000" stroke-width="1.0" fill="none" stroke-linejoin="miter"/>
<line x1="954.5" y1="97.5" x2="954.5" y2="107.5" stroke="#840000" stroke-width="1.0" stroke-linecap="square"/>
<line x1="934.5" y1="102.5" x2="963.5" y2="102.5" stroke="#840000" stroke-width="1.0" stroke-linecap="square"/>
<line x1="956.5" y1="99.5" x2="961.5" y2="93.5" stroke="#840000" stroke-width="1.0" stroke-linecap="square"/>
<polyline points="958.5,93.5 961.5,93.5 961.5,96.5" stroke="#840000" stroke-width="1.0" fill="none" stroke-linejoin="miter"/>
<line x1="960.5" y1="99.5" x2="966.5" y2="93.5" stroke="#840000" stroke-width="1.0" stroke-linecap="square"/>
<polyline points="963.5,93.5 966.5,93.5 966.5,96.5" stroke="#840000" stroke-width="1.0" fill="none" stroke-linejoin="miter"/>
<polyline points="963.5,102.5 968.5,102.5" stroke="#009600" stroke-width="1.0" fill="none" stroke-linejoin="miter"/>
<rect x="973.5" y="98.5" width="20" height="8" stroke="#840000" stroke-width="1.0" fill="none"/>
<line x1="968.5" y1="102.5" x2="973.5" y2="102.5" stroke="#840000" stroke-width="1.0" stroke-linecap="square"/>
<line x1="993.5" y1="102.5" x2="998.5" y2="102.5" stroke="#840000" stroke-width="1.0" stroke-linecap="square"/>
<polyline points="998.5,102.5 1008.5,102.5" stroke="#009600" stroke-width="1.0" fill="none" stroke-linejoin="miter"/>
<polyline points="1008.5,102.5 1008.5,107.5 1013.5,107.5 1008.5,112.5 1003.5,107.5 1008.5,107.5" stroke="#840000" stroke-width="1.0" fill="none" stroke-linejoin="miter"/>
<text x="0" y="0" transform="translate(1008.57 125.16) scale(0.86 1)" fill="#006464" stroke="#006464" stroke-width="0.4" font-size="8.0" text-anchor="middle" textLength="15.47" lengthAdjust="spacing">GND</text>
<text x="0" y="0" transform="translate(943 115.16) scale(0.86 1)" fill="#006464" stroke="#006464" stroke-width="0.4" font-size="8.0" text-anchor="start" textLength="15.23" lengthAdjust="spacing">D33</text>
<text x="0" y="0" transform="translate(943 121.56) scale(0.86 1)" fill="#006464" stroke="#006464" stroke-width="0.4" font-size="8.0" text-anchor="start" textLength="15.47" lengthAdjust="spacing">LED</text>
<text x="0" y="0" transform="translate(981.4 88.06) rotate(-90) scale(0.86 1)" fill="#006464" stroke="#006464" stroke-width="0.4" font-size="8.0" text-anchor="middle" textLength="15.23" lengthAdjust="spacing">R11</text>
<text x="0" y="0" transform="translate(990.8 88.06) rotate(-90) scale(0.86 1)" fill="#006464" stroke="#006464" stroke-width="0.4" font-size="8.0" text-anchor="middle" textLength="15.12" lengthAdjust="spacing">220</text>
<polygon points="924.5,132.5 919.5,127.5 896.5,127.5 896.5,137.5 919.5,137.5" stroke="#840000" stroke-width="1.0" fill="none" stroke-linejoin="miter"/>
<text x="0" y="0" transform="translate(908.57 135.09) scale(0.86 1)" fill="#840000" stroke="#840000" stroke-width="0.4" font-size="8.6" text-anchor="middle" textLength="22.38" lengthAdjust="spacing">LED3</text>
<polyline points="924.5,132.5 934.5,132.5" stroke="#009600" stroke-width="1.0" fill="none" stroke-linejoin="miter"/>
<polygon points="944.5,127.5 944.5,137.5 954.5,132.5" stroke="#840000" stroke-width="1.0" fill="none" stroke-linejoin="miter"/>
<line x1="954.5" y1="127.5" x2="954.5" y2="137.5" stroke="#840000" stroke-width="1.0" stroke-linecap="square"/>
<line x1="934.5" y1="132.5" x2="963.5" y2="132.5" stroke="#840000" stroke-width="1.0" stroke-linecap="square"/>
<line x1="956.5" y1="129.5" x2="961.5" y2="123.5" stroke="#840000" stroke-width="1.0" stroke-linecap="square"/>
<polyline points="958.5,123.5 961.5,123.5 961.5,125.5" stroke="#840000" stroke-width="1.0" fill="none" stroke-linejoin="miter"/>
<line x1="960.5" y1="129.5" x2="966.5" y2="123.5" stroke="#840000" stroke-width="1.0" stroke-linecap="square"/>
<polyline points="963.5,123.5 966.5,123.5 966.5,125.5" stroke="#840000" stroke-width="1.0" fill="none" stroke-linejoin="miter"/>
<polyline points="963.5,132.5 968.5,132.5" stroke="#009600" stroke-width="1.0" fill="none" stroke-linejoin="miter"/>
<rect x="973.5" y="128.5" width="20" height="8" stroke="#840000" stroke-width="1.0" fill="none"/>
<line x1="968.5" y1="132.5" x2="973.5" y2="132.5" stroke="#840000" stroke-width="1.0" stroke-linecap="square"/>
<line x1="993.5" y1="132.5" x2="998.5" y2="132.5" stroke="#840000" stroke-width="1.0" stroke-linecap="square"/>
<polyline points="998.5,132.5 1008.5,132.5" stroke="#009600" stroke-width="1.0" fill="none" stroke-linejoin="miter"/>
<polyline points="1008.5,132.5 1008.5,137.5 1013.5,137.5 1008.5,142.5 1003.5,137.5 1008.5,137.5" stroke="#840000" stroke-width="1.0" fill="none" stroke-linejoin="miter"/>
<text x="0" y="0" transform="translate(1008.57 154.89) scale(0.86 1)" fill="#006464" stroke="#006464" stroke-width="0.4" font-size="8.0" text-anchor="middle" textLength="15.47" lengthAdjust="spacing">GND</text>
<text x="0" y="0" transform="translate(943 144.89) scale(0.86 1)" fill="#006464" stroke="#006464" stroke-width="0.4" font-size="8.0" text-anchor="start" textLength="15.23" lengthAdjust="spacing">D32</text>
<text x="0" y="0" transform="translate(943 151.29) scale(0.86 1)" fill="#006464" stroke="#006464" stroke-width="0.4" font-size="8.0" text-anchor="start" textLength="15.47" lengthAdjust="spacing">LED</text>
<text x="0" y="0" transform="translate(981.4 117.79) rotate(-90) scale(0.86 1)" fill="#006464" stroke="#006464" stroke-width="0.4" font-size="8.0" text-anchor="middle" textLength="15.23" lengthAdjust="spacing">R12</text>
<text x="0" y="0" transform="translate(990.8 117.79) rotate(-90) scale(0.86 1)" fill="#006464" stroke="#006464" stroke-width="0.4" font-size="8.0" text-anchor="middle" textLength="15.12" lengthAdjust="spacing">220</text>
<rect x="508.5" y="231.5" width="158" height="139" stroke="#0000c2" stroke-width="1.2" fill="none"/>
<text x="0" y="0" transform="translate(591.4 223.8) scale(0.86 1)" fill="#0000c2" stroke="#0000c2" font-size="8.0" text-anchor="middle" textLength="29.3" lengthAdjust="spacing" stroke-width="0.55">AVRISP</text>
<rect x="562.5" y="266.5" width="60" height="69" stroke="#840000" stroke-width="1.0" fill="#ffffc2"/>
<line x1="582.5" y1="256.5" x2="582.5" y2="266.5" stroke="#840000" stroke-width="1.0" stroke-linecap="square"/>
<line x1="582.5" y1="266" x2="582.5" y2="269.5" stroke="#840000" stroke-width="1.8"/>
<line x1="582.5" y1="256.5" x2="582.5" y2="246.5" stroke="#840000" stroke-width="1.0" stroke-linecap="square"/>
<polyline points="579.5,251.5 582.5,246.5 585.5,251.5" stroke="#840000" stroke-width="1.0" fill="none" stroke-linejoin="miter"/>
<text x="0" y="0" transform="translate(582.49 239.4) scale(0.86 1)" fill="#006464" stroke="#006464" stroke-width="0.4" font-size="8.0" text-anchor="middle" textLength="15.35" lengthAdjust="spacing">+5V</text>
<line x1="582.5" y1="335.5" x2="582.5" y2="345.5" stroke="#840000" stroke-width="1.0" stroke-linecap="square"/>
<line x1="582.5" y1="332" x2="582.5" y2="335.5" stroke="#840000" stroke-width="1.8"/>
<polyline points="582.5,345.5 582.5,350.5 587.5,350.5 582.5,355.5 577.5,350.5 582.5,350.5" stroke="#840000" stroke-width="1.0" fill="none" stroke-linejoin="miter"/>
<text x="0" y="0" transform="translate(582.49 367.8) scale(0.86 1)" fill="#006464" stroke="#006464" stroke-width="0.4" font-size="8.0" text-anchor="middle" textLength="15.47" lengthAdjust="spacing">GND</text>
<text x="0" y="0" transform="translate(582.89 261) rotate(-90) scale(0.86 1)" fill="#a90000" stroke="#a90000" stroke-width="0.4" font-size="8.0" text-anchor="middle">2</text>
<text x="0" y="0" transform="translate(582.89 340.6) rotate(-90) scale(0.86 1)" fill="#a90000" stroke="#a90000" stroke-width="0.4" font-size="8.0" text-anchor="middle">6</text>
<text x="0" y="0" transform="translate(584.99 277.5) rotate(-90) scale(0.86 1)" fill="#006464" stroke="#006464" stroke-width="0.4" font-size="8.0" text-anchor="middle" textLength="15.47" lengthAdjust="spacing">VCC</text>
<text x="0" y="0" transform="translate(584.99 322) rotate(-90) scale(0.86 1)" fill="#006464" stroke="#006464" stroke-width="0.4" font-size="8.0" text-anchor="middle" textLength="15.47" lengthAdjust="spacing">GND</text>
<line x1="619.5" y1="285.5" x2="632.5" y2="285.5" stroke="#840000" stroke-width="1.0" stroke-linecap="square"/>
<line x1="619" y1="285.5" x2="622.5" y2="285.5" stroke="#840000" stroke-width="1.8"/>
<text x="0" y="0" transform="translate(617 288.5) scale(0.86 1)" fill="#006464" stroke="#006464" stroke-width="0.4" font-size="8.0" text-anchor="end" textLength="19.3" lengthAdjust="spacing">MISO</text>
<text x="0" y="0" transform="translate(627.4 284.69) scale(0.86 1)" fill="#a90000" stroke="#a90000" stroke-width="0.4" font-size="8.0" text-anchor="middle">1</text>
<polygon points="632.5,285.5 636.5,280.5 659.5,280.5 659.5,290.5 636.5,290.5" stroke="#840000" stroke-width="1.0" fill="none" stroke-linejoin="miter"/>
<text x="0" y="0" transform="translate(648.52 288.69) scale(0.86 1)" fill="#840000" stroke="#840000" stroke-width="0.4" font-size="8.6" text-anchor="middle" textLength="20.75" lengthAdjust="spacing">MISO</text>
<line x1="619.5" y1="295.5" x2="632.5" y2="295.5" stroke="#840000" stroke-width="1.0" stroke-linecap="square"/>
<line x1="619" y1="295.5" x2="622.5" y2="295.5" stroke="#840000" stroke-width="1.8"/>
<text x="0" y="0" transform="translate(617 298.41) scale(0.86 1)" fill="#006464" stroke="#006464" stroke-width="0.4" font-size="8.0" text-anchor="end" textLength="19.3" lengthAdjust="spacing">MOSI</text>
<text x="0" y="0" transform="translate(627.4 294.61) scale(0.86 1)" fill="#a90000" stroke="#a90000" stroke-width="0.4" font-size="8.0" text-anchor="middle">4</text>
<polygon points="632.5,295.5 636.5,290.5 659.5,290.5 659.5,300.5 636.5,300.5" stroke="#840000" stroke-width="1.0" fill="none" stroke-linejoin="miter"/>
<text x="0" y="0" transform="translate(648.52 298.61) scale(0.86 1)" fill="#840000" stroke="#840000" stroke-width="0.4" font-size="8.6" text-anchor="middle" textLength="20.75" lengthAdjust="spacing">MOSI</text>
<line x1="619.5" y1="305.5" x2="632.5" y2="305.5" stroke="#840000" stroke-width="1.0" stroke-linecap="square"/>
<line x1="619" y1="305.5" x2="622.5" y2="305.5" stroke="#840000" stroke-width="1.8"/>
<text x="0" y="0" transform="translate(617 308.32) scale(0.86 1)" fill="#006464" stroke="#006464" stroke-width="0.4" font-size="8.0" text-anchor="end" textLength="15.47" lengthAdjust="spacing">SCK</text>
<text x="0" y="0" transform="translate(627.4 304.52) scale(0.86 1)" fill="#a90000" stroke="#a90000" stroke-width="0.4" font-size="8.0" text-anchor="middle">3</text>
<polygon points="632.5,305.5 636.5,300.5 656.5,300.5 656.5,310.5 636.5,310.5" stroke="#840000" stroke-width="1.0" fill="none" stroke-linejoin="miter"/>
<text x="0" y="0" transform="translate(647.17 308.52) scale(0.86 1)" fill="#840000" stroke="#840000" stroke-width="0.4" font-size="8.6" text-anchor="middle" textLength="16.62" lengthAdjust="spacing">SCK</text>
<line x1="619.5" y1="315.5" x2="632.5" y2="315.5" stroke="#840000" stroke-width="1.0" stroke-linecap="square"/>
<line x1="619" y1="315.5" x2="622.5" y2="315.5" stroke="#840000" stroke-width="1.8"/>
<text x="0" y="0" transform="translate(617 318.23) scale(0.86 1)" fill="#006464" stroke="#006464" stroke-width="0.4" font-size="8.0" text-anchor="end" textLength="15.47" lengthAdjust="spacing">RST</text>
<text x="0" y="0" transform="translate(627.4 314.43) scale(0.86 1)" fill="#a90000" stroke="#a90000" stroke-width="0.4" font-size="8.0" text-anchor="middle">5</text>
<polygon points="632.5,315.5 636.5,310.5 663.5,310.5 663.5,320.5 636.5,320.5" stroke="#840000" stroke-width="1.0" fill="none" stroke-linejoin="miter"/>
<text x="0" y="0" transform="translate(650.57 318.43) scale(0.86 1)" fill="#840000" stroke="#840000" stroke-width="0.4" font-size="8.6" text-anchor="middle" textLength="28.38" lengthAdjust="spacing">RESET</text>
<line x1="603.5" y1="312.5" x2="616.5" y2="312.5" stroke="#006464" stroke-width="0.9" stroke-linecap="square"/>
<text x="0" y="0" transform="translate(557.2 299) scale(0.86 1)" fill="#006464" stroke="#006464" stroke-width="0.4" font-size="8.0" text-anchor="end" textLength="9.88" lengthAdjust="spacing">J1</text>
<text x="0" y="0" transform="translate(557.2 308.2) scale(0.86 1)" fill="#006464" stroke="#006464" stroke-width="0.4" font-size="8.0" text-anchor="end" textLength="48.26" lengthAdjust="spacing">AVR-ISP-6</text>
<rect x="547.5" y="414.5" width="124" height="114" stroke="#0000c2" stroke-width="1.2" fill="none"/>
<text x="0" y="0" transform="translate(608.5 407.9) scale(0.86 1)" fill="#0000c2" stroke="#0000c2" font-size="8.0" text-anchor="middle" textLength="48.14" lengthAdjust="spacing" stroke-width="0.55">Découplage</text>
<line x1="569.3" y1="471.19" x2="585.7" y2="471.19" stroke="#840000" stroke-width="2" stroke-linecap="round"/>
<line x1="569.3" y1="477.19" x2="585.7" y2="477.19" stroke="#840000" stroke-width="2" stroke-linecap="round"/>
<line x1="577.5" y1="459.5" x2="577.5" y2="470.5" stroke="#840000" stroke-width="1.0" stroke-linecap="square"/>
<line x1="577.5" y1="478.5" x2="577.5" y2="489.5" stroke="#840000" stroke-width="1.0" stroke-linecap="square"/>
<polyline points="577.5,454.5 577.5,459.5" stroke="#009600" stroke-width="1.0" fill="none" stroke-linejoin="miter"/>
<line x1="599.3" y1="471.19" x2="615.7" y2="471.19" stroke="#840000" stroke-width="2" stroke-linecap="round"/>
<line x1="599.3" y1="477.19" x2="615.7" y2="477.19" stroke="#840000" stroke-width="2" stroke-linecap="round"/>
<line x1="607.5" y1="459.5" x2="607.5" y2="470.5" stroke="#840000" stroke-width="1.0" stroke-linecap="square"/>
<line x1="607.5" y1="478.5" x2="607.5" y2="489.5" stroke="#840000" stroke-width="1.0" stroke-linecap="square"/>
<polyline points="607.5,454.5 607.5,459.5" stroke="#009600" stroke-width="1.0" fill="none" stroke-linejoin="miter"/>
<line x1="633.3" y1="471.19" x2="649.7" y2="471.19" stroke="#840000" stroke-width="2" stroke-linecap="round"/>
<line x1="633.3" y1="477.19" x2="649.7" y2="477.19" stroke="#840000" stroke-width="2" stroke-linecap="round"/>
<line x1="641.5" y1="459.5" x2="641.5" y2="470.5" stroke="#840000" stroke-width="1.0" stroke-linecap="square"/>
<line x1="641.5" y1="478.5" x2="641.5" y2="489.5" stroke="#840000" stroke-width="1.0" stroke-linecap="square"/>
<polyline points="641.5,454.5 641.5,459.5" stroke="#009600" stroke-width="1.0" fill="none" stroke-linejoin="miter"/>
<polyline points="577.5,459.5 577.5,454.5 641.5,454.5 641.5,459.5" stroke="#009600" stroke-width="1.0" fill="none" stroke-linejoin="miter"/>
<polyline points="577.5,489.5 641.5,489.5" stroke="#009600" stroke-width="1.0" fill="none" stroke-linejoin="miter"/>
<line x1="607.5" y1="444.5" x2="607.5" y2="434.5" stroke="#840000" stroke-width="1.0" stroke-linecap="square"/>
<polyline points="604.5,439.5 607.5,434.5 610.5,439.5" stroke="#840000" stroke-width="1.0" fill="none" stroke-linejoin="miter"/>
<polyline points="607.5,444.5 607.5,454.5" stroke="#009600" stroke-width="1.0" fill="none" stroke-linejoin="miter"/>
<text x="0" y="0" transform="translate(607.26 427.2) scale(0.86 1)" fill="#006464" stroke="#006464" stroke-width="0.4" font-size="8.0" text-anchor="middle" textLength="15.35" lengthAdjust="spacing">+5V</text>
<circle cx="607.5" cy="454.5" r="1.9" fill="#009600"/>
<circle cx="607.5" cy="489.5" r="1.9" fill="#009600"/>
<polyline points="607.5,489.5 607.5,503.5" stroke="#009600" stroke-width="1.0" fill="none" stroke-linejoin="miter"/>
<polyline points="607.5,503.5 607.5,508.5 612.5,508.5 607.5,513.5 602.5,508.5 607.5,508.5" stroke="#840000" stroke-width="1.0" fill="none" stroke-linejoin="miter"/>
<text x="0" y="0" transform="translate(607.26 525.8) scale(0.86 1)" fill="#006464" stroke="#006464" stroke-width="0.4" font-size="8.0" text-anchor="middle" textLength="15.47" lengthAdjust="spacing">GND</text>
<text x="0" y="0" transform="translate(563.8 468.8) scale(0.86 1)" fill="#006464" stroke="#006464" stroke-width="0.4" font-size="8.0" text-anchor="start" textLength="15.23" lengthAdjust="spacing">C21</text>
<text x="0" y="0" transform="translate(559.6 485) scale(0.86 1)" fill="#006464" stroke="#006464" stroke-width="0.4" font-size="8.0" text-anchor="start" textLength="20.58" lengthAdjust="spacing">10uF</text>
<text x="0" y="0" transform="translate(613.6 468.8) scale(0.86 1)" fill="#006464" stroke="#006464" stroke-width="0.4" font-size="8.0" text-anchor="start" textLength="15.23" lengthAdjust="spacing">C20</text>
<text x="0" y="0" transform="translate(612.6 485) scale(0.86 1)" fill="#006464" stroke="#006464" stroke-width="0.4" font-size="8.0" text-anchor="start" textLength="25.93" lengthAdjust="spacing">100nF</text>
<text x="0" y="0" transform="translate(642.8 468.8) scale(0.86 1)" fill="#006464" stroke="#006464" stroke-width="0.4" font-size="8.0" text-anchor="start" textLength="9.88" lengthAdjust="spacing">C9</text>
<text x="0" y="0" transform="translate(635.6 451.8) scale(0.86 1)" fill="#006464" stroke="#006464" stroke-width="0.4" font-size="8.0" text-anchor="start" textLength="25.93" lengthAdjust="spacing">100nF</text>
<rect x="557.5" y="602.5" width="89" height="75" stroke="#0000c2" stroke-width="1.2" fill="none"/>
<text x="0" y="0" transform="translate(597.9 596.8) scale(0.86 1)" fill="#0000c2" stroke="#0000c2" font-size="8.0" text-anchor="middle" textLength="49.42" lengthAdjust="spacing" stroke-width="0.55">Led de test</text>
<line x1="567.5" y1="632.5" x2="567.5" y2="622.5" stroke="#840000" stroke-width="1.0" stroke-linecap="square"/>
<polyline points="564.5,627.5 567.5,622.5 570.5,627.5" stroke="#840000" stroke-width="1.0" fill="none" stroke-linejoin="miter"/>
<text x="0" y="0" transform="translate(561 615.6) scale(0.86 1)" fill="#006464" stroke="#006464" stroke-width="0.4" font-size="8.0" text-anchor="start" textLength="15.35" lengthAdjust="spacing">+5V</text>
<polyline points="567.5,632.5 567.5,647.5" stroke="#009600" stroke-width="1.0" fill="none" stroke-linejoin="miter"/>
<rect x="572.5" y="643.5" width="20" height="8" stroke="#840000" stroke-width="1.0" fill="none"/>
<line x1="567.5" y1="647.5" x2="572.5" y2="647.5" stroke="#840000" stroke-width="1.0" stroke-linecap="square"/>
<line x1="592.5" y1="647.5" x2="597.5" y2="647.5" stroke="#840000" stroke-width="1.0" stroke-linecap="square"/>
<text x="0" y="0" transform="translate(582.49 650.21) scale(0.86 1)" fill="#006464" stroke="#006464" stroke-width="0.4" font-size="8.0" text-anchor="middle" textLength="9.88" lengthAdjust="spacing">R9</text>
<text x="0" y="0" transform="translate(582 638.8) scale(0.86 1)" fill="#006464" stroke="#006464" stroke-width="0.4" font-size="8.0" text-anchor="middle" textLength="15.23" lengthAdjust="spacing">10K</text>
<polygon points="607.5,642.5 607.5,652.5 617.5,647.5" stroke="#840000" stroke-width="1.0" fill="none" stroke-linejoin="miter"/>
<line x1="617.5" y1="642.5" x2="617.5" y2="652.5" stroke="#840000" stroke-width="1.0" stroke-linecap="square"/>
<line x1="597.5" y1="647.5" x2="627.5" y2="647.5" stroke="#840000" stroke-width="1.0" stroke-linecap="square"/>
<line x1="619.5" y1="644.5" x2="624.5" y2="638.5" stroke="#840000" stroke-width="1.0" stroke-linecap="square"/>
<polyline points="621.5,638.5 624.5,638.5 624.5,641.5" stroke="#840000" stroke-width="1.0" fill="none" stroke-linejoin="miter"/>
<line x1="623.5" y1="644.5" x2="629.5" y2="638.5" stroke="#840000" stroke-width="1.0" stroke-linecap="square"/>
<polyline points="626.5,638.5 629.5,638.5 629.5,641.5" stroke="#840000" stroke-width="1.0" fill="none" stroke-linejoin="miter"/>
<polyline points="627.5,647.5 632.5,647.5 632.5,652.5" stroke="#009600" stroke-width="1.0" fill="none" stroke-linejoin="miter"/>
<polyline points="632.5,652.5 632.5,657.5 637.5,657.5 632.5,662.5 627.5,657.5 632.5,657.5" stroke="#840000" stroke-width="1.0" fill="none" stroke-linejoin="miter"/>
<text x="0" y="0" transform="translate(632 674.4) scale(0.86 1)" fill="#006464" stroke="#006464" stroke-width="0.4" font-size="8.0" text-anchor="middle" textLength="15.47" lengthAdjust="spacing">GND</text>
<text x="0" y="0" transform="translate(611.6 620.6) scale(0.86 1)" fill="#006464" stroke="#006464" stroke-width="0.4" font-size="8.0" text-anchor="start" textLength="15.23" lengthAdjust="spacing">D31</text>
<text x="0" y="0" transform="translate(611.6 631) scale(0.86 1)" fill="#006464" stroke="#006464" stroke-width="0.4" font-size="8.0" text-anchor="start" textLength="15.47" lengthAdjust="spacing">LED</text>
<rect x="681.5" y="171.5" width="352" height="407" stroke="#0000c2" stroke-width="1.2" fill="none"/>
<text x="0" y="0" transform="translate(866.6 171) scale(0.86 1)" fill="#0000c2" stroke="#0000c2" font-size="7.4" text-anchor="middle" textLength="10.47" lengthAdjust="spacing" stroke-width="0.55">μC</text>
<rect x="750.5" y="251.5" width="100" height="277" stroke="#840000" stroke-width="1.0" fill="#ffffc2"/>
<line x1="800.5" y1="241.5" x2="800.5" y2="251.5" stroke="#840000" stroke-width="1.0" stroke-linecap="square"/>
<text x="0" y="0" transform="translate(803.09 254.21) rotate(-90) scale(0.86 1)" fill="#006464" stroke="#006464" stroke-width="0.4" font-size="8.0" text-anchor="end" textLength="15.47" lengthAdjust="spacing">VCC</text>
<line x1="810.5" y1="241.5" x2="810.5" y2="251.5" stroke="#840000" stroke-width="1.0" stroke-linecap="square"/>
<text x="0" y="0" transform="translate(812.99 254.21) rotate(-90) scale(0.86 1)" fill="#006464" stroke="#006464" stroke-width="0.4" font-size="8.0" text-anchor="end" textLength="20.93" lengthAdjust="spacing">AVCC</text>
<text x="0" y="0" transform="translate(798.89 249.71) rotate(-90) scale(0.86 1)" fill="#a90000" stroke="#a90000" stroke-width="0.4" font-size="8.0" text-anchor="start">4</text>
<text x="0" y="0" transform="translate(808.79 249.71) rotate(-90) scale(0.86 1)" fill="#a90000" stroke="#a90000" stroke-width="0.4" font-size="8.0" text-anchor="start" textLength="9.77" lengthAdjust="spacing">18</text>
<polyline points="800.5,241.5 800.5,236.5 810.5,236.5 810.5,241.5" stroke="#009600" stroke-width="1.0" fill="none" stroke-linejoin="miter"/>
<polyline points="810.5,231.5 810.5,236.5" stroke="#009600" stroke-width="1.0" fill="none" stroke-linejoin="miter"/>
<circle cx="810.5" cy="236.5" r="1.9" fill="#009600"/>
<line x1="810.5" y1="231.5" x2="810.5" y2="221.5" stroke="#840000" stroke-width="1.0" stroke-linecap="square"/>
<polyline points="807.5,226.5 810.5,221.5 813.5,226.5" stroke="#840000" stroke-width="1.0" fill="none" stroke-linejoin="miter"/>
<text x="0" y="0" transform="translate(809.39 215.2) scale(0.86 1)" fill="#006464" stroke="#006464" stroke-width="0.4" font-size="8.0" text-anchor="middle" textLength="15.35" lengthAdjust="spacing">+5V</text>
<line x1="800.5" y1="528.5" x2="800.5" y2="538.5" stroke="#840000" stroke-width="1.0" stroke-linecap="square"/>
<polyline points="800.5,538.5 800.5,543.5" stroke="#009600" stroke-width="1.0" fill="none" stroke-linejoin="miter"/>
<polyline points="800.5,543.5 800.5,548.5 805.5,548.5 800.5,553.5 795.5,548.5 800.5,548.5" stroke="#840000" stroke-width="1.0" fill="none" stroke-linejoin="miter"/>
<text x="0" y="0" transform="translate(800.49 565) scale(0.86 1)" fill="#006464" stroke="#006464" stroke-width="0.4" font-size="8.0" text-anchor="middle" textLength="15.47" lengthAdjust="spacing">GND</text>
<text x="0" y="0" transform="translate(803.09 525.4) rotate(-90) scale(0.86 1)" fill="#006464" stroke="#006464" stroke-width="0.4" font-size="8.0" text-anchor="start" textLength="15.47" lengthAdjust="spacing">GND</text>
<text x="0" y="0" transform="translate(800.69 533.7) rotate(-90) scale(0.86 1)" fill="#a90000" stroke="#a90000" stroke-width="0.4" font-size="8.0" text-anchor="middle">3</text>
<text x="0" y="0" transform="translate(809.4 541.4) scale(0.86 1)" fill="#006464" stroke="#006464" stroke-width="0.4" font-size="8.0" text-anchor="start" textLength="9.88" lengthAdjust="spacing">U1</text>
<text x="0" y="0" transform="translate(809.4 551.6) scale(0.86 1)" fill="#006464" stroke="#006464" stroke-width="0.4" font-size="8.0" text-anchor="start" textLength="60.58" lengthAdjust="spacing">ATmega328-A</text>
<line x1="741.5" y1="271.5" x2="750.5" y2="271.5" stroke="#840000" stroke-width="1.0" stroke-linecap="square"/>
<text x="0" y="0" transform="translate(754.1 273.63) scale(0.86 1)" fill="#006464" stroke="#006464" stroke-width="0.4" font-size="8.0" text-anchor="start" textLength="20.93" lengthAdjust="spacing">AREF</text>
<text x="0" y="0" transform="translate(749.9 269.83) scale(0.86 1)" fill="#a90000" stroke="#a90000" stroke-width="0.4" font-size="8.0" text-anchor="end" textLength="9.77" lengthAdjust="spacing">20</text>
<line x1="741.5" y1="290.5" x2="750.5" y2="290.5" stroke="#840000" stroke-width="1.0" stroke-linecap="square"/>
<text x="0" y="0" transform="translate(754.1 293.45) scale(0.86 1)" fill="#006464" stroke="#006464" stroke-width="0.4" font-size="8.0" text-anchor="start" textLength="20.81" lengthAdjust="spacing">ADC6</text>
<text x="0" y="0" transform="translate(749.9 289.65) scale(0.86 1)" fill="#a90000" stroke="#a90000" stroke-width="0.4" font-size="8.0" text-anchor="end" textLength="9.77" lengthAdjust="spacing">19</text>
<line x1="741.5" y1="300.5" x2="750.5" y2="300.5" stroke="#840000" stroke-width="1.0" stroke-linecap="square"/>
<text x="0" y="0" transform="translate(754.1 303.36) scale(0.86 1)" fill="#006464" stroke="#006464" stroke-width="0.4" font-size="8.0" text-anchor="start" textLength="20.81" lengthAdjust="spacing">ADC7</text>
<text x="0" y="0" transform="translate(749.9 299.56) scale(0.86 1)" fill="#a90000" stroke="#a90000" stroke-width="0.4" font-size="8.0" text-anchor="end" textLength="9.77" lengthAdjust="spacing">22</text>
<polyline points="696.5,271.5 741.5,271.5" stroke="#009600" stroke-width="1.0" fill="none" stroke-linejoin="miter"/>
<circle cx="696.5" cy="271.5" r="1.9" fill="#009600"/>
<line x1="696.5" y1="271.5" x2="696.5" y2="261.5" stroke="#840000" stroke-width="1.0" stroke-linecap="square"/>
<circle cx="696.5" cy="257.5" r="3.1" stroke="#840000" stroke-width="1.0" fill="none"/>
<line x1="687.9" y1="282.89" x2="705.1" y2="282.89" stroke="#840000" stroke-width="2" stroke-linecap="round"/>
<line x1="687.9" y1="288.89" x2="705.1" y2="288.89" stroke="#840000" stroke-width="2" stroke-linecap="round"/>
<line x1="696.5" y1="271.5" x2="696.5" y2="281.5" stroke="#840000" stroke-width="1.0" stroke-linecap="square"/>
<line x1="696.5" y1="289.5" x2="696.5" y2="300.5" stroke="#840000" stroke-width="1.0" stroke-linecap="square"/>
<polyline points="696.5,300.5 696.5,305.5 701.5,305.5 696.5,310.5 691.5,305.5 696.5,305.5" stroke="#840000" stroke-width="1.0" fill="none" stroke-linejoin="miter"/>
<text x="0" y="0" transform="translate(697.8 245) scale(0.86 1)" fill="#006464" stroke="#006464" stroke-width="0.4" font-size="8.0" text-anchor="start" textLength="15.35" lengthAdjust="spacing">TP1</text>
<text x="0" y="0" transform="translate(690 276.2) rotate(-90) scale(0.86 1)" fill="#006464" stroke="#006464" stroke-width="0.4" font-size="8.0" text-anchor="middle" textLength="9.88" lengthAdjust="spacing">C3</text>
<text x="0" y="0" transform="translate(690 309.2) rotate(-90) scale(0.86 1)" fill="#006464" stroke="#006464" stroke-width="0.4" font-size="8.0" text-anchor="middle" textLength="25.93" lengthAdjust="spacing">100nF</text>
<text x="0" y="0" transform="translate(697 323) scale(0.86 1)" fill="#006464" stroke="#006464" stroke-width="0.4" font-size="8.0" text-anchor="middle" textLength="15.47" lengthAdjust="spacing">GND</text>
<line x1="741.5" y1="290.5" x2="731.5" y2="290.5" stroke="#840000" stroke-width="1.0" stroke-linecap="square"/>
<circle cx="728.5" cy="290.5" r="3.1" stroke="#840000" stroke-width="1.0" fill="none"/>
<line x1="741.5" y1="300.5" x2="731.5" y2="300.5" stroke="#840000" stroke-width="1.0" stroke-linecap="square"/>
<circle cx="728.5" cy="300.5" r="3.1" stroke="#840000" stroke-width="1.0" fill="none"/>
<text x="0" y="0" transform="translate(725 293.8) scale(0.86 1)" fill="#006464" stroke="#006464" stroke-width="0.4" font-size="8.0" text-anchor="end" textLength="15.35" lengthAdjust="spacing">TP2</text>
<text x="0" y="0" transform="translate(722.2 305.8) scale(0.86 1)" fill="#006464" stroke="#006464" stroke-width="0.4" font-size="8.0" text-anchor="end" textLength="15.35" lengthAdjust="spacing">TP3</text>
<line x1="850.5" y1="271.5" x2="859.5" y2="271.5" stroke="#840000" stroke-width="1.0" stroke-linecap="square"/>
<text x="0" y="0" transform="translate(846.63 273.63) scale(0.86 1)" fill="#006464" stroke="#006464" stroke-width="0.4" font-size="8.0" text-anchor="end" textLength="15.35" lengthAdjust="spacing">PB0</text>
<text x="0" y="0" transform="translate(851.03 269.83) scale(0.86 1)" fill="#a90000" stroke="#a90000" stroke-width="0.4" font-size="8.0" text-anchor="start" textLength="9.77" lengthAdjust="spacing">12</text>
<line x1="850.5" y1="280.5" x2="859.5" y2="280.5" stroke="#840000" stroke-width="1.0" stroke-linecap="square"/>
<text x="0" y="0" transform="translate(846.63 283.54) scale(0.86 1)" fill="#006464" stroke="#006464" stroke-width="0.4" font-size="8.0" text-anchor="end" textLength="15.35" lengthAdjust="spacing">PB1</text>
<text x="0" y="0" transform="translate(851.03 279.74) scale(0.86 1)" fill="#a90000" stroke="#a90000" stroke-width="0.4" font-size="8.0" text-anchor="start" textLength="9.77" lengthAdjust="spacing">13</text>
<polygon points="859.5,280.5 864.5,275.5 880.5,275.5 880.5,285.5 864.5,285.5" stroke="#840000" stroke-width="1.0" fill="none" stroke-linejoin="miter"/>
<text x="0" y="0" transform="translate(872.72 283.74) scale(0.86 1)" fill="#840000" stroke="#840000" stroke-width="0.4" font-size="8.6" text-anchor="middle" textLength="14" lengthAdjust="spacing">INT</text>
<line x1="850.5" y1="290.5" x2="859.5" y2="290.5" stroke="#840000" stroke-width="1.0" stroke-linecap="square"/>
<text x="0" y="0" transform="translate(846.63 293.45) scale(0.86 1)" fill="#006464" stroke="#006464" stroke-width="0.4" font-size="8.0" text-anchor="end" textLength="15.35" lengthAdjust="spacing">PB2</text>
<text x="0" y="0" transform="translate(851.03 289.65) scale(0.86 1)" fill="#a90000" stroke="#a90000" stroke-width="0.4" font-size="8.0" text-anchor="start" textLength="9.77" lengthAdjust="spacing">14</text>
<polygon points="859.5,290.5 864.5,285.5 879.5,285.5 879.5,295.5 864.5,295.5" stroke="#840000" stroke-width="1.0" fill="none" stroke-linejoin="miter"/>
<text x="0" y="0" transform="translate(872.22 293.65) scale(0.86 1)" fill="#840000" stroke="#840000" stroke-width="0.4" font-size="8.6" text-anchor="middle" textLength="10.75" lengthAdjust="spacing">CS</text>
<line x1="850.5" y1="300.5" x2="859.5" y2="300.5" stroke="#840000" stroke-width="1.0" stroke-linecap="square"/>
<text x="0" y="0" transform="translate(846.63 303.36) scale(0.86 1)" fill="#006464" stroke="#006464" stroke-width="0.4" font-size="8.0" text-anchor="end" textLength="15.35" lengthAdjust="spacing">PB3</text>
<text x="0" y="0" transform="translate(851.03 299.56) scale(0.86 1)" fill="#a90000" stroke="#a90000" stroke-width="0.4" font-size="8.0" text-anchor="start" textLength="9.77" lengthAdjust="spacing">15</text>
<polygon points="859.5,300.5 864.5,295.5 887.5,295.5 887.5,305.5 864.5,305.5" stroke="#840000" stroke-width="1.0" fill="none" stroke-linejoin="miter"/>
<text x="0" y="0" transform="translate(876.27 303.56) scale(0.86 1)" fill="#840000" stroke="#840000" stroke-width="0.4" font-size="8.6" text-anchor="middle" textLength="20.75" lengthAdjust="spacing">MOSI</text>
<line x1="850.5" y1="310.5" x2="859.5" y2="310.5" stroke="#840000" stroke-width="1.0" stroke-linecap="square"/>
<text x="0" y="0" transform="translate(846.63 313.27) scale(0.86 1)" fill="#006464" stroke="#006464" stroke-width="0.4" font-size="8.0" text-anchor="end" textLength="15.35" lengthAdjust="spacing">PB4</text>
<text x="0" y="0" transform="translate(851.03 309.47) scale(0.86 1)" fill="#a90000" stroke="#a90000" stroke-width="0.4" font-size="8.0" text-anchor="start" textLength="9.77" lengthAdjust="spacing">16</text>
<polygon points="859.5,310.5 864.5,305.5 887.5,305.5 887.5,315.5 864.5,315.5" stroke="#840000" stroke-width="1.0" fill="none" stroke-linejoin="miter"/>
<text x="0" y="0" transform="translate(876.27 313.47) scale(0.86 1)" fill="#840000" stroke="#840000" stroke-width="0.4" font-size="8.6" text-anchor="middle" textLength="20.75" lengthAdjust="spacing">MISO</text>
<line x1="850.5" y1="320.5" x2="859.5" y2="320.5" stroke="#840000" stroke-width="1.0" stroke-linecap="square"/>
<text x="0" y="0" transform="translate(846.63 323.18) scale(0.86 1)" fill="#006464" stroke="#006464" stroke-width="0.4" font-size="8.0" text-anchor="end" textLength="15.35" lengthAdjust="spacing">PB5</text>
<text x="0" y="0" transform="translate(851.03 319.38) scale(0.86 1)" fill="#a90000" stroke="#a90000" stroke-width="0.4" font-size="8.0" text-anchor="start" textLength="9.77" lengthAdjust="spacing">17</text>
<polygon points="859.5,320.5 864.5,315.5 884.5,315.5 884.5,325.5 864.5,325.5" stroke="#840000" stroke-width="1.0" fill="none" stroke-linejoin="miter"/>
<text x="0" y="0" transform="translate(874.72 323.38) scale(0.86 1)" fill="#840000" stroke="#840000" stroke-width="0.4" font-size="8.6" text-anchor="middle" textLength="16.62" lengthAdjust="spacing">SCK</text>
<line x1="850.5" y1="330.5" x2="859.5" y2="330.5" stroke="#840000" stroke-width="1.0" stroke-linecap="square"/>
<text x="0" y="0" transform="translate(846.63 333.09) scale(0.86 1)" fill="#006464" stroke="#006464" stroke-width="0.4" font-size="8.0" text-anchor="end" textLength="47.44" lengthAdjust="spacing">XTAL1/PB6</text>
<text x="0" y="0" transform="translate(851.03 329.29) scale(0.86 1)" fill="#a90000" stroke="#a90000" stroke-width="0.4" font-size="8.0" text-anchor="start">7</text>
<line x1="850.5" y1="340.5" x2="859.5" y2="340.5" stroke="#840000" stroke-width="1.0" stroke-linecap="square"/>
<text x="0" y="0" transform="translate(846.63 343) scale(0.86 1)" fill="#006464" stroke="#006464" stroke-width="0.4" font-size="8.0" text-anchor="end" textLength="47.44" lengthAdjust="spacing">XTAL2/PB7</text>
<text x="0" y="0" transform="translate(851.03 339.2) scale(0.86 1)" fill="#a90000" stroke="#a90000" stroke-width="0.4" font-size="8.0" text-anchor="start">8</text>
<line x1="850.5" y1="360.5" x2="859.5" y2="360.5" stroke="#840000" stroke-width="1.0" stroke-linecap="square"/>
<text x="0" y="0" transform="translate(846.63 362.82) scale(0.86 1)" fill="#006464" stroke="#006464" stroke-width="0.4" font-size="8.0" text-anchor="end" textLength="15.35" lengthAdjust="spacing">PC0</text>
<text x="0" y="0" transform="translate(851.03 359.02) scale(0.86 1)" fill="#a90000" stroke="#a90000" stroke-width="0.4" font-size="8.0" text-anchor="start" textLength="9.77" lengthAdjust="spacing">23</text>
<polygon points="859.5,360.5 864.5,355.5 887.5,355.5 887.5,365.5 864.5,365.5" stroke="#840000" stroke-width="1.0" fill="none" stroke-linejoin="miter"/>
<text x="0" y="0" transform="translate(876.52 363.02) scale(0.86 1)" fill="#840000" stroke="#840000" stroke-width="0.4" font-size="8.6" text-anchor="middle" textLength="22.38" lengthAdjust="spacing">COL0</text>
<line x1="850.5" y1="370.5" x2="859.5" y2="370.5" stroke="#840000" stroke-width="1.0" stroke-linecap="square"/>
<text x="0" y="0" transform="translate(846.63 372.73) scale(0.86 1)" fill="#006464" stroke="#006464" stroke-width="0.4" font-size="8.0" text-anchor="end" textLength="15.35" lengthAdjust="spacing">PC1</text>
<text x="0" y="0" transform="translate(851.03 368.93) scale(0.86 1)" fill="#a90000" stroke="#a90000" stroke-width="0.4" font-size="8.0" text-anchor="start" textLength="9.77" lengthAdjust="spacing">24</text>
<polygon points="859.5,370.5 864.5,365.5 887.5,365.5 887.5,375.5 864.5,375.5" stroke="#840000" stroke-width="1.0" fill="none" stroke-linejoin="miter"/>
<text x="0" y="0" transform="translate(876.52 372.93) scale(0.86 1)" fill="#840000" stroke="#840000" stroke-width="0.4" font-size="8.6" text-anchor="middle" textLength="22.38" lengthAdjust="spacing">COL1</text>
<line x1="850.5" y1="380.5" x2="859.5" y2="380.5" stroke="#840000" stroke-width="1.0" stroke-linecap="square"/>
<text x="0" y="0" transform="translate(846.63 382.64) scale(0.86 1)" fill="#006464" stroke="#006464" stroke-width="0.4" font-size="8.0" text-anchor="end" textLength="15.35" lengthAdjust="spacing">PC2</text>
<text x="0" y="0" transform="translate(851.03 378.84) scale(0.86 1)" fill="#a90000" stroke="#a90000" stroke-width="0.4" font-size="8.0" text-anchor="start" textLength="9.77" lengthAdjust="spacing">25</text>
<polygon points="859.5,380.5 864.5,375.5 887.5,375.5 887.5,385.5 864.5,385.5" stroke="#840000" stroke-width="1.0" fill="none" stroke-linejoin="miter"/>
<text x="0" y="0" transform="translate(876.52 382.84) scale(0.86 1)" fill="#840000" stroke="#840000" stroke-width="0.4" font-size="8.6" text-anchor="middle" textLength="22.38" lengthAdjust="spacing">COL2</text>
<line x1="850.5" y1="389.5" x2="859.5" y2="389.5" stroke="#840000" stroke-width="1.0" stroke-linecap="square"/>
<text x="0" y="0" transform="translate(846.63 392.55) scale(0.86 1)" fill="#006464" stroke="#006464" stroke-width="0.4" font-size="8.0" text-anchor="end" textLength="15.35" lengthAdjust="spacing">PC3</text>
<text x="0" y="0" transform="translate(851.03 388.75) scale(0.86 1)" fill="#a90000" stroke="#a90000" stroke-width="0.4" font-size="8.0" text-anchor="start" textLength="9.77" lengthAdjust="spacing">26</text>
<polygon points="859.5,389.5 864.5,384.5 889.5,384.5 889.5,394.5 864.5,394.5" stroke="#840000" stroke-width="1.0" fill="none" stroke-linejoin="miter"/>
<text x="0" y="0" transform="translate(877.37 392.75) scale(0.86 1)" fill="#840000" stroke="#840000" stroke-width="0.4" font-size="8.6" text-anchor="middle" textLength="23.25" lengthAdjust="spacing">ROW4</text>
<line x1="850.5" y1="399.5" x2="859.5" y2="399.5" stroke="#840000" stroke-width="1.0" stroke-linecap="square"/>
<text x="0" y="0" transform="translate(846.63 402.46) scale(0.86 1)" fill="#006464" stroke="#006464" stroke-width="0.4" font-size="8.0" text-anchor="end" textLength="15.35" lengthAdjust="spacing">PC4</text>
<text x="0" y="0" transform="translate(851.03 398.66) scale(0.86 1)" fill="#a90000" stroke="#a90000" stroke-width="0.4" font-size="8.0" text-anchor="start" textLength="9.77" lengthAdjust="spacing">27</text>
<polygon points="859.5,399.5 864.5,394.5 889.5,394.5 889.5,404.5 864.5,404.5" stroke="#840000" stroke-width="1.0" fill="none" stroke-linejoin="miter"/>
<text x="0" y="0" transform="translate(877.37 402.66) scale(0.86 1)" fill="#840000" stroke="#840000" stroke-width="0.4" font-size="8.6" text-anchor="middle" textLength="23.25" lengthAdjust="spacing">ROW3</text>
<line x1="850.5" y1="409.5" x2="859.5" y2="409.5" stroke="#840000" stroke-width="1.0" stroke-linecap="square"/>
<text x="0" y="0" transform="translate(846.63 412.37) scale(0.86 1)" fill="#006464" stroke="#006464" stroke-width="0.4" font-size="8.0" text-anchor="end" textLength="15.35" lengthAdjust="spacing">PC5</text>
<text x="0" y="0" transform="translate(851.03 408.57) scale(0.86 1)" fill="#a90000" stroke="#a90000" stroke-width="0.4" font-size="8.0" text-anchor="start" textLength="9.77" lengthAdjust="spacing">28</text>
<polygon points="859.5,409.5 864.5,404.5 889.5,404.5 889.5,414.5 864.5,414.5" stroke="#840000" stroke-width="1.0" fill="none" stroke-linejoin="miter"/>
<text x="0" y="0" transform="translate(877.37 412.57) scale(0.86 1)" fill="#840000" stroke="#840000" stroke-width="0.4" font-size="8.6" text-anchor="middle" textLength="23.25" lengthAdjust="spacing">ROW2</text>
<line x1="850.5" y1="419.5" x2="859.5" y2="419.5" stroke="#840000" stroke-width="1.0" stroke-linecap="square"/>
<text x="0" y="0" transform="translate(846.63 422.28) scale(0.86 1)" fill="#006464" stroke="#006464" stroke-width="0.4" font-size="8.0" text-anchor="end" textLength="47.56" lengthAdjust="spacing">RESET/PC6</text>
<text x="0" y="0" transform="translate(851.03 418.48) scale(0.86 1)" fill="#a90000" stroke="#a90000" stroke-width="0.4" font-size="8.0" text-anchor="start" textLength="9.77" lengthAdjust="spacing">29</text>
<polygon points="859.5,419.5 864.5,414.5 891.5,414.5 891.5,424.5 864.5,424.5" stroke="#840000" stroke-width="1.0" fill="none" stroke-linejoin="miter"/>
<text x="0" y="0" transform="translate(878.52 422.48) scale(0.86 1)" fill="#840000" stroke="#840000" stroke-width="0.4" font-size="8.6" text-anchor="middle" textLength="28.38" lengthAdjust="spacing">RESET</text>
<line x1="850.5" y1="439.5" x2="859.5" y2="439.5" stroke="#840000" stroke-width="1.0" stroke-linecap="square"/>
<text x="0" y="0" transform="translate(846.63 442.1) scale(0.86 1)" fill="#006464" stroke="#006464" stroke-width="0.4" font-size="8.0" text-anchor="end" textLength="15.35" lengthAdjust="spacing">PD0</text>
<text x="0" y="0" transform="translate(851.03 438.3) scale(0.86 1)" fill="#a90000" stroke="#a90000" stroke-width="0.4" font-size="8.0" text-anchor="start" textLength="9.77" lengthAdjust="spacing">30</text>
<polygon points="859.5,439.5 864.5,434.5 889.5,434.5 889.5,444.5 864.5,444.5" stroke="#840000" stroke-width="1.0" fill="none" stroke-linejoin="miter"/>
<text x="0" y="0" transform="translate(877.37 442.3) scale(0.86 1)" fill="#840000" stroke="#840000" stroke-width="0.4" font-size="8.6" text-anchor="middle" textLength="23.25" lengthAdjust="spacing">ROW1</text>
<line x1="850.5" y1="449.5" x2="859.5" y2="449.5" stroke="#840000" stroke-width="1.0" stroke-linecap="square"/>
<text x="0" y="0" transform="translate(846.63 452.01) scale(0.86 1)" fill="#006464" stroke="#006464" stroke-width="0.4" font-size="8.0" text-anchor="end" textLength="15.35" lengthAdjust="spacing">PD1</text>
<text x="0" y="0" transform="translate(851.03 448.21) scale(0.86 1)" fill="#a90000" stroke="#a90000" stroke-width="0.4" font-size="8.0" text-anchor="start" textLength="9.77" lengthAdjust="spacing">31</text>
<polygon points="859.5,449.5 864.5,444.5 889.5,444.5 889.5,454.5 864.5,454.5" stroke="#840000" stroke-width="1.0" fill="none" stroke-linejoin="miter"/>
<text x="0" y="0" transform="translate(877.37 452.21) scale(0.86 1)" fill="#840000" stroke="#840000" stroke-width="0.4" font-size="8.6" text-anchor="middle" textLength="23.25" lengthAdjust="spacing">ROW0</text>
<line x1="850.5" y1="459.5" x2="859.5" y2="459.5" stroke="#840000" stroke-width="1.0" stroke-linecap="square"/>
<text x="0" y="0" transform="translate(846.63 461.92) scale(0.86 1)" fill="#006464" stroke="#006464" stroke-width="0.4" font-size="8.0" text-anchor="end" textLength="15.35" lengthAdjust="spacing">PD2</text>
<text x="0" y="0" transform="translate(851.03 458.12) scale(0.86 1)" fill="#a90000" stroke="#a90000" stroke-width="0.4" font-size="8.0" text-anchor="start" textLength="9.77" lengthAdjust="spacing">32</text>
<polygon points="859.5,459.5 864.5,454.5 887.5,454.5 887.5,464.5 864.5,464.5" stroke="#840000" stroke-width="1.0" fill="none" stroke-linejoin="miter"/>
<text x="0" y="0" transform="translate(876.52 462.12) scale(0.86 1)" fill="#840000" stroke="#840000" stroke-width="0.4" font-size="8.6" text-anchor="middle" textLength="22.38" lengthAdjust="spacing">COL3</text>
<line x1="850.5" y1="469.5" x2="859.5" y2="469.5" stroke="#840000" stroke-width="1.0" stroke-linecap="square"/>
<text x="0" y="0" transform="translate(846.63 471.83) scale(0.86 1)" fill="#006464" stroke="#006464" stroke-width="0.4" font-size="8.0" text-anchor="end" textLength="15.35" lengthAdjust="spacing">PD3</text>
<text x="0" y="0" transform="translate(851.03 468.03) scale(0.86 1)" fill="#a90000" stroke="#a90000" stroke-width="0.4" font-size="8.0" text-anchor="start">1</text>
<polygon points="859.5,469.5 864.5,464.5 887.5,464.5 887.5,474.5 864.5,474.5" stroke="#840000" stroke-width="1.0" fill="none" stroke-linejoin="miter"/>
<text x="0" y="0" transform="translate(876.52 472.03) scale(0.86 1)" fill="#840000" stroke="#840000" stroke-width="0.4" font-size="8.6" text-anchor="middle" textLength="22.38" lengthAdjust="spacing">COL4</text>
<line x1="850.5" y1="479.5" x2="859.5" y2="479.5" stroke="#840000" stroke-width="1.0" stroke-linecap="square"/>
<text x="0" y="0" transform="translate(846.63 481.74) scale(0.86 1)" fill="#006464" stroke="#006464" stroke-width="0.4" font-size="8.0" text-anchor="end" textLength="15.35" lengthAdjust="spacing">PD4</text>
<text x="0" y="0" transform="translate(851.03 477.94) scale(0.86 1)" fill="#a90000" stroke="#a90000" stroke-width="0.4" font-size="8.0" text-anchor="start">2</text>
<polygon points="859.5,479.5 864.5,474.5 887.5,474.5 887.5,484.5 864.5,484.5" stroke="#840000" stroke-width="1.0" fill="none" stroke-linejoin="miter"/>
<text x="0" y="0" transform="translate(876.52 481.94) scale(0.86 1)" fill="#840000" stroke="#840000" stroke-width="0.4" font-size="8.6" text-anchor="middle" textLength="22.38" lengthAdjust="spacing">COL5</text>
<line x1="850.5" y1="489.5" x2="859.5" y2="489.5" stroke="#840000" stroke-width="1.0" stroke-linecap="square"/>
<text x="0" y="0" transform="translate(846.63 491.65) scale(0.86 1)" fill="#006464" stroke="#006464" stroke-width="0.4" font-size="8.0" text-anchor="end" textLength="15.35" lengthAdjust="spacing">PD5</text>
<text x="0" y="0" transform="translate(851.03 487.85) scale(0.86 1)" fill="#a90000" stroke="#a90000" stroke-width="0.4" font-size="8.0" text-anchor="start">9</text>
<polygon points="859.5,489.5 864.5,484.5 887.5,484.5 887.5,494.5 864.5,494.5" stroke="#840000" stroke-width="1.0" fill="none" stroke-linejoin="miter"/>
<text x="0" y="0" transform="translate(876.52 491.85) scale(0.86 1)" fill="#840000" stroke="#840000" stroke-width="0.4" font-size="8.6" text-anchor="middle" textLength="22.38" lengthAdjust="spacing">LED3</text>
<line x1="850.5" y1="498.5" x2="859.5" y2="498.5" stroke="#840000" stroke-width="1.0" stroke-linecap="square"/>
<text x="0" y="0" transform="translate(846.63 501.56) scale(0.86 1)" fill="#006464" stroke="#006464" stroke-width="0.4" font-size="8.0" text-anchor="end" textLength="15.35" lengthAdjust="spacing">PD6</text>
<text x="0" y="0" transform="translate(851.03 497.76) scale(0.86 1)" fill="#a90000" stroke="#a90000" stroke-width="0.4" font-size="8.0" text-anchor="start" textLength="9.77" lengthAdjust="spacing">10</text>
<polygon points="859.5,498.5 864.5,493.5 887.5,493.5 887.5,503.5 864.5,503.5" stroke="#840000" stroke-width="1.0" fill="none" stroke-linejoin="miter"/>
<text x="0" y="0" transform="translate(876.52 501.76) scale(0.86 1)" fill="#840000" stroke="#840000" stroke-width="0.4" font-size="8.6" text-anchor="middle" textLength="22.38" lengthAdjust="spacing">LED2</text>
<line x1="850.5" y1="508.5" x2="859.5" y2="508.5" stroke="#840000" stroke-width="1.0" stroke-linecap="square"/>
<text x="0" y="0" transform="translate(846.63 511.47) scale(0.86 1)" fill="#006464" stroke="#006464" stroke-width="0.4" font-size="8.0" text-anchor="end" textLength="15.35" lengthAdjust="spacing">PD7</text>
<text x="0" y="0" transform="translate(851.03 507.67) scale(0.86 1)" fill="#a90000" stroke="#a90000" stroke-width="0.4" font-size="8.0" text-anchor="start" textLength="9.77" lengthAdjust="spacing">11</text>
<polygon points="859.5,508.5 864.5,503.5 887.5,503.5 887.5,513.5 864.5,513.5" stroke="#840000" stroke-width="1.0" fill="none" stroke-linejoin="miter"/>
<text x="0" y="0" transform="translate(876.52 511.67) scale(0.86 1)" fill="#840000" stroke="#840000" stroke-width="0.4" font-size="8.6" text-anchor="middle" textLength="22.38" lengthAdjust="spacing">LED1</text>
<line x1="804.5" y1="415.5" x2="826.5" y2="415.5" stroke="#006464" stroke-width="0.8" stroke-linecap="square"/>
<line x1="859.5" y1="271.5" x2="869.5" y2="271.5" stroke="#840000" stroke-width="1.0" stroke-linecap="square"/>
<circle cx="872.5" cy="271.5" r="3.1" stroke="#840000" stroke-width="1.0" fill="none"/>
<text x="0" y="0" transform="translate(880 268.6) scale(0.86 1)" fill="#006464" stroke="#006464" stroke-width="0.4" font-size="8.0" text-anchor="start" textLength="15.35" lengthAdjust="spacing">TP4</text>
<text x="0" y="0" transform="translate(880 278.4) scale(0.86 1)" fill="#006464" stroke="#006464" stroke-width="0.4" font-size="8.0" text-anchor="start" textLength="41.74" lengthAdjust="spacing">TestPoint</text>
<rect x="945.5" y="216.5" width="7" height="20" stroke="#840000" stroke-width="1.0" fill="none"/>
<line x1="949.5" y1="211.5" x2="949.5" y2="216.5" stroke="#840000" stroke-width="1.0" stroke-linecap="square"/>
<line x1="949.5" y1="236.5" x2="949.5" y2="241.5" stroke="#840000" stroke-width="1.0" stroke-linecap="square"/>
<line x1="949.5" y1="211.5" x2="949.5" y2="201.5" stroke="#840000" stroke-width="1.0" stroke-linecap="square"/>
<polyline points="946.5,206.5 949.5,201.5 952.5,206.5" stroke="#840000" stroke-width="1.0" fill="none" stroke-linejoin="miter"/>
<text x="0" y="0" transform="translate(949.12 194) scale(0.86 1)" fill="#006464" stroke="#006464" stroke-width="0.4" font-size="8.0" text-anchor="middle" textLength="15.35" lengthAdjust="spacing">+5V</text>
<text x="0" y="0" transform="translate(951.62 226.44) rotate(-90) scale(0.86 1)" fill="#006464" stroke="#006464" stroke-width="0.4" font-size="8.0" text-anchor="middle" textLength="9.88" lengthAdjust="spacing">R8</text>
<text x="0" y="0" transform="translate(960.72 226.44) rotate(-90) scale(0.86 1)" fill="#006464" stroke="#006464" stroke-width="0.4" font-size="8.0" text-anchor="middle" textLength="15.23" lengthAdjust="spacing">10K</text>
<polygon points="939.5,241.5 934.5,236.5 907.5,236.5 907.5,246.5 934.5,246.5" stroke="#840000" stroke-width="1.0" fill="none" stroke-linejoin="miter"/>
<text x="0" y="0" transform="translate(921.46 244.1) scale(0.86 1)" fill="#840000" stroke="#840000" stroke-width="0.4" font-size="8.6" text-anchor="middle" textLength="28.38" lengthAdjust="spacing">RESET</text>
<polyline points="939.5,241.5 968.5,241.5" stroke="#009600" stroke-width="1.0" fill="none" stroke-linejoin="miter"/>
<circle cx="949.5" cy="241.5" r="1.9" fill="#009600"/>
<circle cx="980.5" cy="241.5" r="2.1" stroke="#840000" stroke-width="1.0" fill="none"/>
<circle cx="996.5" cy="241.5" r="2.1" stroke="#840000" stroke-width="1.0" fill="none"/>
<line x1="968.5" y1="241.5" x2="978.5" y2="241.5" stroke="#840000" stroke-width="1.0" stroke-linecap="square"/>
<line x1="998.5" y1="241.5" x2="1008.5" y2="241.5" stroke="#840000" stroke-width="1.0" stroke-linecap="square"/>
<line x1="977.5" y1="236.5" x2="999.5" y2="236.5" stroke="#840000" stroke-width="1.0" stroke-linecap="square"/>
<line x1="988.5" y1="236.5" x2="988.5" y2="229.5" stroke="#840000" stroke-width="1.0" stroke-linecap="square"/>
<polyline points="1008.5,241.5 1013.5,241.5" stroke="#009600" stroke-width="1.0" fill="none" stroke-linejoin="miter"/>
<polyline points="1013.5,241.5 1013.5,246.5 1018.5,246.5 1013.5,251.5 1008.5,246.5 1013.5,246.5" stroke="#840000" stroke-width="1.0" fill="none" stroke-linejoin="miter"/>
<text x="0" y="0" transform="translate(1012.6 262.4) scale(0.86 1)" fill="#006464" stroke="#006464" stroke-width="0.4" font-size="8.0" text-anchor="middle" textLength="15.47" lengthAdjust="spacing">GND</text>
<text x="0" y="0" transform="translate(988.8 213.2) scale(0.86 1)" fill="#006464" stroke="#006464" stroke-width="0.4" font-size="8.0" text-anchor="middle" textLength="21.51" lengthAdjust="spacing">SW31</text>
<text x="0" y="0" transform="translate(988.8 223.4) scale(0.86 1)" fill="#006464" stroke="#006464" stroke-width="0.4" font-size="8.0" text-anchor="middle" textLength="37.79" lengthAdjust="spacing">SW_Push</text>
<polyline points="859.5,330.5 889.5,330.5 889.5,320.5 973.5,320.5" stroke="#009600" stroke-width="1.0" fill="none" stroke-linejoin="miter"/>
<polyline points="859.5,340.5 889.5,340.5 889.5,350.5 973.5,350.5" stroke="#009600" stroke-width="1.0" fill="none" stroke-linejoin="miter"/>
<polyline points="1003.5,320.5 1018.5,320.5 1018.5,350.5 1003.5,350.5" stroke="#009600" stroke-width="1.0" fill="none" stroke-linejoin="miter"/>
<line x1="985.66" y1="312.3" x2="985.66" y2="328.7" stroke="#840000" stroke-width="2" stroke-linecap="round"/>
<line x1="991.86" y1="312.3" x2="991.86" y2="328.7" stroke="#840000" stroke-width="2" stroke-linecap="round"/>
<line x1="973.5" y1="320.5" x2="984.5" y2="320.5" stroke="#840000" stroke-width="1.0" stroke-linecap="square"/>
<line x1="992.5" y1="320.5" x2="1003.5" y2="320.5" stroke="#840000" stroke-width="1.0" stroke-linecap="square"/>
<line x1="985.66" y1="342.3" x2="985.66" y2="358.7" stroke="#840000" stroke-width="2" stroke-linecap="round"/>
<line x1="991.86" y1="342.3" x2="991.86" y2="358.7" stroke="#840000" stroke-width="2" stroke-linecap="round"/>
<line x1="973.5" y1="350.5" x2="984.5" y2="350.5" stroke="#840000" stroke-width="1.0" stroke-linecap="square"/>
<line x1="992.5" y1="350.5" x2="1003.5" y2="350.5" stroke="#840000" stroke-width="1.0" stroke-linecap="square"/>
<circle cx="1018.5" cy="350.5" r="1.9" fill="#009600"/>
<polyline points="1018.5,350.5 1018.5,355.5 1023.5,355.5 1018.5,360.5 1013.5,355.5 1018.5,355.5" stroke="#840000" stroke-width="1.0" fill="none" stroke-linejoin="miter"/>
<text x="0" y="0" transform="translate(1018.6 372.6) scale(0.86 1)" fill="#006464" stroke="#006464" stroke-width="0.4" font-size="8.0" text-anchor="middle" textLength="15.47" lengthAdjust="spacing">GND</text>
<text x="0" y="0" transform="translate(988.8 294.2) scale(0.86 1)" fill="#006464" stroke="#006464" stroke-width="0.4" font-size="8.0" text-anchor="middle" textLength="9.88" lengthAdjust="spacing">C1</text>
<text x="0" y="0" transform="translate(988.8 304) scale(0.86 1)" fill="#006464" stroke="#006464" stroke-width="0.4" font-size="8.0" text-anchor="middle" textLength="20.58" lengthAdjust="spacing">22pF</text>
<text x="0" y="0" transform="translate(988.8 368.6) scale(0.86 1)" fill="#006464" stroke="#006464" stroke-width="0.4" font-size="8.0" text-anchor="middle" textLength="9.88" lengthAdjust="spacing">C2</text>
<text x="0" y="0" transform="translate(988.8 378.4) scale(0.86 1)" fill="#006464" stroke="#006464" stroke-width="0.4" font-size="8.0" text-anchor="middle" textLength="18.95" lengthAdjust="spacing">22pf</text>
<rect x="895.5" y="325.5" width="8" height="20" stroke="#840000" stroke-width="1.0" fill="none"/>
<line x1="899.5" y1="320.5" x2="899.5" y2="325.5" stroke="#840000" stroke-width="1.0" stroke-linecap="square"/>
<line x1="899.5" y1="345.5" x2="899.5" y2="350.5" stroke="#840000" stroke-width="1.0" stroke-linecap="square"/>
<circle cx="899.5" cy="320.5" r="1.9" fill="#009600"/>
<circle cx="899.5" cy="350.5" r="1.9" fill="#009600"/>
<text x="0" y="0" transform="translate(907.8 333) scale(0.86 1)" fill="#006464" stroke="#006464" stroke-width="0.4" font-size="8.0" text-anchor="start" textLength="9.88" lengthAdjust="spacing">R7</text>
<text x="0" y="0" transform="translate(907.8 343) scale(0.86 1)" fill="#006464" stroke="#006464" stroke-width="0.4" font-size="8.0" text-anchor="start">R</text>
<circle cx="944.5" cy="320.5" r="1.9" fill="#009600"/>
<circle cx="944.5" cy="350.5" r="1.9" fill="#009600"/>
<line x1="944.5" y1="320.5" x2="944.5" y2="327.5" stroke="#840000" stroke-width="1.0" stroke-linecap="square"/>
<line x1="944.5" y1="343.5" x2="944.5" y2="350.5" stroke="#840000" stroke-width="1.0" stroke-linecap="square"/>
<line x1="939" y1="327.4" x2="950.2" y2="327.4" stroke="#840000" stroke-width="2"/>
<line x1="939" y1="343.3" x2="950.2" y2="343.3" stroke="#840000" stroke-width="2"/>
<rect x="934.5" y="330.5" width="20" height="9" stroke="#840000" stroke-width="1.0" fill="none"/>
<polyline points="933.5,325.5 930.5,325.5 930.5,345.5 933.5,345.5" stroke="#840000" stroke-width="1.0" fill="none" stroke-linejoin="miter"/>
<polyline points="953.5,325.5 958.5,325.5 958.5,345.5 953.5,345.5" stroke="#840000" stroke-width="1.0" fill="none" stroke-linejoin="miter"/>
<line x1="924.5" y1="335.5" x2="930.5" y2="335.5" stroke="#840000" stroke-width="1.0" stroke-linecap="square"/>
<line x1="958.5" y1="335.5" x2="963.5" y2="335.5" stroke="#840000" stroke-width="1.0" stroke-linecap="square"/>
<polyline points="924.5,335.5 924.5,355.5" stroke="#009600" stroke-width="1.0" fill="none" stroke-linejoin="miter"/>
<polyline points="963.5,335.5 963.5,355.5" stroke="#009600" stroke-width="1.0" fill="none" stroke-linejoin="miter"/>
<polyline points="924.5,355.5 924.5,360.5 929.5,360.5 924.5,365.5 919.5,360.5 924.5,360.5" stroke="#840000" stroke-width="1.0" fill="none" stroke-linejoin="miter"/>
<polyline points="963.5,355.5 963.5,360.5 968.5,360.5 963.5,365.5 958.5,360.5 963.5,360.5" stroke="#840000" stroke-width="1.0" fill="none" stroke-linejoin="miter"/>
<text x="0" y="0" transform="translate(924.2 377.6) scale(0.86 1)" fill="#006464" stroke="#006464" stroke-width="0.4" font-size="8.0" text-anchor="middle" textLength="15.47" lengthAdjust="spacing">GND</text>
<text x="0" y="0" transform="translate(964 377.6) scale(0.86 1)" fill="#006464" stroke="#006464" stroke-width="0.4" font-size="8.0" text-anchor="middle" textLength="15.47" lengthAdjust="spacing">GND</text>
<text x="0" y="0" transform="translate(926.6 334.6) scale(0.86 1)" fill="#a90000" stroke="#a90000" stroke-width="0.4" font-size="8.0" text-anchor="middle">4</text>
<text x="0" y="0" transform="translate(961.8 334.6) scale(0.86 1)" fill="#a90000" stroke="#a90000" stroke-width="0.4" font-size="8.0" text-anchor="middle">2</text>
<text x="0" y="0" transform="translate(943.6 323.8) rotate(-90) scale(0.86 1)" fill="#a90000" stroke="#a90000" stroke-width="0.4" font-size="8.0" text-anchor="middle">1</text>
<text x="0" y="0" transform="translate(943.6 347.8) rotate(-90) scale(0.86 1)" fill="#a90000" stroke="#a90000" stroke-width="0.4" font-size="8.0" text-anchor="middle">3</text>
<text x="0" y="0" transform="translate(934.9 359) scale(0.86 1)" fill="#006464" stroke="#006464" stroke-width="0.4" font-size="8.0" text-anchor="start" textLength="21.4" lengthAdjust="spacing">8Mhz</text>
<text x="0" y="0" transform="translate(939 364.5) scale(0.86 1)" fill="#006464" stroke="#006464" stroke-width="0.4" font-size="8.0" text-anchor="start" textLength="9.88" lengthAdjust="spacing">Y2</text>
</svg></body></html>
